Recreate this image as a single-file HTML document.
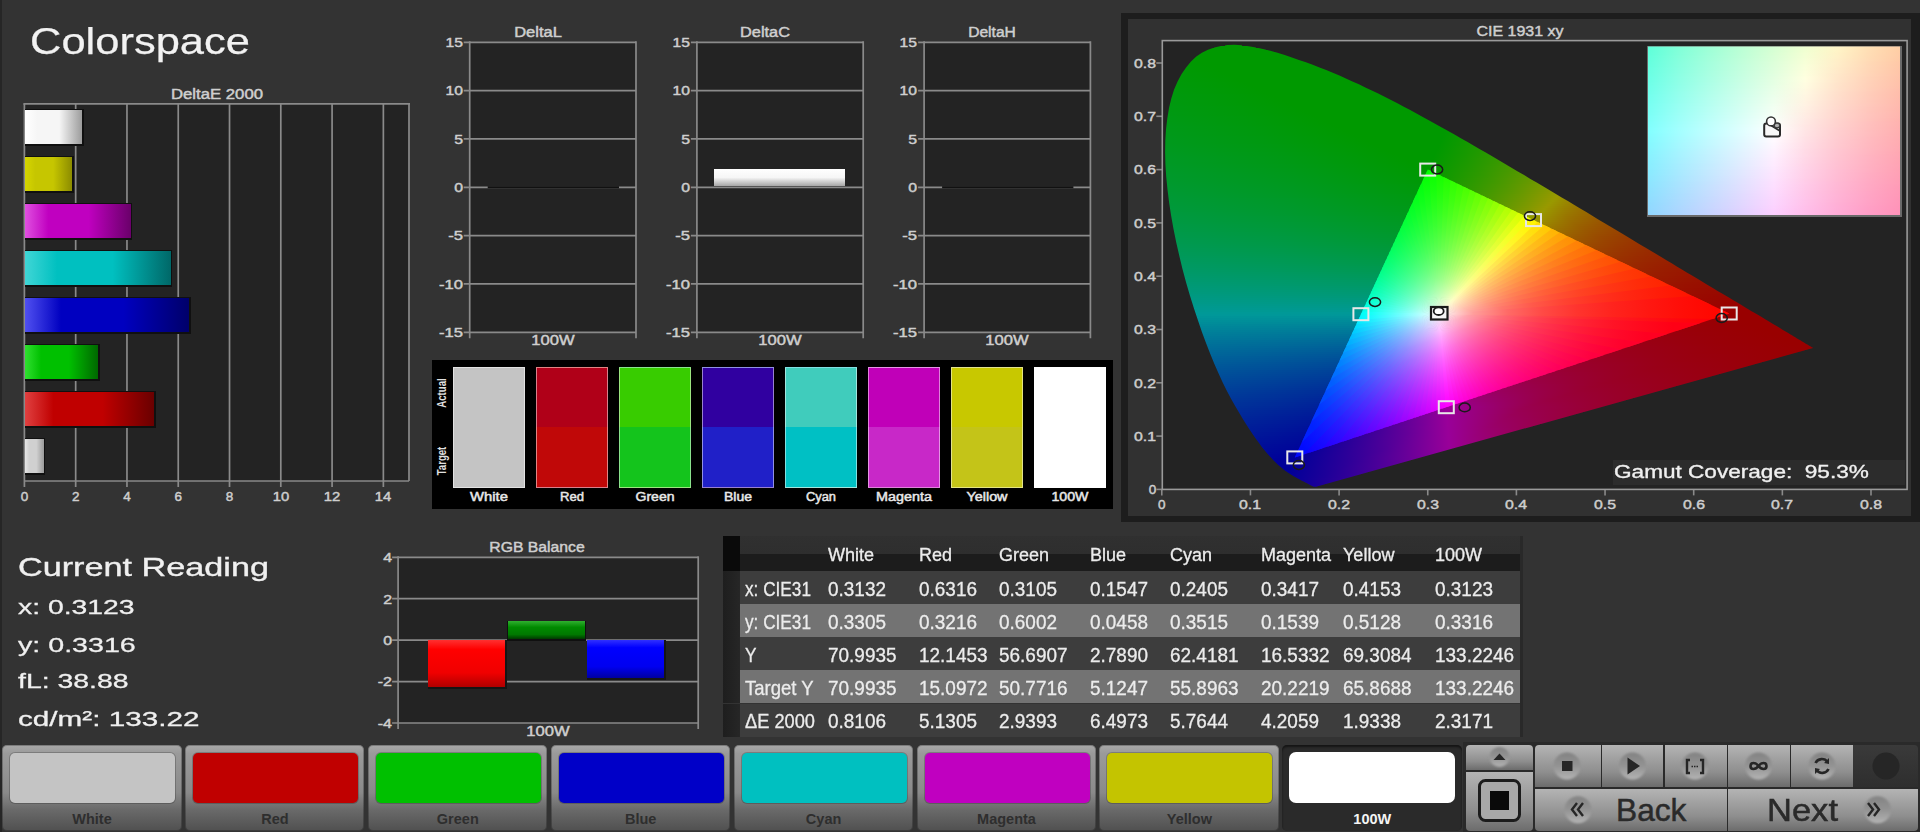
<!DOCTYPE html>
<html><head><meta charset="utf-8"><title>Colorspace</title>
<style>
html,body{margin:0;padding:0;}
body{width:1920px;height:832px;overflow:hidden;background:#333333;position:relative;font-family:"Liberation Sans",sans-serif;}
.t{position:absolute;white-space:pre;line-height:1.117em;height:1.117em;}
.r{position:absolute;box-sizing:border-box;}
svg{position:absolute;left:0;top:0;overflow:visible;}
</style></head><body>

<div class="r" style="left:0.00px;top:0.00px;width:2.00px;height:832.00px;background:#262626;"></div>
<div class="t" style="left:30.00px;top:19.68px;font-size:37.70px;color:#f2f2f2;-webkit-text-stroke:0.25px #f2f2f2;transform:scaleX(1.1537);transform-origin:left top;">Colorspace</div>
<div class="t" style="left:217.00px;top:86.73px;font-size:14.00px;color:#cfcfcf;-webkit-text-stroke:0.45px #cfcfcf;transform:translateX(-50%) scaleX(1.1939);transform-origin:center top;">DeltaE 2000</div>
<div class="r" style="left:24.40px;top:103.80px;width:384.60px;height:377.20px;background:#232323;"></div>
<div class="t" style="left:24.40px;top:488.78px;font-size:13.50px;color:#cfcfcf;-webkit-text-stroke:0.45px #cfcfcf;transform:translateX(-50%);transform-origin:center top;">0</div>
<div class="t" style="left:75.68px;top:488.78px;font-size:13.50px;color:#cfcfcf;-webkit-text-stroke:0.45px #cfcfcf;transform:translateX(-50%);transform-origin:center top;">2</div>
<div class="t" style="left:126.96px;top:488.78px;font-size:13.50px;color:#cfcfcf;-webkit-text-stroke:0.45px #cfcfcf;transform:translateX(-50%);transform-origin:center top;">4</div>
<div class="t" style="left:178.24px;top:488.78px;font-size:13.50px;color:#cfcfcf;-webkit-text-stroke:0.45px #cfcfcf;transform:translateX(-50%);transform-origin:center top;">6</div>
<div class="t" style="left:229.52px;top:488.78px;font-size:13.50px;color:#cfcfcf;-webkit-text-stroke:0.45px #cfcfcf;transform:translateX(-50%);transform-origin:center top;">8</div>
<div class="t" style="left:280.80px;top:488.78px;font-size:13.50px;color:#cfcfcf;-webkit-text-stroke:0.45px #cfcfcf;transform:translateX(-50%) scaleX(1.0988);transform-origin:center top;">10</div>
<div class="t" style="left:332.08px;top:488.78px;font-size:13.50px;color:#cfcfcf;-webkit-text-stroke:0.45px #cfcfcf;transform:translateX(-50%) scaleX(1.0988);transform-origin:center top;">12</div>
<div class="t" style="left:383.36px;top:488.78px;font-size:13.50px;color:#cfcfcf;-webkit-text-stroke:0.45px #cfcfcf;transform:translateX(-50%) scaleX(1.0988);transform-origin:center top;">14</div>
<svg width="1920" height="832" style="z-index:1"><line x1="75.68" y1="103.80" x2="75.68" y2="487.00" stroke="#8a8a8a" stroke-width="1.70"/><line x1="126.96" y1="103.80" x2="126.96" y2="487.00" stroke="#8a8a8a" stroke-width="1.70"/><line x1="178.24" y1="103.80" x2="178.24" y2="487.00" stroke="#8a8a8a" stroke-width="1.70"/><line x1="229.52" y1="103.80" x2="229.52" y2="487.00" stroke="#8a8a8a" stroke-width="1.70"/><line x1="280.80" y1="103.80" x2="280.80" y2="487.00" stroke="#8a8a8a" stroke-width="1.70"/><line x1="332.08" y1="103.80" x2="332.08" y2="487.00" stroke="#8a8a8a" stroke-width="1.70"/><line x1="383.36" y1="103.80" x2="383.36" y2="487.00" stroke="#8a8a8a" stroke-width="1.70"/><line x1="23.40" y1="103.80" x2="410.00" y2="103.80" stroke="#8a8a8a" stroke-width="1.70"/><line x1="24.40" y1="103.80" x2="24.40" y2="487.00" stroke="#8a8a8a" stroke-width="1.70"/><line x1="409.00" y1="103.80" x2="409.00" y2="481.00" stroke="#8a8a8a" stroke-width="1.70"/><line x1="24.40" y1="481.00" x2="409.00" y2="481.00" stroke="#8a8a8a" stroke-width="1.70"/></svg>
<div class="r" style="left:24.90px;top:108.50px;width:58.91px;height:37.00px;background:#101010;z-index:2;"></div>
<div class="r" style="left:24.90px;top:110.00px;width:57.41px;height:34.00px;background:linear-gradient(90deg,#ffffff 0%,#f6f6f6 22%,#f6f6f6 60%,#9c9c9c 100%);z-index:3;"></div>
<div class="r" style="left:24.90px;top:155.50px;width:49.08px;height:37.00px;background:#101010;z-index:2;"></div>
<div class="r" style="left:24.90px;top:157.00px;width:47.58px;height:34.00px;background:linear-gradient(90deg,#d6d600 0%,#c6c600 22%,#c6c600 60%,#8c8c00 100%);z-index:3;"></div>
<div class="r" style="left:24.90px;top:202.50px;width:107.34px;height:37.00px;background:#101010;z-index:2;"></div>
<div class="r" style="left:24.90px;top:204.00px;width:105.84px;height:34.00px;background:linear-gradient(90deg,#e050e0 0%,#c000c0 22%,#c000c0 60%,#6a006a 100%);z-index:3;"></div>
<div class="r" style="left:24.90px;top:249.50px;width:147.30px;height:37.00px;background:#101010;z-index:2;"></div>
<div class="r" style="left:24.90px;top:251.00px;width:145.80px;height:34.00px;background:linear-gradient(90deg,#40d6d6 0%,#00c0c0 22%,#00c0c0 60%,#006868 100%);z-index:3;"></div>
<div class="r" style="left:24.90px;top:296.50px;width:166.09px;height:37.00px;background:#101010;z-index:2;"></div>
<div class="r" style="left:24.90px;top:298.00px;width:164.59px;height:34.00px;background:linear-gradient(90deg,#5050f0 0%,#0000c0 22%,#0000c0 60%,#00006a 100%);z-index:3;"></div>
<div class="r" style="left:24.90px;top:343.50px;width:74.86px;height:37.00px;background:#101010;z-index:2;"></div>
<div class="r" style="left:24.90px;top:345.00px;width:73.36px;height:34.00px;background:linear-gradient(90deg,#30e030 0%,#00c000 22%,#00c000 60%,#006800 100%);z-index:3;"></div>
<div class="r" style="left:24.90px;top:390.50px;width:131.05px;height:37.00px;background:#101010;z-index:2;"></div>
<div class="r" style="left:24.90px;top:392.00px;width:129.55px;height:34.00px;background:linear-gradient(90deg,#e04040 0%,#c00000 22%,#c00000 60%,#6a0000 100%);z-index:3;"></div>
<div class="r" style="left:24.90px;top:437.50px;width:20.28px;height:37.00px;background:#101010;z-index:2;"></div>
<div class="r" style="left:24.90px;top:439.00px;width:18.78px;height:34.00px;background:linear-gradient(90deg,#e6e6e6 0%,#d0d0d0 22%,#d0d0d0 60%,#9a9a9a 100%);z-index:3;"></div>
<div class="r" style="left:469.70px;top:42.30px;width:166.30px;height:290.00px;background:#232323;"></div>
<div class="t" style="left:537.65px;top:25.13px;font-size:14.00px;color:#cfcfcf;-webkit-text-stroke:0.45px #cfcfcf;transform:translateX(-50%) scaleX(1.1762);transform-origin:center top;">DeltaL</div>
<div class="t" style="left:462.70px;top:35.08px;font-size:13.50px;color:#cfcfcf;-webkit-text-stroke:0.45px #cfcfcf;transform:translateX(-100%) scaleX(1.1587);transform-origin:right top;">15</div>
<div class="t" style="left:462.70px;top:83.42px;font-size:13.50px;color:#cfcfcf;-webkit-text-stroke:0.45px #cfcfcf;transform:translateX(-100%) scaleX(1.1587);transform-origin:right top;">10</div>
<div class="t" style="left:462.70px;top:131.75px;font-size:13.50px;color:#cfcfcf;-webkit-text-stroke:0.45px #cfcfcf;transform:translateX(-100%) scaleX(1.1720);transform-origin:right top;">5</div>
<div class="t" style="left:462.70px;top:180.08px;font-size:13.50px;color:#cfcfcf;-webkit-text-stroke:0.45px #cfcfcf;transform:translateX(-100%) scaleX(1.1720);transform-origin:right top;">0</div>
<div class="t" style="left:462.70px;top:228.42px;font-size:13.50px;color:#cfcfcf;-webkit-text-stroke:0.45px #cfcfcf;transform:translateX(-100%) scaleX(1.2329);transform-origin:right top;">-5</div>
<div class="t" style="left:462.70px;top:276.75px;font-size:13.50px;color:#cfcfcf;-webkit-text-stroke:0.45px #cfcfcf;transform:translateX(-100%) scaleX(1.2300);transform-origin:right top;">-10</div>
<div class="t" style="left:462.70px;top:325.08px;font-size:13.50px;color:#cfcfcf;-webkit-text-stroke:0.45px #cfcfcf;transform:translateX(-100%) scaleX(1.2300);transform-origin:right top;">-15</div>
<div class="t" style="left:552.85px;top:333.33px;font-size:14.00px;color:#cfcfcf;-webkit-text-stroke:0.45px #cfcfcf;transform:translateX(-50%) scaleX(1.1839);transform-origin:center top;">100W</div>
<div class="r" style="left:696.90px;top:42.30px;width:166.30px;height:290.00px;background:#232323;"></div>
<div class="t" style="left:764.85px;top:25.13px;font-size:14.00px;color:#cfcfcf;-webkit-text-stroke:0.45px #cfcfcf;transform:translateX(-50%) scaleX(1.1637);transform-origin:center top;">DeltaC</div>
<div class="t" style="left:689.90px;top:35.08px;font-size:13.50px;color:#cfcfcf;-webkit-text-stroke:0.45px #cfcfcf;transform:translateX(-100%) scaleX(1.1587);transform-origin:right top;">15</div>
<div class="t" style="left:689.90px;top:83.42px;font-size:13.50px;color:#cfcfcf;-webkit-text-stroke:0.45px #cfcfcf;transform:translateX(-100%) scaleX(1.1587);transform-origin:right top;">10</div>
<div class="t" style="left:689.90px;top:131.75px;font-size:13.50px;color:#cfcfcf;-webkit-text-stroke:0.45px #cfcfcf;transform:translateX(-100%) scaleX(1.1720);transform-origin:right top;">5</div>
<div class="t" style="left:689.90px;top:180.08px;font-size:13.50px;color:#cfcfcf;-webkit-text-stroke:0.45px #cfcfcf;transform:translateX(-100%) scaleX(1.1720);transform-origin:right top;">0</div>
<div class="t" style="left:689.90px;top:228.42px;font-size:13.50px;color:#cfcfcf;-webkit-text-stroke:0.45px #cfcfcf;transform:translateX(-100%) scaleX(1.2329);transform-origin:right top;">-5</div>
<div class="t" style="left:689.90px;top:276.75px;font-size:13.50px;color:#cfcfcf;-webkit-text-stroke:0.45px #cfcfcf;transform:translateX(-100%) scaleX(1.2300);transform-origin:right top;">-10</div>
<div class="t" style="left:689.90px;top:325.08px;font-size:13.50px;color:#cfcfcf;-webkit-text-stroke:0.45px #cfcfcf;transform:translateX(-100%) scaleX(1.2300);transform-origin:right top;">-15</div>
<div class="t" style="left:780.05px;top:333.33px;font-size:14.00px;color:#cfcfcf;-webkit-text-stroke:0.45px #cfcfcf;transform:translateX(-50%) scaleX(1.1839);transform-origin:center top;">100W</div>
<div class="r" style="left:924.10px;top:42.30px;width:166.30px;height:290.00px;background:#232323;"></div>
<div class="t" style="left:992.05px;top:25.13px;font-size:14.00px;color:#cfcfcf;-webkit-text-stroke:0.45px #cfcfcf;transform:translateX(-50%) scaleX(1.1123);transform-origin:center top;">DeltaH</div>
<div class="t" style="left:917.10px;top:35.08px;font-size:13.50px;color:#cfcfcf;-webkit-text-stroke:0.45px #cfcfcf;transform:translateX(-100%) scaleX(1.1587);transform-origin:right top;">15</div>
<div class="t" style="left:917.10px;top:83.42px;font-size:13.50px;color:#cfcfcf;-webkit-text-stroke:0.45px #cfcfcf;transform:translateX(-100%) scaleX(1.1587);transform-origin:right top;">10</div>
<div class="t" style="left:917.10px;top:131.75px;font-size:13.50px;color:#cfcfcf;-webkit-text-stroke:0.45px #cfcfcf;transform:translateX(-100%) scaleX(1.1720);transform-origin:right top;">5</div>
<div class="t" style="left:917.10px;top:180.08px;font-size:13.50px;color:#cfcfcf;-webkit-text-stroke:0.45px #cfcfcf;transform:translateX(-100%) scaleX(1.1720);transform-origin:right top;">0</div>
<div class="t" style="left:917.10px;top:228.42px;font-size:13.50px;color:#cfcfcf;-webkit-text-stroke:0.45px #cfcfcf;transform:translateX(-100%) scaleX(1.2329);transform-origin:right top;">-5</div>
<div class="t" style="left:917.10px;top:276.75px;font-size:13.50px;color:#cfcfcf;-webkit-text-stroke:0.45px #cfcfcf;transform:translateX(-100%) scaleX(1.2300);transform-origin:right top;">-10</div>
<div class="t" style="left:917.10px;top:325.08px;font-size:13.50px;color:#cfcfcf;-webkit-text-stroke:0.45px #cfcfcf;transform:translateX(-100%) scaleX(1.2300);transform-origin:right top;">-15</div>
<div class="t" style="left:1007.25px;top:333.33px;font-size:14.00px;color:#cfcfcf;-webkit-text-stroke:0.45px #cfcfcf;transform:translateX(-50%) scaleX(1.1839);transform-origin:center top;">100W</div>
<svg width="1920" height="832" style="z-index:1"><line x1="463.70" y1="42.30" x2="636.00" y2="42.30" stroke="#8a8a8a" stroke-width="1.70"/><line x1="463.70" y1="90.63" x2="636.00" y2="90.63" stroke="#8a8a8a" stroke-width="1.70"/><line x1="463.70" y1="138.97" x2="636.00" y2="138.97" stroke="#8a8a8a" stroke-width="1.70"/><line x1="463.70" y1="187.30" x2="636.00" y2="187.30" stroke="#8a8a8a" stroke-width="1.70"/><line x1="463.70" y1="235.63" x2="636.00" y2="235.63" stroke="#8a8a8a" stroke-width="1.70"/><line x1="463.70" y1="283.97" x2="636.00" y2="283.97" stroke="#8a8a8a" stroke-width="1.70"/><line x1="463.70" y1="332.30" x2="636.00" y2="332.30" stroke="#8a8a8a" stroke-width="1.70"/><line x1="469.70" y1="41.30" x2="469.70" y2="338.30" stroke="#8a8a8a" stroke-width="1.70"/><line x1="636.00" y1="41.30" x2="636.00" y2="338.30" stroke="#8a8a8a" stroke-width="1.70"/><line x1="487.70" y1="187.30" x2="619.00" y2="187.30" stroke="#111111" stroke-width="2.00"/><line x1="690.90" y1="42.30" x2="863.20" y2="42.30" stroke="#8a8a8a" stroke-width="1.70"/><line x1="690.90" y1="90.63" x2="863.20" y2="90.63" stroke="#8a8a8a" stroke-width="1.70"/><line x1="690.90" y1="138.97" x2="863.20" y2="138.97" stroke="#8a8a8a" stroke-width="1.70"/><line x1="690.90" y1="187.30" x2="863.20" y2="187.30" stroke="#8a8a8a" stroke-width="1.70"/><line x1="690.90" y1="235.63" x2="863.20" y2="235.63" stroke="#8a8a8a" stroke-width="1.70"/><line x1="690.90" y1="283.97" x2="863.20" y2="283.97" stroke="#8a8a8a" stroke-width="1.70"/><line x1="690.90" y1="332.30" x2="863.20" y2="332.30" stroke="#8a8a8a" stroke-width="1.70"/><line x1="696.90" y1="41.30" x2="696.90" y2="338.30" stroke="#8a8a8a" stroke-width="1.70"/><line x1="863.20" y1="41.30" x2="863.20" y2="338.30" stroke="#8a8a8a" stroke-width="1.70"/><line x1="918.10" y1="42.30" x2="1090.40" y2="42.30" stroke="#8a8a8a" stroke-width="1.70"/><line x1="918.10" y1="90.63" x2="1090.40" y2="90.63" stroke="#8a8a8a" stroke-width="1.70"/><line x1="918.10" y1="138.97" x2="1090.40" y2="138.97" stroke="#8a8a8a" stroke-width="1.70"/><line x1="918.10" y1="187.30" x2="1090.40" y2="187.30" stroke="#8a8a8a" stroke-width="1.70"/><line x1="918.10" y1="235.63" x2="1090.40" y2="235.63" stroke="#8a8a8a" stroke-width="1.70"/><line x1="918.10" y1="283.97" x2="1090.40" y2="283.97" stroke="#8a8a8a" stroke-width="1.70"/><line x1="918.10" y1="332.30" x2="1090.40" y2="332.30" stroke="#8a8a8a" stroke-width="1.70"/><line x1="924.10" y1="41.30" x2="924.10" y2="338.30" stroke="#8a8a8a" stroke-width="1.70"/><line x1="1090.40" y1="41.30" x2="1090.40" y2="338.30" stroke="#8a8a8a" stroke-width="1.70"/><line x1="942.10" y1="187.30" x2="1073.40" y2="187.30" stroke="#111111" stroke-width="2.00"/></svg>
<div class="r" style="left:714.00px;top:168.50px;width:131.00px;height:17.50px;background:linear-gradient(180deg,#ffffff 0%,#f6f6f6 50%,#a6a6a6 100%);z-index:2;"></div>
<div class="r" style="left:432.20px;top:360.20px;width:681.00px;height:149.00px;background:#000000;"></div>
<div class="r" style="left:452.60px;top:366.80px;width:72.00px;height:121.50px;background:linear-gradient(180deg,#c4c4c4 0%,#c4c4c4 50%,#c4c4c4 50%,#c4c4c4 100%);border:1px solid rgba(255,255,255,0.5);"></div>
<div class="t" style="left:488.60px;top:491.14px;font-size:12.00px;color:#e8e8e8;-webkit-text-stroke:0.45px #e8e8e8;transform:translateX(-50%) scaleX(1.2323);transform-origin:center top;">White</div>
<div class="r" style="left:535.66px;top:366.80px;width:72.00px;height:121.50px;background:linear-gradient(180deg,#b00018 0%,#b00018 50%,#c00808 50%,#c00808 100%);border:1px solid rgba(255,255,255,0.5);"></div>
<div class="t" style="left:571.66px;top:491.14px;font-size:12.00px;color:#e8e8e8;-webkit-text-stroke:0.45px #e8e8e8;transform:translateX(-50%) scaleX(1.0902);transform-origin:center top;">Red</div>
<div class="r" style="left:618.72px;top:366.80px;width:72.00px;height:121.50px;background:linear-gradient(180deg,#38cc00 0%,#38cc00 50%,#14c41c 50%,#14c41c 100%);border:1px solid rgba(255,255,255,0.5);"></div>
<div class="t" style="left:654.72px;top:491.14px;font-size:12.00px;color:#e8e8e8;-webkit-text-stroke:0.45px #e8e8e8;transform:translateX(-50%) scaleX(1.1693);transform-origin:center top;">Green</div>
<div class="r" style="left:701.78px;top:366.80px;width:72.00px;height:121.50px;background:linear-gradient(180deg,#3000a0 0%,#3000a0 50%,#2020c8 50%,#2020c8 100%);border:1px solid rgba(255,255,255,0.5);"></div>
<div class="t" style="left:737.78px;top:491.14px;font-size:12.00px;color:#e8e8e8;-webkit-text-stroke:0.45px #e8e8e8;transform:translateX(-50%) scaleX(1.1658);transform-origin:center top;">Blue</div>
<div class="r" style="left:784.84px;top:366.80px;width:72.00px;height:121.50px;background:linear-gradient(180deg,#40ccbc 0%,#40ccbc 50%,#00c0c4 50%,#00c0c4 100%);border:1px solid rgba(255,255,255,0.5);"></div>
<div class="t" style="left:820.84px;top:491.14px;font-size:12.00px;color:#e8e8e8;-webkit-text-stroke:0.45px #e8e8e8;transform:translateX(-50%) scaleX(1.0709);transform-origin:center top;">Cyan</div>
<div class="r" style="left:867.90px;top:366.80px;width:72.00px;height:121.50px;background:linear-gradient(180deg,#c000b8 0%,#c000b8 50%,#c828c8 50%,#c828c8 100%);border:1px solid rgba(255,255,255,0.5);"></div>
<div class="t" style="left:903.90px;top:491.14px;font-size:12.00px;color:#e8e8e8;-webkit-text-stroke:0.45px #e8e8e8;transform:translateX(-50%) scaleX(1.1948);transform-origin:center top;">Magenta</div>
<div class="r" style="left:950.96px;top:366.80px;width:72.00px;height:121.50px;background:linear-gradient(180deg,#c8c800 0%,#c8c800 50%,#c4c418 50%,#c4c418 100%);border:1px solid rgba(255,255,255,0.5);"></div>
<div class="t" style="left:986.96px;top:491.14px;font-size:12.00px;color:#e8e8e8;-webkit-text-stroke:0.45px #e8e8e8;transform:translateX(-50%) scaleX(1.1971);transform-origin:center top;">Yellow</div>
<div class="r" style="left:1034.02px;top:366.80px;width:72.00px;height:121.50px;background:linear-gradient(180deg,#ffffff 0%,#ffffff 50%,#ffffff 50%,#ffffff 100%);border:1px solid rgba(255,255,255,0.5);"></div>
<div class="t" style="left:1070.02px;top:491.14px;font-size:12.00px;color:#e8e8e8;-webkit-text-stroke:0.45px #e8e8e8;transform:translateX(-50%) scaleX(1.1803);transform-origin:center top;">100W</div>
<div class="t" style="left:442.5px;top:393px;font-size:12px;color:#e0e0e0;font-weight:bold;transform:translate(-50%,-50%) rotate(-90deg) scaleX(0.8);">Actual</div>
<div class="t" style="left:442.5px;top:461px;font-size:12px;color:#e0e0e0;font-weight:bold;transform:translate(-50%,-50%) rotate(-90deg) scaleX(0.8);">Target</div>
<div class="r" style="left:1120.50px;top:13.00px;width:800.00px;height:508.50px;background:#1d1d1d;"></div>
<div class="r" style="left:1128.00px;top:19.00px;width:783.00px;height:496.50px;background:#313131;"></div>
<div class="r" style="left:1162.30px;top:40.60px;width:744.80px;height:448.80px;background:#232323;"></div>
<div class="t" style="left:1519.80px;top:22.92px;font-size:15.00px;color:#cfcfcf;-webkit-text-stroke:0.45px #cfcfcf;transform:translateX(-50%) scaleX(1.0647);transform-origin:center top;">CIE 1931 xy</div>
<svg width="1920" height="832" style="z-index:1"><defs><clipPath id="clipH"><path d="M1316.1 486.7L1316.1 486.7L1316.1 486.8L1316.0 486.8L1315.9 486.8L1315.9 486.8L1315.8 486.8L1315.7 486.8L1315.6 486.8L1315.5 486.8L1315.4 486.8L1315.3 486.8L1315.2 486.9L1315.1 486.9L1315.0 486.9L1314.8 486.8L1314.6 486.8L1314.4 486.8L1314.2 486.8L1314.0 486.7L1313.7 486.7L1313.5 486.6L1313.4 486.6L1313.2 486.5L1313.0 486.4L1312.8 486.3L1312.5 486.2L1312.3 486.1L1312.1 486.0L1311.8 485.9L1311.5 485.7L1311.2 485.6L1310.9 485.4L1310.5 485.2L1310.1 485.0L1309.8 484.8L1309.4 484.6L1308.9 484.4L1308.5 484.1L1308.0 483.9L1307.5 483.6L1307.0 483.3L1306.5 483.0L1305.9 482.7L1305.3 482.4L1304.6 482.0L1303.9 481.7L1303.1 481.3L1302.3 480.9L1301.5 480.4L1300.6 480.0L1299.7 479.5L1298.8 479.0L1297.8 478.5L1296.7 477.9L1295.7 477.3L1294.5 476.7L1293.3 476.0L1292.1 475.2L1290.8 474.4L1289.5 473.6L1288.1 472.7L1286.7 471.7L1285.2 470.7L1283.6 469.5L1281.9 468.1L1280.1 466.6L1278.2 464.9L1276.2 463.0L1274.1 460.9L1271.8 458.6L1269.5 456.0L1267.0 453.3L1264.5 450.3L1261.8 446.9L1259.0 443.1L1256.0 439.0L1252.9 434.6L1249.7 429.7L1246.3 424.5L1242.7 418.7L1239.0 412.4L1235.0 405.7L1230.9 398.5L1226.8 390.8L1222.7 382.4L1218.6 373.5L1214.4 363.9L1210.2 353.8L1206.1 343.2L1202.0 332.2L1198.0 320.5L1193.9 308.2L1189.9 295.4L1186.1 282.5L1182.6 269.4L1179.4 256.2L1176.3 242.7L1173.5 229.1L1171.1 215.6L1169.1 202.4L1167.5 189.5L1166.2 176.7L1165.4 164.2L1165.1 152.0L1165.3 140.4L1166.0 129.2L1167.3 118.4L1169.0 108.1L1171.3 98.4L1174.1 89.5L1177.6 81.5L1181.6 74.1L1186.1 67.4L1191.0 61.5L1196.3 56.6L1201.9 52.7L1208.0 49.7L1214.4 47.5L1221.0 46.0L1227.7 45.0L1234.5 44.7L1241.5 45.2L1248.7 46.2L1255.9 47.5L1263.0 49.0L1270.2 50.7L1277.5 52.8L1284.7 55.0L1291.9 57.4L1298.9 59.9L1305.9 62.3L1312.7 64.8L1319.5 67.4L1326.2 70.1L1332.8 72.8L1339.4 75.6L1345.9 78.4L1352.4 81.4L1358.9 84.3L1365.3 87.4L1371.8 90.4L1378.2 93.6L1384.6 96.8L1391.0 100.1L1397.4 103.3L1403.8 106.7L1410.2 110.1L1416.5 113.5L1422.8 116.9L1429.2 120.4L1435.5 123.9L1441.8 127.4L1448.2 131.0L1454.5 134.6L1460.8 138.2L1467.2 141.8L1473.5 145.5L1479.9 149.2L1486.2 152.8L1492.6 156.5L1498.9 160.2L1505.2 164.0L1511.5 167.7L1517.8 171.4L1524.1 175.1L1530.4 178.9L1536.7 182.6L1543.0 186.3L1549.3 190.0L1555.5 193.7L1561.7 197.4L1567.9 201.1L1574.0 204.8L1580.2 208.5L1586.3 212.1L1592.3 215.8L1598.3 219.4L1604.3 223.0L1610.2 226.5L1616.1 230.0L1622.0 233.5L1627.8 237.0L1633.5 240.5L1639.2 243.9L1644.8 247.2L1650.3 250.5L1655.8 253.8L1661.2 257.0L1666.5 260.2L1671.7 263.3L1676.8 266.4L1681.9 269.4L1686.8 272.4L1691.6 275.3L1696.3 278.1L1700.8 280.8L1705.2 283.4L1709.4 285.9L1713.6 288.4L1717.6 290.9L1721.6 293.2L1725.5 295.6L1729.3 297.8L1732.9 300.0L1736.4 302.1L1739.8 304.1L1743.0 306.0L1746.2 307.9L1749.1 309.7L1752.0 311.4L1754.8 313.0L1757.4 314.6L1760.0 316.1L1762.4 317.6L1764.7 319.0L1766.9 320.3L1769.0 321.6L1771.0 322.8L1773.0 324.0L1774.8 325.1L1776.6 326.1L1778.3 327.1L1779.9 328.1L1781.4 329.0L1782.9 329.9L1784.3 330.7L1785.6 331.5L1786.9 332.3L1788.2 333.0L1789.4 333.8L1790.5 334.5L1791.6 335.1L1792.7 335.8L1793.8 336.4L1794.8 337.0L1795.7 337.6L1796.6 338.2L1797.5 338.7L1798.4 339.2L1799.2 339.7L1800.0 340.1L1800.7 340.6L1801.4 341.0L1802.1 341.4L1802.7 341.8L1803.3 342.1L1803.8 342.4L1804.3 342.7L1804.8 343.0L1805.4 343.4L1806.0 343.7L1806.7 344.2L1807.4 344.6L1808.2 345.0L1808.9 345.5L1809.8 346.0L1810.8 346.6L1811.7 347.2L1812.5 347.6L1813.1 348.0Z"/></clipPath><clipPath id="clipT"><path d="M1729.2 313.5L1427.8 169.6L1294.8 457.4Z"/></clipPath><linearGradient id="o0" gradientUnits="userSpaceOnUse" x1="1224.6" x2="1242.2"><stop offset="0.0000" stop-color="#009900"/><stop offset="0.5000" stop-color="#009900"/><stop offset="1.0000" stop-color="#009900"/></linearGradient><linearGradient id="o1" gradientUnits="userSpaceOnUse" x1="1213.5" x2="1256.0"><stop offset="0.0000" stop-color="#009900"/><stop offset="0.5000" stop-color="#009900"/><stop offset="1.0000" stop-color="#009900"/></linearGradient><linearGradient id="o2" gradientUnits="userSpaceOnUse" x1="1206.9" x2="1265.9"><stop offset="0.0000" stop-color="#009900"/><stop offset="0.5000" stop-color="#009900"/><stop offset="1.0000" stop-color="#009900"/></linearGradient><linearGradient id="o3" gradientUnits="userSpaceOnUse" x1="1202.3" x2="1274.2"><stop offset="0.0000" stop-color="#009900"/><stop offset="0.5000" stop-color="#009900"/><stop offset="1.0000" stop-color="#009900"/></linearGradient><linearGradient id="o4" gradientUnits="userSpaceOnUse" x1="1198.4" x2="1281.2"><stop offset="0.0000" stop-color="#009900"/><stop offset="0.5000" stop-color="#009900"/><stop offset="1.0000" stop-color="#009900"/></linearGradient><linearGradient id="o5" gradientUnits="userSpaceOnUse" x1="1195.6" x2="1287.5"><stop offset="0.0000" stop-color="#009900"/><stop offset="0.5000" stop-color="#009900"/><stop offset="1.0000" stop-color="#009900"/></linearGradient><linearGradient id="o6" gradientUnits="userSpaceOnUse" x1="1192.9" x2="1293.5"><stop offset="0.0000" stop-color="#009900"/><stop offset="0.5000" stop-color="#009900"/><stop offset="1.0000" stop-color="#009900"/></linearGradient><linearGradient id="o7" gradientUnits="userSpaceOnUse" x1="1190.7" x2="1299.4"><stop offset="0.0000" stop-color="#009901"/><stop offset="0.0246" stop-color="#009900"/><stop offset="0.0492" stop-color="#009900"/><stop offset="0.5246" stop-color="#009900"/><stop offset="1.0000" stop-color="#009900"/></linearGradient><linearGradient id="o8" gradientUnits="userSpaceOnUse" x1="1188.6" x2="1305.2"><stop offset="0.0000" stop-color="#009901"/><stop offset="0.0500" stop-color="#009901"/><stop offset="0.1000" stop-color="#009900"/><stop offset="0.5500" stop-color="#009900"/><stop offset="1.0000" stop-color="#009900"/></linearGradient><linearGradient id="o9" gradientUnits="userSpaceOnUse" x1="1186.8" x2="1310.8"><stop offset="0.0000" stop-color="#009902"/><stop offset="0.0712" stop-color="#009901"/><stop offset="0.1424" stop-color="#009900"/><stop offset="0.5712" stop-color="#009900"/><stop offset="1.0000" stop-color="#009900"/></linearGradient><linearGradient id="o10" gradientUnits="userSpaceOnUse" x1="1185.1" x2="1316.2"><stop offset="0.0000" stop-color="#009903"/><stop offset="0.0898" stop-color="#009901"/><stop offset="0.1795" stop-color="#009900"/><stop offset="0.5898" stop-color="#009900"/><stop offset="1.0000" stop-color="#009900"/></linearGradient><linearGradient id="o11" gradientUnits="userSpaceOnUse" x1="1183.4" x2="1321.4"><stop offset="0.0000" stop-color="#009903"/><stop offset="0.1066" stop-color="#009902"/><stop offset="0.2132" stop-color="#009900"/><stop offset="0.6066" stop-color="#009900"/><stop offset="1.0000" stop-color="#009900"/></linearGradient><linearGradient id="o12" gradientUnits="userSpaceOnUse" x1="1182.0" x2="1326.4"><stop offset="0.0000" stop-color="#009904"/><stop offset="0.1212" stop-color="#009902"/><stop offset="0.2425" stop-color="#009900"/><stop offset="0.6212" stop-color="#009900"/><stop offset="1.0000" stop-color="#009900"/></linearGradient><linearGradient id="o13" gradientUnits="userSpaceOnUse" x1="1180.7" x2="1331.4"><stop offset="0.0000" stop-color="#009905"/><stop offset="0.1346" stop-color="#009902"/><stop offset="0.2691" stop-color="#009900"/><stop offset="0.6346" stop-color="#009900"/><stop offset="1.0000" stop-color="#009900"/></linearGradient><linearGradient id="o14" gradientUnits="userSpaceOnUse" x1="1179.3" x2="1336.3"><stop offset="0.0000" stop-color="#009905"/><stop offset="0.1469" stop-color="#009903"/><stop offset="0.2938" stop-color="#009900"/><stop offset="0.6469" stop-color="#009900"/><stop offset="1.0000" stop-color="#009900"/></linearGradient><linearGradient id="o15" gradientUnits="userSpaceOnUse" x1="1178.1" x2="1341.0"><stop offset="0.0000" stop-color="#009906"/><stop offset="0.1582" stop-color="#009903"/><stop offset="0.3163" stop-color="#009900"/><stop offset="0.6582" stop-color="#009900"/><stop offset="1.0000" stop-color="#009900"/></linearGradient><linearGradient id="o16" gradientUnits="userSpaceOnUse" x1="1177.0" x2="1345.6"><stop offset="0.0000" stop-color="#009907"/><stop offset="0.1684" stop-color="#009903"/><stop offset="0.3369" stop-color="#009900"/><stop offset="0.6684" stop-color="#009900"/><stop offset="1.0000" stop-color="#009900"/></linearGradient><linearGradient id="o17" gradientUnits="userSpaceOnUse" x1="1175.9" x2="1350.2"><stop offset="0.0000" stop-color="#009907"/><stop offset="0.1781" stop-color="#009904"/><stop offset="0.3563" stop-color="#009900"/><stop offset="0.6781" stop-color="#009900"/><stop offset="1.0000" stop-color="#009900"/></linearGradient><linearGradient id="o18" gradientUnits="userSpaceOnUse" x1="1174.8" x2="1354.6"><stop offset="0.0000" stop-color="#009908"/><stop offset="0.1873" stop-color="#009904"/><stop offset="0.3746" stop-color="#009900"/><stop offset="0.6873" stop-color="#009900"/><stop offset="1.0000" stop-color="#009900"/></linearGradient><linearGradient id="o19" gradientUnits="userSpaceOnUse" x1="1173.9" x2="1359.0"><stop offset="0.0000" stop-color="#009909"/><stop offset="0.1957" stop-color="#009905"/><stop offset="0.3915" stop-color="#009900"/><stop offset="0.6957" stop-color="#009900"/><stop offset="1.0000" stop-color="#009900"/></linearGradient><linearGradient id="o20" gradientUnits="userSpaceOnUse" x1="1173.1" x2="1363.3"><stop offset="0.0000" stop-color="#009909"/><stop offset="0.2037" stop-color="#009905"/><stop offset="0.4073" stop-color="#009900"/><stop offset="0.7037" stop-color="#009900"/><stop offset="1.0000" stop-color="#009900"/></linearGradient><linearGradient id="o21" gradientUnits="userSpaceOnUse" x1="1172.2" x2="1367.6"><stop offset="0.0000" stop-color="#00990a"/><stop offset="0.2112" stop-color="#009905"/><stop offset="0.4225" stop-color="#009900"/><stop offset="0.7112" stop-color="#009900"/><stop offset="1.0000" stop-color="#009900"/></linearGradient><linearGradient id="o22" gradientUnits="userSpaceOnUse" x1="1171.4" x2="1371.8"><stop offset="0.0000" stop-color="#00990b"/><stop offset="0.2185" stop-color="#009906"/><stop offset="0.4370" stop-color="#009900"/><stop offset="0.7185" stop-color="#009900"/><stop offset="1.0000" stop-color="#009900"/></linearGradient><linearGradient id="o23" gradientUnits="userSpaceOnUse" x1="1170.7" x2="1375.9"><stop offset="0.0000" stop-color="#00990b"/><stop offset="0.2252" stop-color="#009906"/><stop offset="0.4505" stop-color="#009900"/><stop offset="0.7252" stop-color="#009900"/><stop offset="1.0000" stop-color="#009900"/></linearGradient><linearGradient id="o24" gradientUnits="userSpaceOnUse" x1="1170.0" x2="1380.0"><stop offset="0.0000" stop-color="#00990c"/><stop offset="0.2317" stop-color="#009906"/><stop offset="0.4633" stop-color="#009900"/><stop offset="0.7317" stop-color="#009900"/><stop offset="1.0000" stop-color="#009900"/></linearGradient><linearGradient id="o25" gradientUnits="userSpaceOnUse" x1="1169.4" x2="1384.0"><stop offset="0.0000" stop-color="#00990d"/><stop offset="0.2379" stop-color="#009907"/><stop offset="0.4758" stop-color="#009900"/><stop offset="0.7379" stop-color="#009900"/><stop offset="1.0000" stop-color="#009900"/></linearGradient><linearGradient id="o26" gradientUnits="userSpaceOnUse" x1="1168.7" x2="1388.0"><stop offset="0.0000" stop-color="#00990d"/><stop offset="0.2439" stop-color="#009907"/><stop offset="0.4877" stop-color="#009900"/><stop offset="0.7439" stop-color="#009900"/><stop offset="1.0000" stop-color="#009900"/></linearGradient><linearGradient id="o27" gradientUnits="userSpaceOnUse" x1="1168.2" x2="1392.0"><stop offset="0.0000" stop-color="#00990e"/><stop offset="0.2496" stop-color="#009907"/><stop offset="0.4992" stop-color="#009900"/><stop offset="0.7496" stop-color="#009900"/><stop offset="1.0000" stop-color="#009900"/></linearGradient><linearGradient id="o28" gradientUnits="userSpaceOnUse" x1="1167.7" x2="1395.9"><stop offset="0.0000" stop-color="#00990f"/><stop offset="0.2550" stop-color="#009908"/><stop offset="0.5101" stop-color="#009900"/><stop offset="0.7550" stop-color="#009900"/><stop offset="1.0000" stop-color="#009900"/></linearGradient><linearGradient id="o29" gradientUnits="userSpaceOnUse" x1="1167.2" x2="1399.8"><stop offset="0.0000" stop-color="#00990f"/><stop offset="0.2603" stop-color="#009908"/><stop offset="0.5205" stop-color="#009900"/><stop offset="0.7603" stop-color="#009900"/><stop offset="1.0000" stop-color="#009900"/></linearGradient><linearGradient id="o30" gradientUnits="userSpaceOnUse" x1="1166.7" x2="1403.6"><stop offset="0.0000" stop-color="#009910"/><stop offset="0.2654" stop-color="#009908"/><stop offset="0.5308" stop-color="#009900"/><stop offset="0.7654" stop-color="#009900"/><stop offset="1.0000" stop-color="#009900"/></linearGradient><linearGradient id="o31" gradientUnits="userSpaceOnUse" x1="1166.3" x2="1407.4"><stop offset="0.0000" stop-color="#009911"/><stop offset="0.2703" stop-color="#009909"/><stop offset="0.5407" stop-color="#009900"/><stop offset="0.7703" stop-color="#009900"/><stop offset="1.0000" stop-color="#009900"/></linearGradient><linearGradient id="o32" gradientUnits="userSpaceOnUse" x1="1165.8" x2="1411.2"><stop offset="0.0000" stop-color="#009911"/><stop offset="0.2751" stop-color="#009909"/><stop offset="0.5502" stop-color="#009900"/><stop offset="0.7751" stop-color="#009900"/><stop offset="1.0000" stop-color="#009900"/></linearGradient><linearGradient id="o33" gradientUnits="userSpaceOnUse" x1="1165.5" x2="1414.9"><stop offset="0.0000" stop-color="#009912"/><stop offset="0.2797" stop-color="#00990a"/><stop offset="0.5594" stop-color="#009900"/><stop offset="0.7797" stop-color="#009900"/><stop offset="1.0000" stop-color="#009900"/></linearGradient><linearGradient id="o34" gradientUnits="userSpaceOnUse" x1="1165.2" x2="1418.6"><stop offset="0.0000" stop-color="#009913"/><stop offset="0.2842" stop-color="#00990a"/><stop offset="0.5683" stop-color="#009900"/><stop offset="0.7842" stop-color="#009900"/><stop offset="1.0000" stop-color="#009900"/></linearGradient><linearGradient id="o35" gradientUnits="userSpaceOnUse" x1="1164.8" x2="1422.3"><stop offset="0.0000" stop-color="#009913"/><stop offset="0.2885" stop-color="#00990a"/><stop offset="0.5770" stop-color="#009900"/><stop offset="0.7885" stop-color="#009900"/><stop offset="1.0000" stop-color="#009900"/></linearGradient><linearGradient id="o36" gradientUnits="userSpaceOnUse" x1="1164.5" x2="1426.0"><stop offset="0.0000" stop-color="#009914"/><stop offset="0.2928" stop-color="#00990b"/><stop offset="0.5855" stop-color="#009900"/><stop offset="0.7883" stop-color="#009900"/><stop offset="0.9911" stop-color="#009900"/><stop offset="0.9956" stop-color="#009900"/><stop offset="1.0000" stop-color="#009900"/></linearGradient><linearGradient id="o37" gradientUnits="userSpaceOnUse" x1="1164.2" x2="1429.6"><stop offset="0.0000" stop-color="#009915"/><stop offset="0.2969" stop-color="#00990b"/><stop offset="0.5937" stop-color="#009900"/><stop offset="0.7859" stop-color="#009900"/><stop offset="0.9781" stop-color="#009900"/><stop offset="0.9891" stop-color="#009900"/><stop offset="1.0000" stop-color="#009900"/></linearGradient><linearGradient id="o38" gradientUnits="userSpaceOnUse" x1="1164.0" x2="1433.2"><stop offset="0.0000" stop-color="#009915"/><stop offset="0.3008" stop-color="#00990c"/><stop offset="0.6016" stop-color="#009900"/><stop offset="0.7836" stop-color="#009900"/><stop offset="0.9655" stop-color="#009900"/><stop offset="0.9828" stop-color="#009900"/><stop offset="1.0000" stop-color="#009900"/></linearGradient><linearGradient id="o39" gradientUnits="userSpaceOnUse" x1="1163.7" x2="1436.9"><stop offset="0.0000" stop-color="#009916"/><stop offset="0.3047" stop-color="#00990c"/><stop offset="0.6093" stop-color="#009900"/><stop offset="0.7813" stop-color="#009900"/><stop offset="0.9533" stop-color="#009900"/><stop offset="0.9767" stop-color="#009900"/><stop offset="1.0000" stop-color="#009900"/></linearGradient><linearGradient id="o40" gradientUnits="userSpaceOnUse" x1="1163.5" x2="1440.5"><stop offset="0.0000" stop-color="#009917"/><stop offset="0.3084" stop-color="#00990c"/><stop offset="0.6169" stop-color="#009900"/><stop offset="0.7792" stop-color="#009900"/><stop offset="0.9416" stop-color="#009900"/><stop offset="0.9708" stop-color="#009900"/><stop offset="1.0000" stop-color="#009900"/></linearGradient><linearGradient id="o41" gradientUnits="userSpaceOnUse" x1="1163.3" x2="1444.0"><stop offset="0.0000" stop-color="#009918"/><stop offset="0.3121" stop-color="#00990d"/><stop offset="0.6242" stop-color="#009900"/><stop offset="0.7772" stop-color="#009900"/><stop offset="0.9302" stop-color="#009900"/><stop offset="0.9651" stop-color="#009900"/><stop offset="1.0000" stop-color="#009900"/></linearGradient><linearGradient id="o42" gradientUnits="userSpaceOnUse" x1="1163.0" x2="1447.6"><stop offset="0.0000" stop-color="#009918"/><stop offset="0.3157" stop-color="#00990d"/><stop offset="0.6315" stop-color="#009900"/><stop offset="0.7753" stop-color="#009900"/><stop offset="0.9192" stop-color="#009900"/><stop offset="0.9577" stop-color="#009900"/><stop offset="0.9962" stop-color="#009900"/><stop offset="0.9981" stop-color="#009900"/><stop offset="1.0000" stop-color="#019900"/></linearGradient><linearGradient id="o43" gradientUnits="userSpaceOnUse" x1="1162.9" x2="1451.1"><stop offset="0.0000" stop-color="#009919"/><stop offset="0.3192" stop-color="#00990e"/><stop offset="0.6384" stop-color="#009900"/><stop offset="0.7734" stop-color="#009900"/><stop offset="0.9084" stop-color="#009900"/><stop offset="0.9446" stop-color="#009900"/><stop offset="0.9807" stop-color="#009900"/><stop offset="0.9904" stop-color="#029900"/><stop offset="1.0000" stop-color="#049900"/></linearGradient><linearGradient id="o44" gradientUnits="userSpaceOnUse" x1="1162.8" x2="1454.7"><stop offset="0.0000" stop-color="#00991a"/><stop offset="0.3226" stop-color="#00990e"/><stop offset="0.6452" stop-color="#009900"/><stop offset="0.7716" stop-color="#009900"/><stop offset="0.8980" stop-color="#009900"/><stop offset="0.9319" stop-color="#009900"/><stop offset="0.9657" stop-color="#009900"/><stop offset="0.9829" stop-color="#039900"/><stop offset="1.0000" stop-color="#079900"/></linearGradient><linearGradient id="o45" gradientUnits="userSpaceOnUse" x1="1162.6" x2="1458.2"><stop offset="0.0000" stop-color="#00991a"/><stop offset="0.3259" stop-color="#00990e"/><stop offset="0.6519" stop-color="#009900"/><stop offset="0.7699" stop-color="#009900"/><stop offset="0.8879" stop-color="#009900"/><stop offset="0.9195" stop-color="#009900"/><stop offset="0.9511" stop-color="#009900"/><stop offset="0.9756" stop-color="#059900"/><stop offset="1.0000" stop-color="#0a9900"/></linearGradient><linearGradient id="o46" gradientUnits="userSpaceOnUse" x1="1162.5" x2="1461.7"><stop offset="0.0000" stop-color="#00991b"/><stop offset="0.3292" stop-color="#00990f"/><stop offset="0.6584" stop-color="#009900"/><stop offset="0.7682" stop-color="#009900"/><stop offset="0.8780" stop-color="#009900"/><stop offset="0.9075" stop-color="#009900"/><stop offset="0.9369" stop-color="#009900"/><stop offset="0.9684" stop-color="#079900"/><stop offset="1.0000" stop-color="#0d9900"/></linearGradient><linearGradient id="o47" gradientUnits="userSpaceOnUse" x1="1162.4" x2="1465.2"><stop offset="0.0000" stop-color="#00991c"/><stop offset="0.3324" stop-color="#00990f"/><stop offset="0.6647" stop-color="#009900"/><stop offset="0.7666" stop-color="#009900"/><stop offset="0.8685" stop-color="#009900"/><stop offset="0.8957" stop-color="#009900"/><stop offset="0.9230" stop-color="#009900"/><stop offset="0.9615" stop-color="#089900"/><stop offset="1.0000" stop-color="#119900"/></linearGradient><linearGradient id="o48" gradientUnits="userSpaceOnUse" x1="1162.2" x2="1468.7"><stop offset="0.0000" stop-color="#00991d"/><stop offset="0.3355" stop-color="#009910"/><stop offset="0.6709" stop-color="#009900"/><stop offset="0.7650" stop-color="#009900"/><stop offset="0.8591" stop-color="#009900"/><stop offset="0.8843" stop-color="#009900"/><stop offset="0.9095" stop-color="#009900"/><stop offset="0.9547" stop-color="#0a9900"/><stop offset="1.0000" stop-color="#149900"/></linearGradient><linearGradient id="o49" gradientUnits="userSpaceOnUse" x1="1162.2" x2="1472.2"><stop offset="0.0000" stop-color="#00991d"/><stop offset="0.3385" stop-color="#009910"/><stop offset="0.6769" stop-color="#009900"/><stop offset="0.7634" stop-color="#009900"/><stop offset="0.8500" stop-color="#009900"/><stop offset="0.8731" stop-color="#009900"/><stop offset="0.8963" stop-color="#009900"/><stop offset="0.9481" stop-color="#0c9900"/><stop offset="1.0000" stop-color="#189900"/></linearGradient><linearGradient id="o50" gradientUnits="userSpaceOnUse" x1="1162.2" x2="1475.7"><stop offset="0.0000" stop-color="#00991e"/><stop offset="0.3414" stop-color="#009911"/><stop offset="0.6828" stop-color="#009900"/><stop offset="0.7619" stop-color="#009900"/><stop offset="0.8410" stop-color="#009900"/><stop offset="0.8622" stop-color="#009900"/><stop offset="0.8834" stop-color="#009900"/><stop offset="0.9417" stop-color="#0d9900"/><stop offset="1.0000" stop-color="#1b9900"/></linearGradient><linearGradient id="o51" gradientUnits="userSpaceOnUse" x1="1162.1" x2="1479.1"><stop offset="0.0000" stop-color="#00991f"/><stop offset="0.3443" stop-color="#009911"/><stop offset="0.6886" stop-color="#009900"/><stop offset="0.7605" stop-color="#009900"/><stop offset="0.8324" stop-color="#009900"/><stop offset="0.8516" stop-color="#009900"/><stop offset="0.8709" stop-color="#009900"/><stop offset="0.9354" stop-color="#0f9900"/><stop offset="1.0000" stop-color="#1f9900"/></linearGradient><linearGradient id="o52" gradientUnits="userSpaceOnUse" x1="1162.1" x2="1482.6"><stop offset="0.0000" stop-color="#009920"/><stop offset="0.3471" stop-color="#009912"/><stop offset="0.6943" stop-color="#009900"/><stop offset="0.7591" stop-color="#009900"/><stop offset="0.8239" stop-color="#009900"/><stop offset="0.8412" stop-color="#009900"/><stop offset="0.8586" stop-color="#009900"/><stop offset="0.9293" stop-color="#119900"/><stop offset="1.0000" stop-color="#239900"/></linearGradient><linearGradient id="o53" gradientUnits="userSpaceOnUse" x1="1162.1" x2="1486.0"><stop offset="0.0000" stop-color="#009920"/><stop offset="0.3499" stop-color="#009912"/><stop offset="0.6999" stop-color="#009900"/><stop offset="0.7577" stop-color="#009900"/><stop offset="0.8156" stop-color="#009900"/><stop offset="0.8311" stop-color="#009900"/><stop offset="0.8466" stop-color="#009900"/><stop offset="0.9233" stop-color="#139900"/><stop offset="1.0000" stop-color="#269900"/></linearGradient><linearGradient id="o54" gradientUnits="userSpaceOnUse" x1="1162.1" x2="1489.5"><stop offset="0.0000" stop-color="#009921"/><stop offset="0.3526" stop-color="#009913"/><stop offset="0.7053" stop-color="#009900"/><stop offset="0.7564" stop-color="#009900"/><stop offset="0.8075" stop-color="#009900"/><stop offset="0.8212" stop-color="#009900"/><stop offset="0.8349" stop-color="#009900"/><stop offset="0.9174" stop-color="#149900"/><stop offset="1.0000" stop-color="#2a9900"/></linearGradient><linearGradient id="o55" gradientUnits="userSpaceOnUse" x1="1162.1" x2="1492.9"><stop offset="0.0000" stop-color="#009922"/><stop offset="0.3553" stop-color="#009913"/><stop offset="0.7106" stop-color="#009900"/><stop offset="0.7551" stop-color="#009900"/><stop offset="0.7996" stop-color="#009900"/><stop offset="0.8115" stop-color="#009900"/><stop offset="0.8234" stop-color="#009900"/><stop offset="0.9117" stop-color="#169900"/><stop offset="1.0000" stop-color="#2e9900"/></linearGradient><linearGradient id="o56" gradientUnits="userSpaceOnUse" x1="1162.2" x2="1496.3"><stop offset="0.0000" stop-color="#009923"/><stop offset="0.3579" stop-color="#009914"/><stop offset="0.7158" stop-color="#009900"/><stop offset="0.7538" stop-color="#009900"/><stop offset="0.7918" stop-color="#009900"/><stop offset="0.8020" stop-color="#009900"/><stop offset="0.8122" stop-color="#009900"/><stop offset="0.9061" stop-color="#189900"/><stop offset="1.0000" stop-color="#329900"/></linearGradient><linearGradient id="o57" gradientUnits="userSpaceOnUse" x1="1162.3" x2="1499.8"><stop offset="0.0000" stop-color="#009924"/><stop offset="0.3604" stop-color="#009914"/><stop offset="0.7209" stop-color="#009900"/><stop offset="0.7526" stop-color="#009900"/><stop offset="0.7842" stop-color="#009900"/><stop offset="0.7927" stop-color="#009900"/><stop offset="0.8012" stop-color="#009900"/><stop offset="0.9006" stop-color="#1a9900"/><stop offset="1.0000" stop-color="#379900"/></linearGradient><linearGradient id="o58" gradientUnits="userSpaceOnUse" x1="1162.3" x2="1503.2"><stop offset="0.0000" stop-color="#009925"/><stop offset="0.3630" stop-color="#009915"/><stop offset="0.7259" stop-color="#009900"/><stop offset="0.7514" stop-color="#009900"/><stop offset="0.7768" stop-color="#009900"/><stop offset="0.7836" stop-color="#009900"/><stop offset="0.7904" stop-color="#009900"/><stop offset="0.8952" stop-color="#1c9900"/><stop offset="1.0000" stop-color="#3b9900"/></linearGradient><linearGradient id="o59" gradientUnits="userSpaceOnUse" x1="1162.4" x2="1506.6"><stop offset="0.0000" stop-color="#009925"/><stop offset="0.3654" stop-color="#009915"/><stop offset="0.7309" stop-color="#009900"/><stop offset="0.7502" stop-color="#009900"/><stop offset="0.7695" stop-color="#009900"/><stop offset="0.7747" stop-color="#009900"/><stop offset="0.7799" stop-color="#009900"/><stop offset="0.8899" stop-color="#1e9900"/><stop offset="1.0000" stop-color="#3f9900"/></linearGradient><linearGradient id="o60" gradientUnits="userSpaceOnUse" x1="1162.5" x2="1510.0"><stop offset="0.0000" stop-color="#009926"/><stop offset="0.3679" stop-color="#009916"/><stop offset="0.7357" stop-color="#009900"/><stop offset="0.7491" stop-color="#009900"/><stop offset="0.7624" stop-color="#009900"/><stop offset="0.7660" stop-color="#009900"/><stop offset="0.7696" stop-color="#009900"/><stop offset="0.8848" stop-color="#209900"/><stop offset="1.0000" stop-color="#449900"/></linearGradient><linearGradient id="o61" gradientUnits="userSpaceOnUse" x1="1162.6" x2="1513.3"><stop offset="0.0000" stop-color="#009927"/><stop offset="0.3702" stop-color="#009916"/><stop offset="0.7405" stop-color="#009900"/><stop offset="0.7479" stop-color="#009900"/><stop offset="0.7554" stop-color="#009900"/><stop offset="0.7574" stop-color="#009900"/><stop offset="0.7594" stop-color="#009900"/><stop offset="0.8797" stop-color="#229900"/><stop offset="1.0000" stop-color="#499900"/></linearGradient><linearGradient id="o62" gradientUnits="userSpaceOnUse" x1="1162.7" x2="1516.7"><stop offset="0.0000" stop-color="#009928"/><stop offset="0.3726" stop-color="#009917"/><stop offset="0.7451" stop-color="#009900"/><stop offset="0.7468" stop-color="#009900"/><stop offset="0.7485" stop-color="#009900"/><stop offset="0.7490" stop-color="#009900"/><stop offset="0.7494" stop-color="#009900"/><stop offset="0.8747" stop-color="#249900"/><stop offset="1.0000" stop-color="#4d9900"/></linearGradient><linearGradient id="o63" gradientUnits="userSpaceOnUse" x1="1162.9" x2="1520.1"><stop offset="0.0000" stop-color="#009929"/><stop offset="0.3698" stop-color="#009918"/><stop offset="0.7397" stop-color="#009901"/><stop offset="0.7407" stop-color="#009901"/><stop offset="0.7418" stop-color="#019901"/><stop offset="0.7458" stop-color="#029900"/><stop offset="0.7497" stop-color="#039900"/><stop offset="0.8749" stop-color="#289900"/><stop offset="1.0000" stop-color="#529900"/></linearGradient><linearGradient id="o64" gradientUnits="userSpaceOnUse" x1="1163.0" x2="1523.5"><stop offset="0.0000" stop-color="#00992a"/><stop offset="0.3650" stop-color="#009919"/><stop offset="0.7301" stop-color="#009902"/><stop offset="0.7326" stop-color="#019902"/><stop offset="0.7352" stop-color="#019901"/><stop offset="0.7447" stop-color="#049901"/><stop offset="0.7542" stop-color="#079900"/><stop offset="0.8771" stop-color="#2d9900"/><stop offset="1.0000" stop-color="#579900"/></linearGradient><linearGradient id="o65" gradientUnits="userSpaceOnUse" x1="1163.1" x2="1526.9"><stop offset="0.0000" stop-color="#00992b"/><stop offset="0.3603" stop-color="#00991a"/><stop offset="0.7206" stop-color="#009903"/><stop offset="0.7247" stop-color="#019903"/><stop offset="0.7287" stop-color="#029902"/><stop offset="0.7436" stop-color="#079901"/><stop offset="0.7586" stop-color="#0b9900"/><stop offset="0.8793" stop-color="#319900"/><stop offset="1.0000" stop-color="#5d9900"/></linearGradient><linearGradient id="o66" gradientUnits="userSpaceOnUse" x1="1163.3" x2="1530.3"><stop offset="0.0000" stop-color="#00992b"/><stop offset="0.3557" stop-color="#00991b"/><stop offset="0.7114" stop-color="#009904"/><stop offset="0.7168" stop-color="#029904"/><stop offset="0.7223" stop-color="#039903"/><stop offset="0.7426" stop-color="#099902"/><stop offset="0.7630" stop-color="#0f9900"/><stop offset="0.8815" stop-color="#369900"/><stop offset="1.0000" stop-color="#629900"/></linearGradient><linearGradient id="o67" gradientUnits="userSpaceOnUse" x1="1163.5" x2="1533.6"><stop offset="0.0000" stop-color="#00992c"/><stop offset="0.3511" stop-color="#00991c"/><stop offset="0.7022" stop-color="#009905"/><stop offset="0.7091" stop-color="#029905"/><stop offset="0.7159" stop-color="#049904"/><stop offset="0.7416" stop-color="#0c9902"/><stop offset="0.7672" stop-color="#149900"/><stop offset="0.8836" stop-color="#3b9900"/><stop offset="1.0000" stop-color="#689900"/></linearGradient><linearGradient id="o68" gradientUnits="userSpaceOnUse" x1="1163.7" x2="1537.0"><stop offset="0.0000" stop-color="#00992d"/><stop offset="0.3466" stop-color="#00991d"/><stop offset="0.6932" stop-color="#009906"/><stop offset="0.7015" stop-color="#029906"/><stop offset="0.7097" stop-color="#059905"/><stop offset="0.7405" stop-color="#0f9903"/><stop offset="0.7713" stop-color="#189900"/><stop offset="0.8857" stop-color="#409900"/><stop offset="1.0000" stop-color="#6d9900"/></linearGradient><linearGradient id="o69" gradientUnits="userSpaceOnUse" x1="1163.8" x2="1540.4"><stop offset="0.0000" stop-color="#00992e"/><stop offset="0.3422" stop-color="#00991e"/><stop offset="0.6844" stop-color="#009907"/><stop offset="0.6940" stop-color="#039907"/><stop offset="0.7036" stop-color="#069906"/><stop offset="0.7395" stop-color="#119903"/><stop offset="0.7754" stop-color="#1d9900"/><stop offset="0.8877" stop-color="#459900"/><stop offset="1.0000" stop-color="#739900"/></linearGradient><linearGradient id="o70" gradientUnits="userSpaceOnUse" x1="1164.0" x2="1543.8"><stop offset="0.0000" stop-color="#00992f"/><stop offset="0.3379" stop-color="#00991f"/><stop offset="0.6757" stop-color="#009909"/><stop offset="0.6867" stop-color="#039908"/><stop offset="0.6976" stop-color="#079907"/><stop offset="0.7385" stop-color="#149903"/><stop offset="0.7794" stop-color="#229900"/><stop offset="0.8897" stop-color="#4b9900"/><stop offset="1.0000" stop-color="#7a9900"/></linearGradient><linearGradient id="o71" gradientUnits="userSpaceOnUse" x1="1164.2" x2="1547.1"><stop offset="0.0000" stop-color="#009930"/><stop offset="0.3336" stop-color="#009920"/><stop offset="0.6672" stop-color="#00990a"/><stop offset="0.6795" stop-color="#049909"/><stop offset="0.6917" stop-color="#089908"/><stop offset="0.7376" stop-color="#179904"/><stop offset="0.7834" stop-color="#279900"/><stop offset="0.8917" stop-color="#509900"/><stop offset="1.0000" stop-color="#809900"/></linearGradient><linearGradient id="o72" gradientUnits="userSpaceOnUse" x1="1164.4" x2="1550.5"><stop offset="0.0000" stop-color="#009931"/><stop offset="0.3294" stop-color="#009921"/><stop offset="0.6588" stop-color="#00990b"/><stop offset="0.6724" stop-color="#04990a"/><stop offset="0.6860" stop-color="#099909"/><stop offset="0.7366" stop-color="#1a9905"/><stop offset="0.7873" stop-color="#2c9900"/><stop offset="0.8937" stop-color="#569900"/><stop offset="1.0000" stop-color="#869900"/></linearGradient><linearGradient id="o73" gradientUnits="userSpaceOnUse" x1="1164.7" x2="1553.9"><stop offset="0.0000" stop-color="#009932"/><stop offset="0.3253" stop-color="#009922"/><stop offset="0.6505" stop-color="#00990c"/><stop offset="0.6654" stop-color="#05990b"/><stop offset="0.6802" stop-color="#0a990a"/><stop offset="0.7357" stop-color="#1d9905"/><stop offset="0.7911" stop-color="#319900"/><stop offset="0.8956" stop-color="#5c9900"/><stop offset="1.0000" stop-color="#8d9900"/></linearGradient><linearGradient id="o74" gradientUnits="userSpaceOnUse" x1="1164.9" x2="1557.2"><stop offset="0.0000" stop-color="#009933"/><stop offset="0.3212" stop-color="#009923"/><stop offset="0.6424" stop-color="#00990d"/><stop offset="0.6585" stop-color="#05990c"/><stop offset="0.6746" stop-color="#0b990b"/><stop offset="0.7347" stop-color="#209906"/><stop offset="0.7949" stop-color="#379900"/><stop offset="0.8974" stop-color="#629900"/><stop offset="1.0000" stop-color="#949900"/></linearGradient><linearGradient id="o75" gradientUnits="userSpaceOnUse" x1="1165.2" x2="1560.6"><stop offset="0.0000" stop-color="#009934"/><stop offset="0.3172" stop-color="#009924"/><stop offset="0.6344" stop-color="#00990f"/><stop offset="0.6517" stop-color="#06990d"/><stop offset="0.6691" stop-color="#0c990c"/><stop offset="0.7338" stop-color="#239906"/><stop offset="0.7986" stop-color="#3d9900"/><stop offset="0.8970" stop-color="#689900"/><stop offset="0.9954" stop-color="#999900"/><stop offset="0.9977" stop-color="#999800"/><stop offset="1.0000" stop-color="#999700"/></linearGradient><linearGradient id="o76" gradientUnits="userSpaceOnUse" x1="1165.4" x2="1564.0"><stop offset="0.0000" stop-color="#009935"/><stop offset="0.3132" stop-color="#009925"/><stop offset="0.6265" stop-color="#009910"/><stop offset="0.6451" stop-color="#06990e"/><stop offset="0.6636" stop-color="#0d990d"/><stop offset="0.7329" stop-color="#279907"/><stop offset="0.8023" stop-color="#439900"/><stop offset="0.8921" stop-color="#6b9900"/><stop offset="0.9820" stop-color="#999900"/><stop offset="0.9910" stop-color="#999400"/><stop offset="1.0000" stop-color="#999000"/></linearGradient><linearGradient id="o77" gradientUnits="userSpaceOnUse" x1="1165.6" x2="1567.3"><stop offset="0.0000" stop-color="#009936"/><stop offset="0.3094" stop-color="#009927"/><stop offset="0.6187" stop-color="#009911"/><stop offset="0.6385" stop-color="#079910"/><stop offset="0.6583" stop-color="#0e990e"/><stop offset="0.7321" stop-color="#2a9907"/><stop offset="0.8059" stop-color="#499900"/><stop offset="0.8873" stop-color="#6e9900"/><stop offset="0.9688" stop-color="#999900"/><stop offset="0.9844" stop-color="#999100"/><stop offset="1.0000" stop-color="#998900"/></linearGradient><linearGradient id="o78" gradientUnits="userSpaceOnUse" x1="1165.9" x2="1570.7"><stop offset="0.0000" stop-color="#009937"/><stop offset="0.3056" stop-color="#009928"/><stop offset="0.6111" stop-color="#009913"/><stop offset="0.6321" stop-color="#079911"/><stop offset="0.6530" stop-color="#0f990f"/><stop offset="0.7312" stop-color="#2d9908"/><stop offset="0.8095" stop-color="#4f9900"/><stop offset="0.8826" stop-color="#729900"/><stop offset="0.9558" stop-color="#999900"/><stop offset="0.9779" stop-color="#998d00"/><stop offset="1.0000" stop-color="#998300"/></linearGradient><linearGradient id="o79" gradientUnits="userSpaceOnUse" x1="1166.2" x2="1574.0"><stop offset="0.0000" stop-color="#009938"/><stop offset="0.3018" stop-color="#009929"/><stop offset="0.6036" stop-color="#009914"/><stop offset="0.6257" stop-color="#089912"/><stop offset="0.6478" stop-color="#109910"/><stop offset="0.7304" stop-color="#319909"/><stop offset="0.8130" stop-color="#569900"/><stop offset="0.8780" stop-color="#769900"/><stop offset="0.9430" stop-color="#999900"/><stop offset="0.9715" stop-color="#998a00"/><stop offset="1.0000" stop-color="#997d00"/></linearGradient><linearGradient id="o80" gradientUnits="userSpaceOnUse" x1="1166.5" x2="1577.3"><stop offset="0.0000" stop-color="#009939"/><stop offset="0.2981" stop-color="#00992a"/><stop offset="0.5961" stop-color="#009915"/><stop offset="0.6194" stop-color="#099913"/><stop offset="0.6427" stop-color="#119911"/><stop offset="0.7295" stop-color="#359909"/><stop offset="0.8164" stop-color="#5c9900"/><stop offset="0.8734" stop-color="#799900"/><stop offset="0.9304" stop-color="#999900"/><stop offset="0.9652" stop-color="#998700"/><stop offset="1.0000" stop-color="#997700"/></linearGradient><linearGradient id="o81" gradientUnits="userSpaceOnUse" x1="1166.8" x2="1580.7"><stop offset="0.0000" stop-color="#00993a"/><stop offset="0.2944" stop-color="#00992b"/><stop offset="0.5888" stop-color="#009917"/><stop offset="0.6132" stop-color="#099915"/><stop offset="0.6376" stop-color="#129912"/><stop offset="0.7287" stop-color="#38990a"/><stop offset="0.8198" stop-color="#639900"/><stop offset="0.8689" stop-color="#7d9900"/><stop offset="0.9179" stop-color="#999900"/><stop offset="0.9590" stop-color="#998300"/><stop offset="1.0000" stop-color="#997200"/></linearGradient><linearGradient id="o82" gradientUnits="userSpaceOnUse" x1="1167.1" x2="1584.0"><stop offset="0.0000" stop-color="#00993b"/><stop offset="0.2908" stop-color="#00992c"/><stop offset="0.5816" stop-color="#009918"/><stop offset="0.6071" stop-color="#0a9916"/><stop offset="0.6326" stop-color="#149914"/><stop offset="0.7279" stop-color="#3c990a"/><stop offset="0.8232" stop-color="#6b9900"/><stop offset="0.8644" stop-color="#819900"/><stop offset="0.9057" stop-color="#999900"/><stop offset="0.9528" stop-color="#998000"/><stop offset="1.0000" stop-color="#996d00"/></linearGradient><linearGradient id="o83" gradientUnits="userSpaceOnUse" x1="1167.4" x2="1587.4"><stop offset="0.0000" stop-color="#00993c"/><stop offset="0.2872" stop-color="#00992e"/><stop offset="0.5744" stop-color="#009919"/><stop offset="0.6010" stop-color="#0a9917"/><stop offset="0.6277" stop-color="#159915"/><stop offset="0.7271" stop-color="#40990b"/><stop offset="0.8265" stop-color="#729900"/><stop offset="0.8600" stop-color="#859900"/><stop offset="0.8936" stop-color="#999900"/><stop offset="0.9468" stop-color="#997d00"/><stop offset="1.0000" stop-color="#996800"/></linearGradient><linearGradient id="o84" gradientUnits="userSpaceOnUse" x1="1167.7" x2="1590.7"><stop offset="0.0000" stop-color="#00993e"/><stop offset="0.2837" stop-color="#00992f"/><stop offset="0.5674" stop-color="#00991b"/><stop offset="0.5951" stop-color="#0b9919"/><stop offset="0.6228" stop-color="#169916"/><stop offset="0.7263" stop-color="#44990c"/><stop offset="0.8297" stop-color="#7a9900"/><stop offset="0.8557" stop-color="#899900"/><stop offset="0.8817" stop-color="#999900"/><stop offset="0.9409" stop-color="#997a00"/><stop offset="1.0000" stop-color="#996400"/></linearGradient><linearGradient id="o85" gradientUnits="userSpaceOnUse" x1="1168.0" x2="1594.0"><stop offset="0.0000" stop-color="#00993f"/><stop offset="0.2802" stop-color="#009930"/><stop offset="0.5605" stop-color="#00991c"/><stop offset="0.5892" stop-color="#0b991a"/><stop offset="0.6180" stop-color="#179917"/><stop offset="0.7255" stop-color="#48990d"/><stop offset="0.8329" stop-color="#829900"/><stop offset="0.8515" stop-color="#8e9900"/><stop offset="0.8700" stop-color="#999900"/><stop offset="0.9350" stop-color="#997700"/><stop offset="1.0000" stop-color="#996000"/></linearGradient><linearGradient id="o86" gradientUnits="userSpaceOnUse" x1="1168.3" x2="1597.4"><stop offset="0.0000" stop-color="#009940"/><stop offset="0.2768" stop-color="#009932"/><stop offset="0.5536" stop-color="#00991e"/><stop offset="0.5834" stop-color="#0c991b"/><stop offset="0.6133" stop-color="#199919"/><stop offset="0.7247" stop-color="#4d990d"/><stop offset="0.8361" stop-color="#8b9900"/><stop offset="0.8473" stop-color="#929900"/><stop offset="0.8585" stop-color="#999900"/><stop offset="0.9292" stop-color="#997400"/><stop offset="1.0000" stop-color="#995b00"/></linearGradient><linearGradient id="o87" gradientUnits="userSpaceOnUse" x1="1168.7" x2="1600.7"><stop offset="0.0000" stop-color="#009941"/><stop offset="0.2734" stop-color="#009933"/><stop offset="0.5468" stop-color="#00991f"/><stop offset="0.5777" stop-color="#0d991d"/><stop offset="0.6086" stop-color="#1a991a"/><stop offset="0.7239" stop-color="#51990e"/><stop offset="0.8392" stop-color="#949900"/><stop offset="0.8431" stop-color="#969900"/><stop offset="0.8471" stop-color="#999900"/><stop offset="0.9235" stop-color="#997200"/><stop offset="1.0000" stop-color="#995700"/></linearGradient><linearGradient id="o88" gradientUnits="userSpaceOnUse" x1="1169.0" x2="1604.1"><stop offset="0.0000" stop-color="#009942"/><stop offset="0.2701" stop-color="#009934"/><stop offset="0.5401" stop-color="#009921"/><stop offset="0.5720" stop-color="#0d991e"/><stop offset="0.6039" stop-color="#1b991b"/><stop offset="0.7199" stop-color="#54990f"/><stop offset="0.8358" stop-color="#999901"/><stop offset="0.8390" stop-color="#999700"/><stop offset="0.8422" stop-color="#999500"/><stop offset="0.9211" stop-color="#996d00"/><stop offset="1.0000" stop-color="#995400"/></linearGradient><linearGradient id="o89" gradientUnits="userSpaceOnUse" x1="1169.4" x2="1607.4"><stop offset="0.0000" stop-color="#009943"/><stop offset="0.2668" stop-color="#009936"/><stop offset="0.5335" stop-color="#009923"/><stop offset="0.5664" stop-color="#0e9920"/><stop offset="0.5994" stop-color="#1d991d"/><stop offset="0.7120" stop-color="#559911"/><stop offset="0.8247" stop-color="#999903"/><stop offset="0.8350" stop-color="#999201"/><stop offset="0.8453" stop-color="#998c00"/><stop offset="0.9226" stop-color="#996800"/><stop offset="1.0000" stop-color="#995000"/></linearGradient><linearGradient id="o90" gradientUnits="userSpaceOnUse" x1="1169.8" x2="1610.7"><stop offset="0.0000" stop-color="#009945"/><stop offset="0.2635" stop-color="#009937"/><stop offset="0.5270" stop-color="#009924"/><stop offset="0.5609" stop-color="#0f9921"/><stop offset="0.5949" stop-color="#1e991e"/><stop offset="0.7043" stop-color="#569913"/><stop offset="0.8138" stop-color="#999905"/><stop offset="0.8310" stop-color="#998e02"/><stop offset="0.8482" stop-color="#998400"/><stop offset="0.9241" stop-color="#996300"/><stop offset="1.0000" stop-color="#994c00"/></linearGradient><linearGradient id="o91" gradientUnits="userSpaceOnUse" x1="1170.1" x2="1614.1"><stop offset="0.0000" stop-color="#009946"/><stop offset="0.2603" stop-color="#009938"/><stop offset="0.5206" stop-color="#009926"/><stop offset="0.5555" stop-color="#0f9923"/><stop offset="0.5904" stop-color="#1f991f"/><stop offset="0.6967" stop-color="#579914"/><stop offset="0.8030" stop-color="#999907"/><stop offset="0.8271" stop-color="#998a03"/><stop offset="0.8512" stop-color="#997d00"/><stop offset="0.9256" stop-color="#995e00"/><stop offset="1.0000" stop-color="#994900"/></linearGradient><linearGradient id="o92" gradientUnits="userSpaceOnUse" x1="1170.5" x2="1617.4"><stop offset="0.0000" stop-color="#009947"/><stop offset="0.2571" stop-color="#00993a"/><stop offset="0.5142" stop-color="#009927"/><stop offset="0.5501" stop-color="#109924"/><stop offset="0.5860" stop-color="#219921"/><stop offset="0.6892" stop-color="#579916"/><stop offset="0.7923" stop-color="#999909"/><stop offset="0.8232" stop-color="#998604"/><stop offset="0.8541" stop-color="#997600"/><stop offset="0.9270" stop-color="#995a00"/><stop offset="1.0000" stop-color="#994600"/></linearGradient><linearGradient id="o93" gradientUnits="userSpaceOnUse" x1="1170.9" x2="1620.7"><stop offset="0.0000" stop-color="#009948"/><stop offset="0.2540" stop-color="#00993b"/><stop offset="0.5079" stop-color="#009929"/><stop offset="0.5448" stop-color="#119926"/><stop offset="0.5816" stop-color="#229922"/><stop offset="0.6817" stop-color="#589918"/><stop offset="0.7818" stop-color="#99990b"/><stop offset="0.8193" stop-color="#998205"/><stop offset="0.8569" stop-color="#996f00"/><stop offset="0.9285" stop-color="#995500"/><stop offset="1.0000" stop-color="#994300"/></linearGradient><linearGradient id="o94" gradientUnits="userSpaceOnUse" x1="1171.3" x2="1624.1"><stop offset="0.0000" stop-color="#00994a"/><stop offset="0.2508" stop-color="#00993d"/><stop offset="0.5017" stop-color="#00992b"/><stop offset="0.5395" stop-color="#119927"/><stop offset="0.5773" stop-color="#249924"/><stop offset="0.6743" stop-color="#59991a"/><stop offset="0.7714" stop-color="#99990d"/><stop offset="0.8156" stop-color="#997e06"/><stop offset="0.8597" stop-color="#996900"/><stop offset="0.9299" stop-color="#995100"/><stop offset="1.0000" stop-color="#994000"/></linearGradient><linearGradient id="o95" gradientUnits="userSpaceOnUse" x1="1171.7" x2="1627.4"><stop offset="0.0000" stop-color="#00994b"/><stop offset="0.2478" stop-color="#00993e"/><stop offset="0.4955" stop-color="#00992d"/><stop offset="0.5343" stop-color="#129929"/><stop offset="0.5731" stop-color="#259925"/><stop offset="0.6671" stop-color="#5a991c"/><stop offset="0.7611" stop-color="#999910"/><stop offset="0.8118" stop-color="#997a07"/><stop offset="0.8625" stop-color="#996300"/><stop offset="0.9313" stop-color="#994d00"/><stop offset="1.0000" stop-color="#993d00"/></linearGradient><linearGradient id="o96" gradientUnits="userSpaceOnUse" x1="1172.1" x2="1630.7"><stop offset="0.0000" stop-color="#00994c"/><stop offset="0.2447" stop-color="#009940"/><stop offset="0.4895" stop-color="#00992e"/><stop offset="0.5292" stop-color="#13992b"/><stop offset="0.5688" stop-color="#279927"/><stop offset="0.6599" stop-color="#5b991d"/><stop offset="0.7510" stop-color="#999912"/><stop offset="0.8081" stop-color="#997607"/><stop offset="0.8652" stop-color="#995e00"/><stop offset="0.9326" stop-color="#994900"/><stop offset="1.0000" stop-color="#993a00"/></linearGradient><linearGradient id="o97" gradientUnits="userSpaceOnUse" x1="1172.6" x2="1634.1"><stop offset="0.0000" stop-color="#00994e"/><stop offset="0.2417" stop-color="#009941"/><stop offset="0.4835" stop-color="#009930"/><stop offset="0.5241" stop-color="#14992d"/><stop offset="0.5647" stop-color="#299929"/><stop offset="0.6528" stop-color="#5c991f"/><stop offset="0.7410" stop-color="#999914"/><stop offset="0.8045" stop-color="#997308"/><stop offset="0.8679" stop-color="#995900"/><stop offset="0.9340" stop-color="#994600"/><stop offset="1.0000" stop-color="#993800"/></linearGradient><linearGradient id="o98" gradientUnits="userSpaceOnUse" x1="1173.0" x2="1637.4"><stop offset="0.0000" stop-color="#00994f"/><stop offset="0.2388" stop-color="#009943"/><stop offset="0.4776" stop-color="#009932"/><stop offset="0.5191" stop-color="#14992e"/><stop offset="0.5606" stop-color="#2a992a"/><stop offset="0.6458" stop-color="#5d9921"/><stop offset="0.7311" stop-color="#999917"/><stop offset="0.8008" stop-color="#996f09"/><stop offset="0.8706" stop-color="#995400"/><stop offset="0.9353" stop-color="#994200"/><stop offset="1.0000" stop-color="#993500"/></linearGradient><linearGradient id="o99" gradientUnits="userSpaceOnUse" x1="1173.4" x2="1640.7"><stop offset="0.0000" stop-color="#009950"/><stop offset="0.2359" stop-color="#009945"/><stop offset="0.4717" stop-color="#009934"/><stop offset="0.5141" stop-color="#159930"/><stop offset="0.5565" stop-color="#2c992c"/><stop offset="0.6389" stop-color="#5e9923"/><stop offset="0.7213" stop-color="#999919"/><stop offset="0.7973" stop-color="#996c0a"/><stop offset="0.8732" stop-color="#994f00"/><stop offset="0.9366" stop-color="#993f00"/><stop offset="1.0000" stop-color="#993200"/></linearGradient><linearGradient id="o100" gradientUnits="userSpaceOnUse" x1="1173.8" x2="1644.1"><stop offset="0.0000" stop-color="#009952"/><stop offset="0.2329" stop-color="#009946"/><stop offset="0.4659" stop-color="#009936"/><stop offset="0.5092" stop-color="#169932"/><stop offset="0.5525" stop-color="#2e992e"/><stop offset="0.6321" stop-color="#5f9925"/><stop offset="0.7116" stop-color="#99991b"/><stop offset="0.7937" stop-color="#99680a"/><stop offset="0.8758" stop-color="#994b00"/><stop offset="0.9379" stop-color="#993c00"/><stop offset="1.0000" stop-color="#993000"/></linearGradient><linearGradient id="o101" gradientUnits="userSpaceOnUse" x1="1174.3" x2="1647.4"><stop offset="0.0000" stop-color="#009953"/><stop offset="0.2301" stop-color="#009948"/><stop offset="0.4601" stop-color="#009938"/><stop offset="0.5043" stop-color="#179934"/><stop offset="0.5485" stop-color="#309930"/><stop offset="0.6253" stop-color="#609927"/><stop offset="0.7021" stop-color="#99991e"/><stop offset="0.7902" stop-color="#99650b"/><stop offset="0.8784" stop-color="#994700"/><stop offset="0.9392" stop-color="#993900"/><stop offset="1.0000" stop-color="#992e00"/></linearGradient><linearGradient id="o102" gradientUnits="userSpaceOnUse" x1="1174.7" x2="1650.8"><stop offset="0.0000" stop-color="#009955"/><stop offset="0.2272" stop-color="#00994a"/><stop offset="0.4544" stop-color="#00993a"/><stop offset="0.4995" stop-color="#189936"/><stop offset="0.5445" stop-color="#329932"/><stop offset="0.6186" stop-color="#61992a"/><stop offset="0.6926" stop-color="#999920"/><stop offset="0.7868" stop-color="#99620c"/><stop offset="0.8809" stop-color="#994300"/><stop offset="0.9404" stop-color="#993600"/><stop offset="1.0000" stop-color="#992c00"/></linearGradient><linearGradient id="o103" gradientUnits="userSpaceOnUse" x1="1175.2" x2="1654.1"><stop offset="0.0000" stop-color="#009956"/><stop offset="0.2244" stop-color="#00994b"/><stop offset="0.4488" stop-color="#00993c"/><stop offset="0.4947" stop-color="#199938"/><stop offset="0.5406" stop-color="#339933"/><stop offset="0.6120" stop-color="#62992c"/><stop offset="0.6833" stop-color="#999923"/><stop offset="0.7833" stop-color="#995f0c"/><stop offset="0.8834" stop-color="#994000"/><stop offset="0.9417" stop-color="#993300"/><stop offset="1.0000" stop-color="#992900"/></linearGradient><linearGradient id="o104" gradientUnits="userSpaceOnUse" x1="1175.7" x2="1657.5"><stop offset="0.0000" stop-color="#009958"/><stop offset="0.2216" stop-color="#00994d"/><stop offset="0.4433" stop-color="#00993e"/><stop offset="0.4900" stop-color="#19993a"/><stop offset="0.5367" stop-color="#359935"/><stop offset="0.6054" stop-color="#63992e"/><stop offset="0.6741" stop-color="#999926"/><stop offset="0.7799" stop-color="#995c0d"/><stop offset="0.8858" stop-color="#993c00"/><stop offset="0.9429" stop-color="#993000"/><stop offset="1.0000" stop-color="#992700"/></linearGradient><linearGradient id="o105" gradientUnits="userSpaceOnUse" x1="1176.1" x2="1660.8"><stop offset="0.0000" stop-color="#009959"/><stop offset="0.2189" stop-color="#00994f"/><stop offset="0.4378" stop-color="#009940"/><stop offset="0.4853" stop-color="#1a993c"/><stop offset="0.5329" stop-color="#379937"/><stop offset="0.5989" stop-color="#659930"/><stop offset="0.6650" stop-color="#999928"/><stop offset="0.7766" stop-color="#99590d"/><stop offset="0.8882" stop-color="#993900"/><stop offset="0.9441" stop-color="#992e00"/><stop offset="1.0000" stop-color="#992500"/></linearGradient><linearGradient id="o106" gradientUnits="userSpaceOnUse" x1="1176.6" x2="1664.2"><stop offset="0.0000" stop-color="#00995b"/><stop offset="0.2162" stop-color="#009951"/><stop offset="0.4323" stop-color="#009942"/><stop offset="0.4807" stop-color="#1b993e"/><stop offset="0.5291" stop-color="#399939"/><stop offset="0.5925" stop-color="#669933"/><stop offset="0.6559" stop-color="#99992b"/><stop offset="0.7733" stop-color="#99560e"/><stop offset="0.8906" stop-color="#993500"/><stop offset="0.9453" stop-color="#992b00"/><stop offset="1.0000" stop-color="#992300"/></linearGradient><linearGradient id="o107" gradientUnits="userSpaceOnUse" x1="1177.1" x2="1667.5"><stop offset="0.0000" stop-color="#00995d"/><stop offset="0.2135" stop-color="#009953"/><stop offset="0.4269" stop-color="#009944"/><stop offset="0.4761" stop-color="#1c9940"/><stop offset="0.5253" stop-color="#3c993c"/><stop offset="0.5862" stop-color="#679935"/><stop offset="0.6470" stop-color="#99992e"/><stop offset="0.7700" stop-color="#99530f"/><stop offset="0.8929" stop-color="#993200"/><stop offset="0.9465" stop-color="#992900"/><stop offset="1.0000" stop-color="#992100"/></linearGradient><linearGradient id="o108" gradientUnits="userSpaceOnUse" x1="1177.6" x2="1670.9"><stop offset="0.0000" stop-color="#00995e"/><stop offset="0.2108" stop-color="#009954"/><stop offset="0.4216" stop-color="#009947"/><stop offset="0.4716" stop-color="#1d9942"/><stop offset="0.5216" stop-color="#3e993e"/><stop offset="0.5799" stop-color="#689938"/><stop offset="0.6382" stop-color="#999931"/><stop offset="0.7667" stop-color="#99510f"/><stop offset="0.8953" stop-color="#993000"/><stop offset="0.9476" stop-color="#992700"/><stop offset="1.0000" stop-color="#991f00"/></linearGradient><linearGradient id="o109" gradientUnits="userSpaceOnUse" x1="1178.1" x2="1674.2"><stop offset="0.0000" stop-color="#009960"/><stop offset="0.2081" stop-color="#009956"/><stop offset="0.4163" stop-color="#009949"/><stop offset="0.4671" stop-color="#1e9945"/><stop offset="0.5180" stop-color="#409940"/><stop offset="0.5737" stop-color="#6a993a"/><stop offset="0.6295" stop-color="#999934"/><stop offset="0.7635" stop-color="#994e10"/><stop offset="0.8976" stop-color="#992d00"/><stop offset="0.9488" stop-color="#992400"/><stop offset="1.0000" stop-color="#991e00"/></linearGradient><linearGradient id="o110" gradientUnits="userSpaceOnUse" x1="1178.5" x2="1677.5"><stop offset="0.0000" stop-color="#009962"/><stop offset="0.2055" stop-color="#009958"/><stop offset="0.4111" stop-color="#00994b"/><stop offset="0.4627" stop-color="#1f9947"/><stop offset="0.5143" stop-color="#429942"/><stop offset="0.5676" stop-color="#6b993d"/><stop offset="0.6209" stop-color="#999936"/><stop offset="0.7604" stop-color="#994b10"/><stop offset="0.8999" stop-color="#992a00"/><stop offset="0.9499" stop-color="#992200"/><stop offset="1.0000" stop-color="#991c00"/></linearGradient><linearGradient id="o111" gradientUnits="userSpaceOnUse" x1="1179.0" x2="1680.9"><stop offset="0.0000" stop-color="#009963"/><stop offset="0.2030" stop-color="#00995a"/><stop offset="0.4059" stop-color="#00994e"/><stop offset="0.4583" stop-color="#209949"/><stop offset="0.5108" stop-color="#459945"/><stop offset="0.5616" stop-color="#6c993f"/><stop offset="0.6124" stop-color="#99993a"/><stop offset="0.7573" stop-color="#994911"/><stop offset="0.9022" stop-color="#992800"/><stop offset="0.9511" stop-color="#992000"/><stop offset="1.0000" stop-color="#991a00"/></linearGradient><linearGradient id="o112" gradientUnits="userSpaceOnUse" x1="1179.5" x2="1684.2"><stop offset="0.0000" stop-color="#009965"/><stop offset="0.2004" stop-color="#00995c"/><stop offset="0.4009" stop-color="#009950"/><stop offset="0.4540" stop-color="#21994c"/><stop offset="0.5072" stop-color="#479947"/><stop offset="0.5556" stop-color="#6e9942"/><stop offset="0.6040" stop-color="#99993d"/><stop offset="0.7542" stop-color="#994611"/><stop offset="0.9044" stop-color="#992500"/><stop offset="0.9522" stop-color="#991e00"/><stop offset="1.0000" stop-color="#991900"/></linearGradient><linearGradient id="o113" gradientUnits="userSpaceOnUse" x1="1180.1" x2="1687.5"><stop offset="0.0000" stop-color="#009967"/><stop offset="0.1979" stop-color="#00995e"/><stop offset="0.3958" stop-color="#009952"/><stop offset="0.4497" stop-color="#22994e"/><stop offset="0.5037" stop-color="#499949"/><stop offset="0.5497" stop-color="#6f9945"/><stop offset="0.5956" stop-color="#999940"/><stop offset="0.7511" stop-color="#994412"/><stop offset="0.9066" stop-color="#992300"/><stop offset="0.9533" stop-color="#991c00"/><stop offset="1.0000" stop-color="#991700"/></linearGradient><linearGradient id="o114" gradientUnits="userSpaceOnUse" x1="1180.6" x2="1690.8"><stop offset="0.0000" stop-color="#009969"/><stop offset="0.1954" stop-color="#009961"/><stop offset="0.3908" stop-color="#009955"/><stop offset="0.4455" stop-color="#249951"/><stop offset="0.5002" stop-color="#4c994c"/><stop offset="0.5438" stop-color="#709948"/><stop offset="0.5874" stop-color="#999943"/><stop offset="0.7481" stop-color="#994212"/><stop offset="0.9089" stop-color="#992000"/><stop offset="0.9544" stop-color="#991a00"/><stop offset="1.0000" stop-color="#991500"/></linearGradient><linearGradient id="o115" gradientUnits="userSpaceOnUse" x1="1181.1" x2="1694.2"><stop offset="0.0000" stop-color="#00996b"/><stop offset="0.1929" stop-color="#009963"/><stop offset="0.3858" stop-color="#009958"/><stop offset="0.4413" stop-color="#259953"/><stop offset="0.4967" stop-color="#4f994f"/><stop offset="0.5380" stop-color="#72994b"/><stop offset="0.5792" stop-color="#999946"/><stop offset="0.7451" stop-color="#993f13"/><stop offset="0.9110" stop-color="#991e00"/><stop offset="0.9555" stop-color="#991900"/><stop offset="1.0000" stop-color="#991400"/></linearGradient><linearGradient id="o116" gradientUnits="userSpaceOnUse" x1="1181.7" x2="1697.5"><stop offset="0.0000" stop-color="#00996d"/><stop offset="0.1904" stop-color="#009965"/><stop offset="0.3809" stop-color="#00995a"/><stop offset="0.4371" stop-color="#269956"/><stop offset="0.4933" stop-color="#519951"/><stop offset="0.5322" stop-color="#73994e"/><stop offset="0.5712" stop-color="#99994a"/><stop offset="0.7422" stop-color="#993d13"/><stop offset="0.9132" stop-color="#991c00"/><stop offset="0.9566" stop-color="#991700"/><stop offset="1.0000" stop-color="#991200"/></linearGradient><linearGradient id="o117" gradientUnits="userSpaceOnUse" x1="1182.2" x2="1700.8"><stop offset="0.0000" stop-color="#00996f"/><stop offset="0.1880" stop-color="#009967"/><stop offset="0.3760" stop-color="#00995d"/><stop offset="0.4330" stop-color="#279959"/><stop offset="0.4899" stop-color="#549954"/><stop offset="0.5266" stop-color="#759951"/><stop offset="0.5632" stop-color="#99994d"/><stop offset="0.7392" stop-color="#993b14"/><stop offset="0.9153" stop-color="#991a00"/><stop offset="0.9577" stop-color="#991500"/><stop offset="1.0000" stop-color="#991100"/></linearGradient><linearGradient id="o118" gradientUnits="userSpaceOnUse" x1="1182.7" x2="1704.2"><stop offset="0.0000" stop-color="#009970"/><stop offset="0.1856" stop-color="#00996a"/><stop offset="0.3712" stop-color="#009960"/><stop offset="0.4289" stop-color="#28995c"/><stop offset="0.4866" stop-color="#579957"/><stop offset="0.5209" stop-color="#769954"/><stop offset="0.5553" stop-color="#999951"/><stop offset="0.7363" stop-color="#993914"/><stop offset="0.9174" stop-color="#991800"/><stop offset="0.9587" stop-color="#991400"/><stop offset="1.0000" stop-color="#991000"/></linearGradient><linearGradient id="o119" gradientUnits="userSpaceOnUse" x1="1183.3" x2="1707.5"><stop offset="0.0000" stop-color="#009973"/><stop offset="0.1832" stop-color="#00996c"/><stop offset="0.3664" stop-color="#009963"/><stop offset="0.4248" stop-color="#2a995f"/><stop offset="0.4832" stop-color="#5a995a"/><stop offset="0.5153" stop-color="#789957"/><stop offset="0.5474" stop-color="#999954"/><stop offset="0.7334" stop-color="#993715"/><stop offset="0.9195" stop-color="#991600"/><stop offset="0.9597" stop-color="#991200"/><stop offset="1.0000" stop-color="#990e00"/></linearGradient><linearGradient id="o120" gradientUnits="userSpaceOnUse" x1="1183.9" x2="1710.8"><stop offset="0.0000" stop-color="#009975"/><stop offset="0.1808" stop-color="#00996e"/><stop offset="0.3616" stop-color="#009965"/><stop offset="0.4208" stop-color="#2b9962"/><stop offset="0.4799" stop-color="#5d995d"/><stop offset="0.5098" stop-color="#7a995b"/><stop offset="0.5396" stop-color="#999958"/><stop offset="0.7306" stop-color="#993415"/><stop offset="0.9215" stop-color="#991400"/><stop offset="0.9607" stop-color="#991000"/><stop offset="1.0000" stop-color="#990d00"/></linearGradient><linearGradient id="o121" gradientUnits="userSpaceOnUse" x1="1184.5" x2="1714.2"><stop offset="0.0000" stop-color="#009977"/><stop offset="0.1784" stop-color="#009971"/><stop offset="0.3569" stop-color="#009968"/><stop offset="0.4167" stop-color="#2c9965"/><stop offset="0.4766" stop-color="#609960"/><stop offset="0.5042" stop-color="#7c995e"/><stop offset="0.5319" stop-color="#99995c"/><stop offset="0.7277" stop-color="#993216"/><stop offset="0.9235" stop-color="#991300"/><stop offset="0.9618" stop-color="#990f00"/><stop offset="1.0000" stop-color="#990c00"/></linearGradient><linearGradient id="o122" gradientUnits="userSpaceOnUse" x1="1185.0" x2="1717.5"><stop offset="0.0000" stop-color="#009979"/><stop offset="0.1761" stop-color="#009973"/><stop offset="0.3522" stop-color="#00996b"/><stop offset="0.4128" stop-color="#2e9968"/><stop offset="0.4733" stop-color="#649964"/><stop offset="0.4988" stop-color="#7d9962"/><stop offset="0.5243" stop-color="#999960"/><stop offset="0.7249" stop-color="#993016"/><stop offset="0.9255" stop-color="#991100"/><stop offset="0.9627" stop-color="#990d00"/><stop offset="1.0000" stop-color="#990a00"/></linearGradient><linearGradient id="o123" gradientUnits="userSpaceOnUse" x1="1185.6" x2="1720.9"><stop offset="0.0000" stop-color="#00997b"/><stop offset="0.1738" stop-color="#009976"/><stop offset="0.3476" stop-color="#00996f"/><stop offset="0.4088" stop-color="#2f996b"/><stop offset="0.4701" stop-color="#679967"/><stop offset="0.4934" stop-color="#7f9965"/><stop offset="0.5167" stop-color="#999963"/><stop offset="0.7221" stop-color="#992e16"/><stop offset="0.9275" stop-color="#990f00"/><stop offset="0.9637" stop-color="#990c00"/><stop offset="1.0000" stop-color="#990900"/></linearGradient><linearGradient id="o124" gradientUnits="userSpaceOnUse" x1="1186.2" x2="1724.2"><stop offset="0.0000" stop-color="#00997d"/><stop offset="0.1715" stop-color="#009979"/><stop offset="0.3430" stop-color="#009972"/><stop offset="0.4049" stop-color="#31996f"/><stop offset="0.4669" stop-color="#6b996b"/><stop offset="0.4881" stop-color="#819969"/><stop offset="0.5093" stop-color="#999968"/><stop offset="0.7193" stop-color="#992d17"/><stop offset="0.9294" stop-color="#990e00"/><stop offset="0.9647" stop-color="#990b00"/><stop offset="1.0000" stop-color="#990800"/></linearGradient><linearGradient id="o125" gradientUnits="userSpaceOnUse" x1="1186.8" x2="1727.6"><stop offset="0.0000" stop-color="#009980"/><stop offset="0.1692" stop-color="#00997b"/><stop offset="0.3385" stop-color="#009975"/><stop offset="0.4011" stop-color="#329972"/><stop offset="0.4637" stop-color="#6e996e"/><stop offset="0.4828" stop-color="#83996d"/><stop offset="0.5019" stop-color="#99996c"/><stop offset="0.7166" stop-color="#992b17"/><stop offset="0.9313" stop-color="#990c00"/><stop offset="0.9657" stop-color="#990900"/><stop offset="1.0000" stop-color="#990700"/></linearGradient><linearGradient id="o126" gradientUnits="userSpaceOnUse" x1="1187.4" x2="1730.9"><stop offset="0.0000" stop-color="#009982"/><stop offset="0.1670" stop-color="#00997e"/><stop offset="0.3339" stop-color="#009978"/><stop offset="0.3972" stop-color="#349976"/><stop offset="0.4605" stop-color="#729972"/><stop offset="0.4775" stop-color="#859971"/><stop offset="0.4945" stop-color="#999970"/><stop offset="0.7139" stop-color="#992918"/><stop offset="0.9332" stop-color="#990b00"/><stop offset="0.9666" stop-color="#990800"/><stop offset="1.0000" stop-color="#990600"/></linearGradient><linearGradient id="o127" gradientUnits="userSpaceOnUse" x1="1188.0" x2="1734.2"><stop offset="0.0000" stop-color="#009984"/><stop offset="0.1647" stop-color="#009981"/><stop offset="0.3294" stop-color="#00997c"/><stop offset="0.3934" stop-color="#359979"/><stop offset="0.4574" stop-color="#769976"/><stop offset="0.4723" stop-color="#879975"/><stop offset="0.4872" stop-color="#999974"/><stop offset="0.7112" stop-color="#992718"/><stop offset="0.9351" stop-color="#990900"/><stop offset="0.9676" stop-color="#990700"/><stop offset="1.0000" stop-color="#990400"/></linearGradient><linearGradient id="o128" gradientUnits="userSpaceOnUse" x1="1188.7" x2="1737.6"><stop offset="0.0000" stop-color="#009987"/><stop offset="0.1625" stop-color="#009984"/><stop offset="0.3250" stop-color="#00997f"/><stop offset="0.3896" stop-color="#37997d"/><stop offset="0.4542" stop-color="#7a997a"/><stop offset="0.4671" stop-color="#899979"/><stop offset="0.4800" stop-color="#999979"/><stop offset="0.7085" stop-color="#992518"/><stop offset="0.9370" stop-color="#990800"/><stop offset="0.9685" stop-color="#990500"/><stop offset="1.0000" stop-color="#990300"/></linearGradient><linearGradient id="o129" gradientUnits="userSpaceOnUse" x1="1189.3" x2="1740.9"><stop offset="0.0000" stop-color="#009989"/><stop offset="0.1603" stop-color="#009987"/><stop offset="0.3206" stop-color="#009983"/><stop offset="0.3858" stop-color="#399981"/><stop offset="0.4511" stop-color="#7e997e"/><stop offset="0.4620" stop-color="#8b997e"/><stop offset="0.4728" stop-color="#99997d"/><stop offset="0.7058" stop-color="#992319"/><stop offset="0.9388" stop-color="#990700"/><stop offset="0.9694" stop-color="#990400"/><stop offset="1.0000" stop-color="#990200"/></linearGradient><linearGradient id="o130" gradientUnits="userSpaceOnUse" x1="1189.9" x2="1744.3"><stop offset="0.0000" stop-color="#00998c"/><stop offset="0.1581" stop-color="#00998a"/><stop offset="0.3162" stop-color="#009987"/><stop offset="0.3821" stop-color="#3b9985"/><stop offset="0.4481" stop-color="#839983"/><stop offset="0.4569" stop-color="#8e9982"/><stop offset="0.4658" stop-color="#999982"/><stop offset="0.7032" stop-color="#992219"/><stop offset="0.9406" stop-color="#990500"/><stop offset="0.9703" stop-color="#990300"/><stop offset="1.0000" stop-color="#990100"/></linearGradient><linearGradient id="o131" gradientUnits="userSpaceOnUse" x1="1190.5" x2="1747.7"><stop offset="0.0000" stop-color="#00998f"/><stop offset="0.1559" stop-color="#00998d"/><stop offset="0.3118" stop-color="#00998a"/><stop offset="0.3784" stop-color="#3c9989"/><stop offset="0.4450" stop-color="#879987"/><stop offset="0.4519" stop-color="#909987"/><stop offset="0.4587" stop-color="#999987"/><stop offset="0.7005" stop-color="#992019"/><stop offset="0.9424" stop-color="#990400"/><stop offset="0.9712" stop-color="#990200"/><stop offset="1.0000" stop-color="#990000"/></linearGradient><linearGradient id="o132" gradientUnits="userSpaceOnUse" x1="1191.2" x2="1751.0"><stop offset="0.0000" stop-color="#009991"/><stop offset="0.1538" stop-color="#009990"/><stop offset="0.3075" stop-color="#00998e"/><stop offset="0.3748" stop-color="#3e998d"/><stop offset="0.4420" stop-color="#8c998c"/><stop offset="0.4469" stop-color="#92998c"/><stop offset="0.4517" stop-color="#99998c"/><stop offset="0.6979" stop-color="#991e1a"/><stop offset="0.9441" stop-color="#990300"/><stop offset="0.9648" stop-color="#990100"/><stop offset="0.9855" stop-color="#990000"/><stop offset="0.9928" stop-color="#990000"/><stop offset="1.0000" stop-color="#990000"/></linearGradient><linearGradient id="o133" gradientUnits="userSpaceOnUse" x1="1191.8" x2="1754.4"><stop offset="0.0000" stop-color="#009994"/><stop offset="0.1516" stop-color="#009993"/><stop offset="0.3032" stop-color="#009992"/><stop offset="0.3711" stop-color="#409992"/><stop offset="0.4390" stop-color="#919991"/><stop offset="0.4419" stop-color="#959991"/><stop offset="0.4448" stop-color="#999991"/><stop offset="0.6953" stop-color="#991d1a"/><stop offset="0.9459" stop-color="#990100"/><stop offset="0.9574" stop-color="#990100"/><stop offset="0.9689" stop-color="#990000"/><stop offset="0.9844" stop-color="#990000"/><stop offset="1.0000" stop-color="#990000"/></linearGradient><linearGradient id="o134" gradientUnits="userSpaceOnUse" x1="1192.5" x2="1757.7"><stop offset="0.0000" stop-color="#009997"/><stop offset="0.1495" stop-color="#009997"/><stop offset="0.2990" stop-color="#009997"/><stop offset="0.3675" stop-color="#429996"/><stop offset="0.4360" stop-color="#969996"/><stop offset="0.4370" stop-color="#989996"/><stop offset="0.4380" stop-color="#999996"/><stop offset="0.6928" stop-color="#991b1b"/><stop offset="0.9476" stop-color="#990000"/><stop offset="0.9500" stop-color="#990000"/><stop offset="0.9524" stop-color="#990000"/><stop offset="0.9762" stop-color="#990000"/><stop offset="1.0000" stop-color="#990000"/></linearGradient><linearGradient id="o135" gradientUnits="userSpaceOnUse" x1="1193.2" x2="1761.1"><stop offset="0.0000" stop-color="#009899"/><stop offset="0.1474" stop-color="#009899"/><stop offset="0.2948" stop-color="#009799"/><stop offset="0.3630" stop-color="#429799"/><stop offset="0.4312" stop-color="#969699"/><stop offset="0.4321" stop-color="#989699"/><stop offset="0.4330" stop-color="#999699"/><stop offset="0.6846" stop-color="#991b1c"/><stop offset="0.9361" stop-color="#990001"/><stop offset="0.9428" stop-color="#990000"/><stop offset="0.9494" stop-color="#990000"/><stop offset="0.9747" stop-color="#990000"/><stop offset="1.0000" stop-color="#990000"/></linearGradient><linearGradient id="o136" gradientUnits="userSpaceOnUse" x1="1193.8" x2="1764.4"><stop offset="0.0000" stop-color="#009599"/><stop offset="0.1453" stop-color="#009499"/><stop offset="0.2906" stop-color="#009399"/><stop offset="0.3576" stop-color="#409299"/><stop offset="0.4245" stop-color="#919199"/><stop offset="0.4273" stop-color="#959199"/><stop offset="0.4301" stop-color="#999199"/><stop offset="0.6751" stop-color="#991a1d"/><stop offset="0.9200" stop-color="#990002"/><stop offset="0.9356" stop-color="#990001"/><stop offset="0.9511" stop-color="#990000"/><stop offset="0.9756" stop-color="#990000"/><stop offset="1.0000" stop-color="#990000"/></linearGradient><linearGradient id="o137" gradientUnits="userSpaceOnUse" x1="1194.5" x2="1767.7"><stop offset="0.0000" stop-color="#009299"/><stop offset="0.1433" stop-color="#009199"/><stop offset="0.2865" stop-color="#008f99"/><stop offset="0.3522" stop-color="#3e8e99"/><stop offset="0.4179" stop-color="#8c8c99"/><stop offset="0.4226" stop-color="#938c99"/><stop offset="0.4273" stop-color="#998c99"/><stop offset="0.6657" stop-color="#991a1f"/><stop offset="0.9041" stop-color="#990003"/><stop offset="0.9285" stop-color="#990002"/><stop offset="0.9529" stop-color="#990000"/><stop offset="0.9764" stop-color="#990000"/><stop offset="1.0000" stop-color="#990000"/></linearGradient><linearGradient id="o138" gradientUnits="userSpaceOnUse" x1="1195.2" x2="1771.0"><stop offset="0.0000" stop-color="#009099"/><stop offset="0.1412" stop-color="#008e99"/><stop offset="0.2824" stop-color="#008b99"/><stop offset="0.3469" stop-color="#3d8a99"/><stop offset="0.4113" stop-color="#888899"/><stop offset="0.4179" stop-color="#908799"/><stop offset="0.4244" stop-color="#998799"/><stop offset="0.6563" stop-color="#991a21"/><stop offset="0.8883" stop-color="#990004"/><stop offset="0.9214" stop-color="#990002"/><stop offset="0.9546" stop-color="#990000"/><stop offset="0.9773" stop-color="#990000"/><stop offset="1.0000" stop-color="#990000"/></linearGradient><linearGradient id="o139" gradientUnits="userSpaceOnUse" x1="1195.9" x2="1774.4"><stop offset="0.0000" stop-color="#008d99"/><stop offset="0.1392" stop-color="#008b99"/><stop offset="0.2783" stop-color="#008799"/><stop offset="0.3415" stop-color="#3b8599"/><stop offset="0.4048" stop-color="#838399"/><stop offset="0.4131" stop-color="#8e8399"/><stop offset="0.4215" stop-color="#998299"/><stop offset="0.6471" stop-color="#991922"/><stop offset="0.8726" stop-color="#990006"/><stop offset="0.9144" stop-color="#990003"/><stop offset="0.9563" stop-color="#990000"/><stop offset="0.9781" stop-color="#990000"/><stop offset="1.0000" stop-color="#990000"/></linearGradient><linearGradient id="o140" gradientUnits="userSpaceOnUse" x1="1196.6" x2="1777.7"><stop offset="0.0000" stop-color="#008a99"/><stop offset="0.1371" stop-color="#008799"/><stop offset="0.2743" stop-color="#008499"/><stop offset="0.3363" stop-color="#398199"/><stop offset="0.3983" stop-color="#7f7f99"/><stop offset="0.4085" stop-color="#8c7e99"/><stop offset="0.4187" stop-color="#997d99"/><stop offset="0.6379" stop-color="#991924"/><stop offset="0.8570" stop-color="#990007"/><stop offset="0.9075" stop-color="#990003"/><stop offset="0.9580" stop-color="#990000"/><stop offset="0.9790" stop-color="#990000"/><stop offset="1.0000" stop-color="#990000"/></linearGradient><linearGradient id="o141" gradientUnits="userSpaceOnUse" x1="1197.3" x2="1781.0"><stop offset="0.0000" stop-color="#008799"/><stop offset="0.1351" stop-color="#008499"/><stop offset="0.2703" stop-color="#008099"/><stop offset="0.3310" stop-color="#377d99"/><stop offset="0.3918" stop-color="#7a7a99"/><stop offset="0.4038" stop-color="#897a99"/><stop offset="0.4159" stop-color="#997999"/><stop offset="0.6287" stop-color="#991926"/><stop offset="0.8416" stop-color="#990008"/><stop offset="0.9006" stop-color="#990004"/><stop offset="0.9596" stop-color="#990000"/><stop offset="0.9798" stop-color="#990000"/><stop offset="1.0000" stop-color="#990000"/></linearGradient><linearGradient id="o142" gradientUnits="userSpaceOnUse" x1="1197.9" x2="1784.4"><stop offset="0.0000" stop-color="#008599"/><stop offset="0.1331" stop-color="#008199"/><stop offset="0.2663" stop-color="#007c99"/><stop offset="0.3258" stop-color="#367a99"/><stop offset="0.3854" stop-color="#767699"/><stop offset="0.3992" stop-color="#877599"/><stop offset="0.4131" stop-color="#997499"/><stop offset="0.6197" stop-color="#991828"/><stop offset="0.8263" stop-color="#99000a"/><stop offset="0.8937" stop-color="#990004"/><stop offset="0.9612" stop-color="#990000"/><stop offset="0.9806" stop-color="#990000"/><stop offset="1.0000" stop-color="#990000"/></linearGradient><linearGradient id="o143" gradientUnits="userSpaceOnUse" x1="1198.6" x2="1787.8"><stop offset="0.0000" stop-color="#008299"/><stop offset="0.1312" stop-color="#007e99"/><stop offset="0.2623" stop-color="#007999"/><stop offset="0.3207" stop-color="#347699"/><stop offset="0.3791" stop-color="#727299"/><stop offset="0.3947" stop-color="#857199"/><stop offset="0.4103" stop-color="#997099"/><stop offset="0.6107" stop-color="#991829"/><stop offset="0.8111" stop-color="#99000b"/><stop offset="0.8869" stop-color="#990005"/><stop offset="0.9628" stop-color="#990000"/><stop offset="0.9814" stop-color="#990000"/><stop offset="1.0000" stop-color="#990000"/></linearGradient><linearGradient id="o144" gradientUnits="userSpaceOnUse" x1="1199.4" x2="1791.1"><stop offset="0.0000" stop-color="#007f99"/><stop offset="0.1292" stop-color="#007b99"/><stop offset="0.2584" stop-color="#007699"/><stop offset="0.3156" stop-color="#327299"/><stop offset="0.3728" stop-color="#6e6e99"/><stop offset="0.3902" stop-color="#836d99"/><stop offset="0.4075" stop-color="#996c99"/><stop offset="0.6018" stop-color="#99172b"/><stop offset="0.7961" stop-color="#99000d"/><stop offset="0.8803" stop-color="#990006"/><stop offset="0.9644" stop-color="#990000"/><stop offset="0.9822" stop-color="#990000"/><stop offset="1.0000" stop-color="#990000"/></linearGradient><linearGradient id="o145" gradientUnits="userSpaceOnUse" x1="1200.1" x2="1794.4"><stop offset="0.0000" stop-color="#007d99"/><stop offset="0.1272" stop-color="#007899"/><stop offset="0.2545" stop-color="#007299"/><stop offset="0.3105" stop-color="#316f99"/><stop offset="0.3666" stop-color="#6b6b99"/><stop offset="0.3857" stop-color="#816999"/><stop offset="0.4048" stop-color="#996899"/><stop offset="0.5930" stop-color="#99172d"/><stop offset="0.7813" stop-color="#99000e"/><stop offset="0.8736" stop-color="#990006"/><stop offset="0.9660" stop-color="#990000"/><stop offset="0.9830" stop-color="#990000"/><stop offset="1.0000" stop-color="#990000"/></linearGradient><linearGradient id="o146" gradientUnits="userSpaceOnUse" x1="1200.8" x2="1797.7"><stop offset="0.0000" stop-color="#007a99"/><stop offset="0.1253" stop-color="#007699"/><stop offset="0.2506" stop-color="#006f99"/><stop offset="0.3055" stop-color="#2f6c99"/><stop offset="0.3604" stop-color="#676799"/><stop offset="0.3812" stop-color="#7f6599"/><stop offset="0.4021" stop-color="#996499"/><stop offset="0.5843" stop-color="#99172f"/><stop offset="0.7665" stop-color="#990010"/><stop offset="0.8671" stop-color="#990007"/><stop offset="0.9676" stop-color="#990000"/><stop offset="0.9838" stop-color="#990000"/><stop offset="1.0000" stop-color="#990000"/></linearGradient><linearGradient id="o147" gradientUnits="userSpaceOnUse" x1="1201.6" x2="1801.1"><stop offset="0.0000" stop-color="#007899"/><stop offset="0.1234" stop-color="#007399"/><stop offset="0.2468" stop-color="#006c99"/><stop offset="0.3005" stop-color="#2e6899"/><stop offset="0.3542" stop-color="#646499"/><stop offset="0.3768" stop-color="#7d6299"/><stop offset="0.3994" stop-color="#996099"/><stop offset="0.5756" stop-color="#991631"/><stop offset="0.7519" stop-color="#990012"/><stop offset="0.8606" stop-color="#990007"/><stop offset="0.9692" stop-color="#990000"/><stop offset="0.9846" stop-color="#990000"/><stop offset="1.0000" stop-color="#990000"/></linearGradient><linearGradient id="o148" gradientUnits="userSpaceOnUse" x1="1202.3" x2="1804.4"><stop offset="0.0000" stop-color="#007599"/><stop offset="0.1215" stop-color="#007099"/><stop offset="0.2429" stop-color="#006999"/><stop offset="0.2955" stop-color="#2d6599"/><stop offset="0.3481" stop-color="#616199"/><stop offset="0.3724" stop-color="#7c5e99"/><stop offset="0.3966" stop-color="#995c99"/><stop offset="0.5670" stop-color="#991633"/><stop offset="0.7374" stop-color="#990013"/><stop offset="0.8540" stop-color="#990008"/><stop offset="0.9707" stop-color="#990000"/><stop offset="0.9853" stop-color="#990000"/><stop offset="1.0000" stop-color="#990000"/></linearGradient><linearGradient id="o149" gradientUnits="userSpaceOnUse" x1="1203.0" x2="1807.8"><stop offset="0.0000" stop-color="#007399"/><stop offset="0.1196" stop-color="#006d99"/><stop offset="0.2391" stop-color="#006699"/><stop offset="0.2906" stop-color="#2b6299"/><stop offset="0.3421" stop-color="#5d5d99"/><stop offset="0.3680" stop-color="#7a5b99"/><stop offset="0.3940" stop-color="#995899"/><stop offset="0.5585" stop-color="#991535"/><stop offset="0.7230" stop-color="#990015"/><stop offset="0.8476" stop-color="#990008"/><stop offset="0.9722" stop-color="#990000"/><stop offset="0.9861" stop-color="#990000"/><stop offset="1.0000" stop-color="#990000"/></linearGradient><linearGradient id="o150" gradientUnits="userSpaceOnUse" x1="1203.8" x2="1811.1"><stop offset="0.0000" stop-color="#007099"/><stop offset="0.1177" stop-color="#006b99"/><stop offset="0.2353" stop-color="#006399"/><stop offset="0.2857" stop-color="#2a5f99"/><stop offset="0.3360" stop-color="#5a5a99"/><stop offset="0.3637" stop-color="#785799"/><stop offset="0.3913" stop-color="#995499"/><stop offset="0.5500" stop-color="#991537"/><stop offset="0.7087" stop-color="#990017"/><stop offset="0.8412" stop-color="#990009"/><stop offset="0.9737" stop-color="#990000"/><stop offset="0.9868" stop-color="#990000"/><stop offset="1.0000" stop-color="#990000"/></linearGradient><linearGradient id="o151" gradientUnits="userSpaceOnUse" x1="1204.6" x2="1814.5"><stop offset="0.0000" stop-color="#006e99"/><stop offset="0.1158" stop-color="#006899"/><stop offset="0.2316" stop-color="#006099"/><stop offset="0.2808" stop-color="#295c99"/><stop offset="0.3301" stop-color="#575799"/><stop offset="0.3593" stop-color="#775499"/><stop offset="0.3886" stop-color="#995199"/><stop offset="0.5416" stop-color="#991439"/><stop offset="0.6946" stop-color="#990019"/><stop offset="0.8349" stop-color="#99000a"/><stop offset="0.9752" stop-color="#990000"/><stop offset="0.9876" stop-color="#990000"/><stop offset="1.0000" stop-color="#990000"/></linearGradient><linearGradient id="o152" gradientUnits="userSpaceOnUse" x1="1205.4" x2="1812.5"><stop offset="0.0000" stop-color="#006c99"/><stop offset="0.1149" stop-color="#006599"/><stop offset="0.2298" stop-color="#005d99"/><stop offset="0.2784" stop-color="#275999"/><stop offset="0.3269" stop-color="#545499"/><stop offset="0.3581" stop-color="#755199"/><stop offset="0.3893" stop-color="#994d99"/><stop offset="0.5379" stop-color="#99143b"/><stop offset="0.6865" stop-color="#99001b"/><stop offset="0.8358" stop-color="#99000a"/><stop offset="0.9852" stop-color="#990000"/><stop offset="0.9926" stop-color="#990000"/><stop offset="1.0000" stop-color="#990000"/></linearGradient><linearGradient id="o153" gradientUnits="userSpaceOnUse" x1="1206.1" x2="1805.3"><stop offset="0.0000" stop-color="#006999"/><stop offset="0.1150" stop-color="#006399"/><stop offset="0.2300" stop-color="#005b99"/><stop offset="0.2783" stop-color="#265699"/><stop offset="0.3266" stop-color="#525299"/><stop offset="0.3600" stop-color="#734e99"/><stop offset="0.3935" stop-color="#994a99"/><stop offset="0.5388" stop-color="#99133e"/><stop offset="0.6842" stop-color="#99001d"/><stop offset="0.8421" stop-color="#99000b"/><stop offset="1.0000" stop-color="#990000"/></linearGradient><linearGradient id="o154" gradientUnits="userSpaceOnUse" x1="1206.9" x2="1798.2"><stop offset="0.0000" stop-color="#006799"/><stop offset="0.1151" stop-color="#006099"/><stop offset="0.2302" stop-color="#005899"/><stop offset="0.2782" stop-color="#255499"/><stop offset="0.3263" stop-color="#4f4f99"/><stop offset="0.3620" stop-color="#724b99"/><stop offset="0.3977" stop-color="#994699"/><stop offset="0.5398" stop-color="#991340"/><stop offset="0.6818" stop-color="#99001f"/><stop offset="0.8409" stop-color="#99000c"/><stop offset="1.0000" stop-color="#990001"/></linearGradient><linearGradient id="o155" gradientUnits="userSpaceOnUse" x1="1207.7" x2="1791.0"><stop offset="0.0000" stop-color="#006599"/><stop offset="0.1152" stop-color="#005e99"/><stop offset="0.2304" stop-color="#005599"/><stop offset="0.2781" stop-color="#245199"/><stop offset="0.3259" stop-color="#4c4c99"/><stop offset="0.3640" stop-color="#704899"/><stop offset="0.4020" stop-color="#994399"/><stop offset="0.5407" stop-color="#991242"/><stop offset="0.6794" stop-color="#990021"/><stop offset="0.8397" stop-color="#99000e"/><stop offset="1.0000" stop-color="#990002"/></linearGradient><linearGradient id="o156" gradientUnits="userSpaceOnUse" x1="1208.6" x2="1783.9"><stop offset="0.0000" stop-color="#006299"/><stop offset="0.1153" stop-color="#005b99"/><stop offset="0.2305" stop-color="#005399"/><stop offset="0.2780" stop-color="#234e99"/><stop offset="0.3255" stop-color="#4a4a99"/><stop offset="0.3660" stop-color="#6f4599"/><stop offset="0.4064" stop-color="#994099"/><stop offset="0.5417" stop-color="#991245"/><stop offset="0.6769" stop-color="#990023"/><stop offset="0.8385" stop-color="#99000f"/><stop offset="1.0000" stop-color="#990003"/></linearGradient><linearGradient id="o157" gradientUnits="userSpaceOnUse" x1="1209.4" x2="1776.7"><stop offset="0.0000" stop-color="#006099"/><stop offset="0.1153" stop-color="#005999"/><stop offset="0.2307" stop-color="#005099"/><stop offset="0.2779" stop-color="#214c99"/><stop offset="0.3251" stop-color="#474799"/><stop offset="0.3680" stop-color="#6e4299"/><stop offset="0.4110" stop-color="#993c99"/><stop offset="0.5427" stop-color="#991147"/><stop offset="0.6743" stop-color="#990026"/><stop offset="0.8372" stop-color="#990011"/><stop offset="1.0000" stop-color="#990004"/></linearGradient><linearGradient id="o158" gradientUnits="userSpaceOnUse" x1="1210.2" x2="1769.5"><stop offset="0.0000" stop-color="#005e99"/><stop offset="0.1154" stop-color="#005799"/><stop offset="0.2308" stop-color="#004e99"/><stop offset="0.2777" stop-color="#204999"/><stop offset="0.3246" stop-color="#454599"/><stop offset="0.3701" stop-color="#6c3f99"/><stop offset="0.4156" stop-color="#993999"/><stop offset="0.5437" stop-color="#99114a"/><stop offset="0.6717" stop-color="#990028"/><stop offset="0.8359" stop-color="#990012"/><stop offset="1.0000" stop-color="#990006"/></linearGradient><linearGradient id="o159" gradientUnits="userSpaceOnUse" x1="1211.0" x2="1762.4"><stop offset="0.0000" stop-color="#005c99"/><stop offset="0.1155" stop-color="#005499"/><stop offset="0.2310" stop-color="#004b99"/><stop offset="0.2776" stop-color="#1f4799"/><stop offset="0.3242" stop-color="#424299"/><stop offset="0.3723" stop-color="#6b3d99"/><stop offset="0.4204" stop-color="#993699"/><stop offset="0.5447" stop-color="#99104c"/><stop offset="0.6690" stop-color="#99002b"/><stop offset="0.8345" stop-color="#990014"/><stop offset="1.0000" stop-color="#990007"/></linearGradient><linearGradient id="o160" gradientUnits="userSpaceOnUse" x1="1211.9" x2="1755.2"><stop offset="0.0000" stop-color="#005999"/><stop offset="0.1156" stop-color="#005299"/><stop offset="0.2312" stop-color="#004999"/><stop offset="0.2774" stop-color="#1e4599"/><stop offset="0.3237" stop-color="#404099"/><stop offset="0.3745" stop-color="#6a3a99"/><stop offset="0.4254" stop-color="#993399"/><stop offset="0.5458" stop-color="#99104f"/><stop offset="0.6662" stop-color="#99002e"/><stop offset="0.8331" stop-color="#990016"/><stop offset="1.0000" stop-color="#990008"/></linearGradient><linearGradient id="o161" gradientUnits="userSpaceOnUse" x1="1212.8" x2="1748.0"><stop offset="0.0000" stop-color="#005799"/><stop offset="0.1156" stop-color="#005099"/><stop offset="0.2313" stop-color="#004799"/><stop offset="0.2772" stop-color="#1d4299"/><stop offset="0.3232" stop-color="#3e3e99"/><stop offset="0.3768" stop-color="#683799"/><stop offset="0.4304" stop-color="#993099"/><stop offset="0.5468" stop-color="#990f51"/><stop offset="0.6633" stop-color="#990030"/><stop offset="0.8316" stop-color="#990017"/><stop offset="1.0000" stop-color="#990009"/></linearGradient><linearGradient id="o162" gradientUnits="userSpaceOnUse" x1="1213.6" x2="1740.9"><stop offset="0.0000" stop-color="#005599"/><stop offset="0.1157" stop-color="#004e99"/><stop offset="0.2314" stop-color="#004499"/><stop offset="0.2770" stop-color="#1c4099"/><stop offset="0.3226" stop-color="#3c3c99"/><stop offset="0.3791" stop-color="#673599"/><stop offset="0.4356" stop-color="#992d99"/><stop offset="0.5479" stop-color="#990f54"/><stop offset="0.6603" stop-color="#990033"/><stop offset="0.8301" stop-color="#990019"/><stop offset="1.0000" stop-color="#99000b"/></linearGradient><linearGradient id="o163" gradientUnits="userSpaceOnUse" x1="1214.5" x2="1733.7"><stop offset="0.0000" stop-color="#005399"/><stop offset="0.1158" stop-color="#004b99"/><stop offset="0.2315" stop-color="#004299"/><stop offset="0.2768" stop-color="#1b3e99"/><stop offset="0.3221" stop-color="#393999"/><stop offset="0.3815" stop-color="#663399"/><stop offset="0.4410" stop-color="#992b99"/><stop offset="0.5491" stop-color="#990e57"/><stop offset="0.6572" stop-color="#990036"/><stop offset="0.8286" stop-color="#99001b"/><stop offset="1.0000" stop-color="#99000c"/></linearGradient><linearGradient id="o164" gradientUnits="userSpaceOnUse" x1="1215.4" x2="1726.5"><stop offset="0.0000" stop-color="#005199"/><stop offset="0.1158" stop-color="#004999"/><stop offset="0.2316" stop-color="#004099"/><stop offset="0.2766" stop-color="#1a3c99"/><stop offset="0.3215" stop-color="#373799"/><stop offset="0.3840" stop-color="#653099"/><stop offset="0.4465" stop-color="#992899"/><stop offset="0.5502" stop-color="#990d5a"/><stop offset="0.6540" stop-color="#99003a"/><stop offset="0.8270" stop-color="#99001d"/><stop offset="1.0000" stop-color="#99000d"/></linearGradient><linearGradient id="o165" gradientUnits="userSpaceOnUse" x1="1216.3" x2="1719.4"><stop offset="0.0000" stop-color="#004f99"/><stop offset="0.1159" stop-color="#004799"/><stop offset="0.2317" stop-color="#003e99"/><stop offset="0.2763" stop-color="#193a99"/><stop offset="0.3208" stop-color="#353599"/><stop offset="0.3865" stop-color="#632e99"/><stop offset="0.4522" stop-color="#992599"/><stop offset="0.5514" stop-color="#990d5d"/><stop offset="0.6507" stop-color="#99003d"/><stop offset="0.8253" stop-color="#99001f"/><stop offset="1.0000" stop-color="#99000f"/></linearGradient><linearGradient id="o166" gradientUnits="userSpaceOnUse" x1="1217.2" x2="1712.2"><stop offset="0.0000" stop-color="#004d99"/><stop offset="0.1159" stop-color="#004599"/><stop offset="0.2318" stop-color="#003c99"/><stop offset="0.2760" stop-color="#193899"/><stop offset="0.3202" stop-color="#333399"/><stop offset="0.3891" stop-color="#622c99"/><stop offset="0.4580" stop-color="#992399"/><stop offset="0.5526" stop-color="#990c60"/><stop offset="0.6472" stop-color="#990041"/><stop offset="0.8236" stop-color="#990021"/><stop offset="1.0000" stop-color="#990010"/></linearGradient><linearGradient id="o167" gradientUnits="userSpaceOnUse" x1="1218.1" x2="1705.1"><stop offset="0.0000" stop-color="#004b99"/><stop offset="0.1159" stop-color="#004399"/><stop offset="0.2318" stop-color="#003a99"/><stop offset="0.2756" stop-color="#183699"/><stop offset="0.3194" stop-color="#313199"/><stop offset="0.3918" stop-color="#612999"/><stop offset="0.4641" stop-color="#992099"/><stop offset="0.5539" stop-color="#990c63"/><stop offset="0.6437" stop-color="#990044"/><stop offset="0.8218" stop-color="#990023"/><stop offset="1.0000" stop-color="#990012"/></linearGradient><linearGradient id="o168" gradientUnits="userSpaceOnUse" x1="1219.0" x2="1697.9"><stop offset="0.0000" stop-color="#004999"/><stop offset="0.1159" stop-color="#004199"/><stop offset="0.2319" stop-color="#003899"/><stop offset="0.2753" stop-color="#173499"/><stop offset="0.3187" stop-color="#303099"/><stop offset="0.3945" stop-color="#602799"/><stop offset="0.4703" stop-color="#991d99"/><stop offset="0.5552" stop-color="#990b66"/><stop offset="0.6400" stop-color="#990048"/><stop offset="0.8200" stop-color="#990026"/><stop offset="1.0000" stop-color="#990013"/></linearGradient><linearGradient id="o169" gradientUnits="userSpaceOnUse" x1="1220.0" x2="1690.7"><stop offset="0.0000" stop-color="#004799"/><stop offset="0.1160" stop-color="#003f99"/><stop offset="0.2319" stop-color="#003699"/><stop offset="0.2749" stop-color="#163299"/><stop offset="0.3179" stop-color="#2e2e99"/><stop offset="0.3973" stop-color="#5f2599"/><stop offset="0.4767" stop-color="#991b99"/><stop offset="0.5565" stop-color="#990a69"/><stop offset="0.6362" stop-color="#99004c"/><stop offset="0.8181" stop-color="#990028"/><stop offset="1.0000" stop-color="#990015"/></linearGradient><linearGradient id="o170" gradientUnits="userSpaceOnUse" x1="1221.0" x2="1683.6"><stop offset="0.0000" stop-color="#004599"/><stop offset="0.1159" stop-color="#003d99"/><stop offset="0.2319" stop-color="#003499"/><stop offset="0.2745" stop-color="#153099"/><stop offset="0.3171" stop-color="#2c2c99"/><stop offset="0.4002" stop-color="#5e2399"/><stop offset="0.4833" stop-color="#991899"/><stop offset="0.5578" stop-color="#99096d"/><stop offset="0.6323" stop-color="#990051"/><stop offset="0.8161" stop-color="#99002b"/><stop offset="1.0000" stop-color="#990017"/></linearGradient><linearGradient id="o171" gradientUnits="userSpaceOnUse" x1="1222.0" x2="1676.4"><stop offset="0.0000" stop-color="#004399"/><stop offset="0.1159" stop-color="#003b99"/><stop offset="0.2318" stop-color="#003299"/><stop offset="0.2740" stop-color="#142e99"/><stop offset="0.3161" stop-color="#2a2a99"/><stop offset="0.4032" stop-color="#5d2199"/><stop offset="0.4902" stop-color="#991699"/><stop offset="0.5592" stop-color="#990970"/><stop offset="0.6281" stop-color="#990055"/><stop offset="0.8141" stop-color="#99002d"/><stop offset="1.0000" stop-color="#990018"/></linearGradient><linearGradient id="o172" gradientUnits="userSpaceOnUse" x1="1222.9" x2="1669.2"><stop offset="0.0000" stop-color="#004199"/><stop offset="0.1159" stop-color="#003999"/><stop offset="0.2318" stop-color="#003099"/><stop offset="0.2735" stop-color="#142d99"/><stop offset="0.3152" stop-color="#292999"/><stop offset="0.4062" stop-color="#5c1f99"/><stop offset="0.4973" stop-color="#991499"/><stop offset="0.5606" stop-color="#990874"/><stop offset="0.6239" stop-color="#99005a"/><stop offset="0.8119" stop-color="#990030"/><stop offset="1.0000" stop-color="#99001a"/></linearGradient><linearGradient id="o173" gradientUnits="userSpaceOnUse" x1="1223.9" x2="1662.1"><stop offset="0.0000" stop-color="#003f99"/><stop offset="0.1159" stop-color="#003799"/><stop offset="0.2317" stop-color="#002e99"/><stop offset="0.2730" stop-color="#132b99"/><stop offset="0.3142" stop-color="#272799"/><stop offset="0.4094" stop-color="#5b1d99"/><stop offset="0.5046" stop-color="#991199"/><stop offset="0.5620" stop-color="#990777"/><stop offset="0.6194" stop-color="#990060"/><stop offset="0.8097" stop-color="#990033"/><stop offset="1.0000" stop-color="#99001c"/></linearGradient><linearGradient id="o174" gradientUnits="userSpaceOnUse" x1="1225.0" x2="1654.9"><stop offset="0.0000" stop-color="#003d99"/><stop offset="0.1158" stop-color="#003599"/><stop offset="0.2315" stop-color="#002d99"/><stop offset="0.2723" stop-color="#122999"/><stop offset="0.3131" stop-color="#252599"/><stop offset="0.4126" stop-color="#5a1b99"/><stop offset="0.5122" stop-color="#990f99"/><stop offset="0.5635" stop-color="#99067b"/><stop offset="0.6148" stop-color="#990065"/><stop offset="0.8074" stop-color="#990036"/><stop offset="1.0000" stop-color="#99001e"/></linearGradient><linearGradient id="o175" gradientUnits="userSpaceOnUse" x1="1226.1" x2="1647.7"><stop offset="0.0000" stop-color="#003b99"/><stop offset="0.1157" stop-color="#003399"/><stop offset="0.2313" stop-color="#002b99"/><stop offset="0.2716" stop-color="#112799"/><stop offset="0.3119" stop-color="#242499"/><stop offset="0.4159" stop-color="#591999"/><stop offset="0.5200" stop-color="#990d99"/><stop offset="0.5650" stop-color="#99067f"/><stop offset="0.6099" stop-color="#99006b"/><stop offset="0.8050" stop-color="#990039"/><stop offset="1.0000" stop-color="#990020"/></linearGradient><linearGradient id="o176" gradientUnits="userSpaceOnUse" x1="1227.1" x2="1640.6"><stop offset="0.0000" stop-color="#003999"/><stop offset="0.1156" stop-color="#003299"/><stop offset="0.2311" stop-color="#002999"/><stop offset="0.2709" stop-color="#112699"/><stop offset="0.3106" stop-color="#222299"/><stop offset="0.4194" stop-color="#581899"/><stop offset="0.5281" stop-color="#990b99"/><stop offset="0.5665" stop-color="#990583"/><stop offset="0.6049" stop-color="#990071"/><stop offset="0.8024" stop-color="#99003c"/><stop offset="1.0000" stop-color="#990022"/></linearGradient><linearGradient id="o177" gradientUnits="userSpaceOnUse" x1="1228.2" x2="1633.4"><stop offset="0.0000" stop-color="#003799"/><stop offset="0.1154" stop-color="#003099"/><stop offset="0.2309" stop-color="#002799"/><stop offset="0.2701" stop-color="#102499"/><stop offset="0.3093" stop-color="#212199"/><stop offset="0.4230" stop-color="#571699"/><stop offset="0.5366" stop-color="#990999"/><stop offset="0.5681" stop-color="#990487"/><stop offset="0.5996" stop-color="#990078"/><stop offset="0.7998" stop-color="#99003f"/><stop offset="1.0000" stop-color="#990024"/></linearGradient><linearGradient id="o178" gradientUnits="userSpaceOnUse" x1="1229.4" x2="1626.2"><stop offset="0.0000" stop-color="#003599"/><stop offset="0.1153" stop-color="#002e99"/><stop offset="0.2305" stop-color="#002699"/><stop offset="0.2692" stop-color="#0f2399"/><stop offset="0.3078" stop-color="#1f1f99"/><stop offset="0.4266" stop-color="#571499"/><stop offset="0.5454" stop-color="#990699"/><stop offset="0.5697" stop-color="#99038b"/><stop offset="0.5940" stop-color="#99007f"/><stop offset="0.7970" stop-color="#990043"/><stop offset="1.0000" stop-color="#990026"/></linearGradient><linearGradient id="o179" gradientUnits="userSpaceOnUse" x1="1230.5" x2="1619.1"><stop offset="0.0000" stop-color="#003399"/><stop offset="0.1151" stop-color="#002c99"/><stop offset="0.2301" stop-color="#002499"/><stop offset="0.2682" stop-color="#0f2199"/><stop offset="0.3063" stop-color="#1e1e99"/><stop offset="0.4304" stop-color="#561299"/><stop offset="0.5545" stop-color="#990499"/><stop offset="0.5714" stop-color="#99028f"/><stop offset="0.5883" stop-color="#990087"/><stop offset="0.7941" stop-color="#990047"/><stop offset="1.0000" stop-color="#990029"/></linearGradient><linearGradient id="o180" gradientUnits="userSpaceOnUse" x1="1231.6" x2="1611.9"><stop offset="0.0000" stop-color="#003299"/><stop offset="0.1149" stop-color="#002b99"/><stop offset="0.2297" stop-color="#002299"/><stop offset="0.2672" stop-color="#0e1f99"/><stop offset="0.3047" stop-color="#1c1c99"/><stop offset="0.4344" stop-color="#551199"/><stop offset="0.5640" stop-color="#990299"/><stop offset="0.5731" stop-color="#990194"/><stop offset="0.5822" stop-color="#99008f"/><stop offset="0.7911" stop-color="#99004b"/><stop offset="1.0000" stop-color="#99002b"/></linearGradient><linearGradient id="o181" gradientUnits="userSpaceOnUse" x1="1232.8" x2="1604.8"><stop offset="0.0000" stop-color="#003099"/><stop offset="0.1146" stop-color="#002999"/><stop offset="0.2293" stop-color="#002199"/><stop offset="0.2661" stop-color="#0d1e99"/><stop offset="0.3030" stop-color="#1b1b99"/><stop offset="0.4385" stop-color="#540f99"/><stop offset="0.5739" stop-color="#990099"/><stop offset="0.5749" stop-color="#990098"/><stop offset="0.5759" stop-color="#990098"/><stop offset="0.7880" stop-color="#99004f"/><stop offset="1.0000" stop-color="#99002e"/></linearGradient><linearGradient id="o182" gradientUnits="userSpaceOnUse" x1="1234.0" x2="1597.6"><stop offset="0.0000" stop-color="#002e99"/><stop offset="0.1144" stop-color="#002799"/><stop offset="0.2287" stop-color="#001f99"/><stop offset="0.2650" stop-color="#0d1d99"/><stop offset="0.3012" stop-color="#1a1a99"/><stop offset="0.4352" stop-color="#500e99"/><stop offset="0.5693" stop-color="#910099"/><stop offset="0.5768" stop-color="#950099"/><stop offset="0.5843" stop-color="#990099"/><stop offset="0.7921" stop-color="#990051"/><stop offset="1.0000" stop-color="#990030"/></linearGradient><linearGradient id="o183" gradientUnits="userSpaceOnUse" x1="1235.2" x2="1590.4"><stop offset="0.0000" stop-color="#002c99"/><stop offset="0.1141" stop-color="#002599"/><stop offset="0.2282" stop-color="#001e99"/><stop offset="0.2637" stop-color="#0c1b99"/><stop offset="0.2993" stop-color="#181899"/><stop offset="0.4308" stop-color="#4b0d99"/><stop offset="0.5623" stop-color="#880099"/><stop offset="0.5787" stop-color="#900099"/><stop offset="0.5951" stop-color="#990099"/><stop offset="0.7976" stop-color="#990054"/><stop offset="1.0000" stop-color="#990033"/></linearGradient><linearGradient id="o184" gradientUnits="userSpaceOnUse" x1="1236.3" x2="1583.3"><stop offset="0.0000" stop-color="#002a99"/><stop offset="0.1138" stop-color="#002499"/><stop offset="0.2276" stop-color="#001c99"/><stop offset="0.2624" stop-color="#0b1a99"/><stop offset="0.2973" stop-color="#171799"/><stop offset="0.4262" stop-color="#470c99"/><stop offset="0.5550" stop-color="#800099"/><stop offset="0.5808" stop-color="#8c0099"/><stop offset="0.6065" stop-color="#990099"/><stop offset="0.8032" stop-color="#990057"/><stop offset="1.0000" stop-color="#990036"/></linearGradient><linearGradient id="o185" gradientUnits="userSpaceOnUse" x1="1237.5" x2="1576.1"><stop offset="0.0000" stop-color="#002999"/><stop offset="0.1135" stop-color="#002299"/><stop offset="0.2270" stop-color="#001b99"/><stop offset="0.2610" stop-color="#0b1899"/><stop offset="0.2951" stop-color="#161699"/><stop offset="0.4213" stop-color="#430c99"/><stop offset="0.5474" stop-color="#770099"/><stop offset="0.5829" stop-color="#880099"/><stop offset="0.6184" stop-color="#990099"/><stop offset="0.8092" stop-color="#990059"/><stop offset="1.0000" stop-color="#990039"/></linearGradient><linearGradient id="o186" gradientUnits="userSpaceOnUse" x1="1238.7" x2="1568.9"><stop offset="0.0000" stop-color="#002799"/><stop offset="0.1131" stop-color="#002099"/><stop offset="0.2263" stop-color="#001999"/><stop offset="0.2596" stop-color="#0a1799"/><stop offset="0.2929" stop-color="#151599"/><stop offset="0.4161" stop-color="#3f0b99"/><stop offset="0.5393" stop-color="#700099"/><stop offset="0.5851" stop-color="#840099"/><stop offset="0.6309" stop-color="#990099"/><stop offset="0.8154" stop-color="#99005c"/><stop offset="1.0000" stop-color="#99003c"/></linearGradient><linearGradient id="o187" gradientUnits="userSpaceOnUse" x1="1239.9" x2="1561.8"><stop offset="0.0000" stop-color="#002599"/><stop offset="0.1128" stop-color="#001f99"/><stop offset="0.2256" stop-color="#001899"/><stop offset="0.2580" stop-color="#0a1699"/><stop offset="0.2905" stop-color="#131399"/><stop offset="0.4107" stop-color="#3b0a99"/><stop offset="0.5308" stop-color="#680099"/><stop offset="0.5874" stop-color="#800099"/><stop offset="0.6440" stop-color="#990099"/><stop offset="0.8220" stop-color="#99005f"/><stop offset="1.0000" stop-color="#990040"/></linearGradient><linearGradient id="o188" gradientUnits="userSpaceOnUse" x1="1241.2" x2="1554.6"><stop offset="0.0000" stop-color="#002399"/><stop offset="0.1124" stop-color="#001d99"/><stop offset="0.2248" stop-color="#001699"/><stop offset="0.2564" stop-color="#091499"/><stop offset="0.2880" stop-color="#121299"/><stop offset="0.4049" stop-color="#370a99"/><stop offset="0.5219" stop-color="#610099"/><stop offset="0.5899" stop-color="#7c0099"/><stop offset="0.6579" stop-color="#990099"/><stop offset="0.8289" stop-color="#990062"/><stop offset="1.0000" stop-color="#990043"/></linearGradient><linearGradient id="o189" gradientUnits="userSpaceOnUse" x1="1242.4" x2="1547.4"><stop offset="0.0000" stop-color="#002299"/><stop offset="0.1119" stop-color="#001c99"/><stop offset="0.2239" stop-color="#001599"/><stop offset="0.2546" stop-color="#081399"/><stop offset="0.2853" stop-color="#111199"/><stop offset="0.3988" stop-color="#330999"/><stop offset="0.5124" stop-color="#5a0099"/><stop offset="0.5924" stop-color="#780099"/><stop offset="0.6725" stop-color="#990099"/><stop offset="0.8362" stop-color="#990065"/><stop offset="1.0000" stop-color="#990047"/></linearGradient><linearGradient id="o190" gradientUnits="userSpaceOnUse" x1="1243.6" x2="1540.3"><stop offset="0.0000" stop-color="#002099"/><stop offset="0.1115" stop-color="#001a99"/><stop offset="0.2229" stop-color="#001499"/><stop offset="0.2527" stop-color="#081299"/><stop offset="0.2824" stop-color="#101099"/><stop offset="0.3924" stop-color="#300899"/><stop offset="0.5024" stop-color="#530099"/><stop offset="0.5951" stop-color="#740099"/><stop offset="0.6879" stop-color="#990099"/><stop offset="0.8439" stop-color="#990068"/><stop offset="1.0000" stop-color="#99004b"/></linearGradient><linearGradient id="o191" gradientUnits="userSpaceOnUse" x1="1244.9" x2="1533.1"><stop offset="0.0000" stop-color="#001e99"/><stop offset="0.1109" stop-color="#001999"/><stop offset="0.2218" stop-color="#001299"/><stop offset="0.2505" stop-color="#071199"/><stop offset="0.2792" stop-color="#0f0f99"/><stop offset="0.3855" stop-color="#2c0899"/><stop offset="0.4917" stop-color="#4d0099"/><stop offset="0.5979" stop-color="#710099"/><stop offset="0.7041" stop-color="#990099"/><stop offset="0.8521" stop-color="#99006b"/><stop offset="1.0000" stop-color="#99004f"/></linearGradient><linearGradient id="o192" gradientUnits="userSpaceOnUse" x1="1246.2" x2="1525.9"><stop offset="0.0000" stop-color="#001d99"/><stop offset="0.1103" stop-color="#001799"/><stop offset="0.2206" stop-color="#001199"/><stop offset="0.2483" stop-color="#070f99"/><stop offset="0.2759" stop-color="#0e0e99"/><stop offset="0.3781" stop-color="#290799"/><stop offset="0.4804" stop-color="#460099"/><stop offset="0.6009" stop-color="#6d0099"/><stop offset="0.7213" stop-color="#990099"/><stop offset="0.8607" stop-color="#99006f"/><stop offset="1.0000" stop-color="#990054"/></linearGradient><linearGradient id="o193" gradientUnits="userSpaceOnUse" x1="1247.5" x2="1518.8"><stop offset="0.0000" stop-color="#001b99"/><stop offset="0.1096" stop-color="#001699"/><stop offset="0.2193" stop-color="#001099"/><stop offset="0.2458" stop-color="#060e99"/><stop offset="0.2722" stop-color="#0d0d99"/><stop offset="0.3703" stop-color="#250799"/><stop offset="0.4683" stop-color="#400099"/><stop offset="0.6040" stop-color="#6a0099"/><stop offset="0.7396" stop-color="#990099"/><stop offset="0.8698" stop-color="#990072"/><stop offset="1.0000" stop-color="#990058"/></linearGradient><linearGradient id="o194" gradientUnits="userSpaceOnUse" x1="1248.8" x2="1511.6"><stop offset="0.0000" stop-color="#001999"/><stop offset="0.1089" stop-color="#001499"/><stop offset="0.2177" stop-color="#000e99"/><stop offset="0.2430" stop-color="#060d99"/><stop offset="0.2683" stop-color="#0b0b99"/><stop offset="0.3618" stop-color="#220699"/><stop offset="0.4554" stop-color="#3a0099"/><stop offset="0.6072" stop-color="#660099"/><stop offset="0.7590" stop-color="#990099"/><stop offset="0.8795" stop-color="#990076"/><stop offset="1.0000" stop-color="#99005d"/></linearGradient><linearGradient id="o195" gradientUnits="userSpaceOnUse" x1="1250.2" x2="1504.5"><stop offset="0.0000" stop-color="#001899"/><stop offset="0.1080" stop-color="#001399"/><stop offset="0.2161" stop-color="#000d99"/><stop offset="0.2401" stop-color="#050c99"/><stop offset="0.2640" stop-color="#0a0a99"/><stop offset="0.3528" stop-color="#1f0599"/><stop offset="0.4416" stop-color="#350099"/><stop offset="0.6107" stop-color="#630099"/><stop offset="0.7798" stop-color="#990099"/><stop offset="0.8899" stop-color="#990079"/><stop offset="1.0000" stop-color="#990063"/></linearGradient><linearGradient id="o196" gradientUnits="userSpaceOnUse" x1="1251.6" x2="1497.3"><stop offset="0.0000" stop-color="#001699"/><stop offset="0.1071" stop-color="#001199"/><stop offset="0.2142" stop-color="#000c99"/><stop offset="0.2368" stop-color="#050b99"/><stop offset="0.2594" stop-color="#090999"/><stop offset="0.3430" stop-color="#1c0599"/><stop offset="0.4267" stop-color="#2f0099"/><stop offset="0.6143" stop-color="#600099"/><stop offset="0.8019" stop-color="#990099"/><stop offset="0.9009" stop-color="#99007d"/><stop offset="1.0000" stop-color="#990068"/></linearGradient><linearGradient id="o197" gradientUnits="userSpaceOnUse" x1="1253.0" x2="1490.1"><stop offset="0.0000" stop-color="#001499"/><stop offset="0.1061" stop-color="#001099"/><stop offset="0.2121" stop-color="#000b99"/><stop offset="0.2333" stop-color="#040a99"/><stop offset="0.2544" stop-color="#080899"/><stop offset="0.3326" stop-color="#190499"/><stop offset="0.4107" stop-color="#2a0099"/><stop offset="0.6182" stop-color="#5d0099"/><stop offset="0.8256" stop-color="#990099"/><stop offset="0.9128" stop-color="#990081"/><stop offset="1.0000" stop-color="#99006e"/></linearGradient><linearGradient id="o198" gradientUnits="userSpaceOnUse" x1="1254.4" x2="1483.0"><stop offset="0.0000" stop-color="#001399"/><stop offset="0.1049" stop-color="#000e99"/><stop offset="0.2098" stop-color="#000999"/><stop offset="0.2293" stop-color="#040899"/><stop offset="0.2489" stop-color="#070799"/><stop offset="0.3212" stop-color="#160499"/><stop offset="0.3935" stop-color="#250099"/><stop offset="0.6223" stop-color="#5a0099"/><stop offset="0.8511" stop-color="#990099"/><stop offset="0.9255" stop-color="#990085"/><stop offset="1.0000" stop-color="#990074"/></linearGradient><linearGradient id="o199" gradientUnits="userSpaceOnUse" x1="1255.9" x2="1475.8"><stop offset="0.0000" stop-color="#001199"/><stop offset="0.1036" stop-color="#000d99"/><stop offset="0.2073" stop-color="#000899"/><stop offset="0.2251" stop-color="#030799"/><stop offset="0.2429" stop-color="#060699"/><stop offset="0.3089" stop-color="#130399"/><stop offset="0.3749" stop-color="#200099"/><stop offset="0.6267" stop-color="#570099"/><stop offset="0.8785" stop-color="#990099"/><stop offset="0.9393" stop-color="#990089"/><stop offset="1.0000" stop-color="#99007b"/></linearGradient><linearGradient id="o200" gradientUnits="userSpaceOnUse" x1="1257.4" x2="1468.6"><stop offset="0.0000" stop-color="#000f99"/><stop offset="0.1021" stop-color="#000b99"/><stop offset="0.2043" stop-color="#000799"/><stop offset="0.2203" stop-color="#030699"/><stop offset="0.2363" stop-color="#060699"/><stop offset="0.2954" stop-color="#100399"/><stop offset="0.3546" stop-color="#1b0099"/><stop offset="0.6314" stop-color="#540099"/><stop offset="0.9082" stop-color="#990099"/><stop offset="0.9541" stop-color="#99008d"/><stop offset="1.0000" stop-color="#990083"/></linearGradient><linearGradient id="o201" gradientUnits="userSpaceOnUse" x1="1258.9" x2="1461.5"><stop offset="0.0000" stop-color="#000e99"/><stop offset="0.1005" stop-color="#000a99"/><stop offset="0.2010" stop-color="#000699"/><stop offset="0.2150" stop-color="#020599"/><stop offset="0.2290" stop-color="#050599"/><stop offset="0.2807" stop-color="#0d0299"/><stop offset="0.3325" stop-color="#160099"/><stop offset="0.6364" stop-color="#510099"/><stop offset="0.9404" stop-color="#990099"/><stop offset="0.9702" stop-color="#990091"/><stop offset="1.0000" stop-color="#99008b"/></linearGradient><linearGradient id="o202" gradientUnits="userSpaceOnUse" x1="1260.5" x2="1454.3"><stop offset="0.0000" stop-color="#000c99"/><stop offset="0.0985" stop-color="#000999"/><stop offset="0.1971" stop-color="#000599"/><stop offset="0.2089" stop-color="#020499"/><stop offset="0.2207" stop-color="#040499"/><stop offset="0.2644" stop-color="#0b0299"/><stop offset="0.3081" stop-color="#120099"/><stop offset="0.6418" stop-color="#4e0099"/><stop offset="0.9755" stop-color="#990099"/><stop offset="0.9877" stop-color="#990096"/><stop offset="1.0000" stop-color="#990093"/></linearGradient><linearGradient id="o203" gradientUnits="userSpaceOnUse" x1="1262.1" x2="1447.1"><stop offset="0.0000" stop-color="#000b99"/><stop offset="0.0963" stop-color="#000799"/><stop offset="0.1926" stop-color="#000499"/><stop offset="0.2020" stop-color="#010399"/><stop offset="0.2115" stop-color="#030399"/><stop offset="0.2464" stop-color="#080199"/><stop offset="0.2813" stop-color="#0d0099"/><stop offset="0.6406" stop-color="#4a0099"/><stop offset="1.0000" stop-color="#960099"/></linearGradient><linearGradient id="o204" gradientUnits="userSpaceOnUse" x1="1263.8" x2="1440.0"><stop offset="0.0000" stop-color="#000999"/><stop offset="0.0937" stop-color="#000699"/><stop offset="0.1874" stop-color="#000299"/><stop offset="0.1942" stop-color="#010299"/><stop offset="0.2011" stop-color="#020299"/><stop offset="0.2263" stop-color="#050199"/><stop offset="0.2515" stop-color="#090099"/><stop offset="0.6258" stop-color="#440099"/><stop offset="1.0000" stop-color="#8d0099"/></linearGradient><linearGradient id="o205" gradientUnits="userSpaceOnUse" x1="1265.6" x2="1432.8"><stop offset="0.0000" stop-color="#000799"/><stop offset="0.0907" stop-color="#000499"/><stop offset="0.1814" stop-color="#000199"/><stop offset="0.1853" stop-color="#010199"/><stop offset="0.1892" stop-color="#010199"/><stop offset="0.2038" stop-color="#030199"/><stop offset="0.2183" stop-color="#050099"/><stop offset="0.6092" stop-color="#3e0099"/><stop offset="1.0000" stop-color="#840099"/></linearGradient><linearGradient id="o206" gradientUnits="userSpaceOnUse" x1="1267.4" x2="1425.7"><stop offset="0.0000" stop-color="#000699"/><stop offset="0.0872" stop-color="#000399"/><stop offset="0.1745" stop-color="#000099"/><stop offset="0.1752" stop-color="#000099"/><stop offset="0.1759" stop-color="#000099"/><stop offset="0.1785" stop-color="#010099"/><stop offset="0.1812" stop-color="#010099"/><stop offset="0.5906" stop-color="#380099"/><stop offset="1.0000" stop-color="#7c0099"/></linearGradient><linearGradient id="o207" gradientUnits="userSpaceOnUse" x1="1269.2" x2="1418.5"><stop offset="0.0000" stop-color="#000499"/><stop offset="0.0697" stop-color="#000299"/><stop offset="0.1393" stop-color="#000099"/><stop offset="0.1500" stop-color="#000099"/><stop offset="0.1607" stop-color="#000099"/><stop offset="0.1636" stop-color="#000099"/><stop offset="0.1665" stop-color="#000099"/><stop offset="0.5832" stop-color="#340099"/><stop offset="1.0000" stop-color="#740099"/></linearGradient><linearGradient id="o208" gradientUnits="userSpaceOnUse" x1="1271.1" x2="1411.3"><stop offset="0.0000" stop-color="#000399"/><stop offset="0.0458" stop-color="#000199"/><stop offset="0.0917" stop-color="#000099"/><stop offset="0.1174" stop-color="#000099"/><stop offset="0.1431" stop-color="#000099"/><stop offset="0.1501" stop-color="#000099"/><stop offset="0.1571" stop-color="#000099"/><stop offset="0.5785" stop-color="#310099"/><stop offset="1.0000" stop-color="#6c0099"/></linearGradient><linearGradient id="o209" gradientUnits="userSpaceOnUse" x1="1273.1" x2="1404.2"><stop offset="0.0000" stop-color="#000199"/><stop offset="0.0182" stop-color="#000099"/><stop offset="0.0365" stop-color="#000099"/><stop offset="0.0794" stop-color="#000099"/><stop offset="0.1223" stop-color="#000099"/><stop offset="0.1339" stop-color="#000099"/><stop offset="0.1455" stop-color="#000099"/><stop offset="0.5727" stop-color="#2e0099"/><stop offset="1.0000" stop-color="#640099"/></linearGradient><linearGradient id="o210" gradientUnits="userSpaceOnUse" x1="1275.3" x2="1397.0"><stop offset="0.0000" stop-color="#000099"/><stop offset="0.0487" stop-color="#000099"/><stop offset="0.0973" stop-color="#000099"/><stop offset="0.1143" stop-color="#000099"/><stop offset="0.1312" stop-color="#000099"/><stop offset="0.5656" stop-color="#2b0099"/><stop offset="1.0000" stop-color="#5d0099"/></linearGradient><linearGradient id="o211" gradientUnits="userSpaceOnUse" x1="1277.6" x2="1389.8"><stop offset="0.0000" stop-color="#000099"/><stop offset="0.0336" stop-color="#000099"/><stop offset="0.0672" stop-color="#000099"/><stop offset="0.0905" stop-color="#000099"/><stop offset="0.1137" stop-color="#000099"/><stop offset="0.5569" stop-color="#280099"/><stop offset="1.0000" stop-color="#560099"/></linearGradient><linearGradient id="o212" gradientUnits="userSpaceOnUse" x1="1280.0" x2="1382.7"><stop offset="0.0000" stop-color="#000099"/><stop offset="0.0153" stop-color="#000099"/><stop offset="0.0306" stop-color="#000099"/><stop offset="0.0613" stop-color="#000099"/><stop offset="0.0920" stop-color="#000099"/><stop offset="0.5460" stop-color="#250099"/><stop offset="1.0000" stop-color="#4f0099"/></linearGradient><linearGradient id="o213" gradientUnits="userSpaceOnUse" x1="1282.6" x2="1375.5"><stop offset="0.0000" stop-color="#000099"/><stop offset="0.0316" stop-color="#000099"/><stop offset="0.0633" stop-color="#000099"/><stop offset="0.5316" stop-color="#220099"/><stop offset="1.0000" stop-color="#490099"/></linearGradient><linearGradient id="o214" gradientUnits="userSpaceOnUse" x1="1285.6" x2="1368.3"><stop offset="0.0000" stop-color="#000099"/><stop offset="0.0120" stop-color="#000099"/><stop offset="0.0241" stop-color="#000099"/><stop offset="0.5120" stop-color="#1f0099"/><stop offset="1.0000" stop-color="#420099"/></linearGradient><linearGradient id="o215" gradientUnits="userSpaceOnUse" x1="1288.7" x2="1361.2"><stop offset="0.0000" stop-color="#020099"/><stop offset="0.5000" stop-color="#1d0099"/><stop offset="1.0000" stop-color="#3c0099"/></linearGradient><linearGradient id="o216" gradientUnits="userSpaceOnUse" x1="1292.1" x2="1354.0"><stop offset="0.0000" stop-color="#050099"/><stop offset="0.5000" stop-color="#1c0099"/><stop offset="1.0000" stop-color="#360099"/></linearGradient><linearGradient id="o217" gradientUnits="userSpaceOnUse" x1="1295.8" x2="1346.8"><stop offset="0.0000" stop-color="#080099"/><stop offset="0.5000" stop-color="#1c0099"/><stop offset="1.0000" stop-color="#310099"/></linearGradient><linearGradient id="o218" gradientUnits="userSpaceOnUse" x1="1299.6" x2="1339.7"><stop offset="0.0000" stop-color="#0c0099"/><stop offset="0.5000" stop-color="#1b0099"/><stop offset="1.0000" stop-color="#2b0099"/></linearGradient><linearGradient id="o219" gradientUnits="userSpaceOnUse" x1="1303.4" x2="1332.5"><stop offset="0.0000" stop-color="#0f0099"/><stop offset="0.5000" stop-color="#1a0099"/><stop offset="1.0000" stop-color="#260099"/></linearGradient><linearGradient id="o220" gradientUnits="userSpaceOnUse" x1="1307.1" x2="1325.4"><stop offset="0.0000" stop-color="#120099"/><stop offset="0.5000" stop-color="#190099"/><stop offset="1.0000" stop-color="#200099"/></linearGradient><linearGradient id="o221" gradientUnits="userSpaceOnUse" x1="1311.9" x2="1318.4"><stop offset="0.0000" stop-color="#160099"/><stop offset="0.5000" stop-color="#190099"/><stop offset="1.0000" stop-color="#1b0099"/></linearGradient><radialGradient id="i0" gradientUnits="userSpaceOnUse" cx="1439.0" cy="314.0" r="267.5"><stop offset="0.000" stop-color="#ffffff"/><stop offset="0.125" stop-color="#ff9c9f"/><stop offset="0.250" stop-color="#ff666b"/><stop offset="0.375" stop-color="#ff454b"/><stop offset="0.500" stop-color="#ff2f35"/><stop offset="0.625" stop-color="#ff1e25"/><stop offset="0.750" stop-color="#ff1219"/><stop offset="0.875" stop-color="#ff080f"/><stop offset="1.000" stop-color="#ff0008"/></radialGradient><radialGradient id="i1" gradientUnits="userSpaceOnUse" cx="1439.0" cy="314.0" r="233.9"><stop offset="0.000" stop-color="#ffffff"/><stop offset="0.125" stop-color="#ffa1a8"/><stop offset="0.250" stop-color="#ff6c78"/><stop offset="0.375" stop-color="#ff4a58"/><stop offset="0.500" stop-color="#ff3243"/><stop offset="0.625" stop-color="#ff2133"/><stop offset="0.750" stop-color="#ff1326"/><stop offset="0.875" stop-color="#ff091d"/><stop offset="1.000" stop-color="#ff0015"/></radialGradient><radialGradient id="i2" gradientUnits="userSpaceOnUse" cx="1439.0" cy="314.0" r="208.3"><stop offset="0.000" stop-color="#ffffff"/><stop offset="0.125" stop-color="#ffa5b1"/><stop offset="0.250" stop-color="#ff7083"/><stop offset="0.375" stop-color="#ff4e64"/><stop offset="0.500" stop-color="#ff354f"/><stop offset="0.625" stop-color="#ff233f"/><stop offset="0.750" stop-color="#ff1532"/><stop offset="0.875" stop-color="#ff0929"/><stop offset="1.000" stop-color="#ff0021"/></radialGradient><radialGradient id="i3" gradientUnits="userSpaceOnUse" cx="1439.0" cy="314.0" r="188.2"><stop offset="0.000" stop-color="#ffffff"/><stop offset="0.125" stop-color="#ffa9b8"/><stop offset="0.250" stop-color="#ff748c"/><stop offset="0.375" stop-color="#ff516f"/><stop offset="0.500" stop-color="#ff385a"/><stop offset="0.625" stop-color="#ff254a"/><stop offset="0.750" stop-color="#ff163e"/><stop offset="0.875" stop-color="#ff0a34"/><stop offset="1.000" stop-color="#ff002c"/></radialGradient><radialGradient id="i4" gradientUnits="userSpaceOnUse" cx="1439.0" cy="314.0" r="172.1"><stop offset="0.000" stop-color="#ffffff"/><stop offset="0.125" stop-color="#ffacbe"/><stop offset="0.250" stop-color="#ff7894"/><stop offset="0.375" stop-color="#ff5478"/><stop offset="0.500" stop-color="#ff3a64"/><stop offset="0.625" stop-color="#ff2654"/><stop offset="0.750" stop-color="#ff1748"/><stop offset="0.875" stop-color="#ff0a3e"/><stop offset="1.000" stop-color="#ff0036"/></radialGradient><radialGradient id="i5" gradientUnits="userSpaceOnUse" cx="1439.0" cy="314.0" r="158.9"><stop offset="0.000" stop-color="#ffffff"/><stop offset="0.125" stop-color="#ffafc3"/><stop offset="0.250" stop-color="#ff7b9c"/><stop offset="0.375" stop-color="#ff5781"/><stop offset="0.500" stop-color="#ff3c6d"/><stop offset="0.625" stop-color="#ff285e"/><stop offset="0.750" stop-color="#ff1851"/><stop offset="0.875" stop-color="#ff0b48"/><stop offset="1.000" stop-color="#ff0040"/></radialGradient><radialGradient id="i6" gradientUnits="userSpaceOnUse" cx="1439.0" cy="314.0" r="148.0"><stop offset="0.000" stop-color="#ffffff"/><stop offset="0.125" stop-color="#ffb1c7"/><stop offset="0.250" stop-color="#ff7ea3"/><stop offset="0.375" stop-color="#ff5a89"/><stop offset="0.500" stop-color="#ff3f75"/><stop offset="0.625" stop-color="#ff2a66"/><stop offset="0.750" stop-color="#ff195a"/><stop offset="0.875" stop-color="#ff0b51"/><stop offset="1.000" stop-color="#ff0049"/></radialGradient><radialGradient id="i7" gradientUnits="userSpaceOnUse" cx="1439.0" cy="314.0" r="138.8"><stop offset="0.000" stop-color="#ffffff"/><stop offset="0.125" stop-color="#ffb3cb"/><stop offset="0.250" stop-color="#ff80a9"/><stop offset="0.375" stop-color="#ff5c90"/><stop offset="0.500" stop-color="#ff407d"/><stop offset="0.625" stop-color="#ff2b6e"/><stop offset="0.750" stop-color="#ff1a63"/><stop offset="0.875" stop-color="#ff0c59"/><stop offset="1.000" stop-color="#ff0051"/></radialGradient><radialGradient id="i8" gradientUnits="userSpaceOnUse" cx="1439.0" cy="314.0" r="131.0"><stop offset="0.000" stop-color="#ffffff"/><stop offset="0.125" stop-color="#ffb5cf"/><stop offset="0.250" stop-color="#ff83ae"/><stop offset="0.375" stop-color="#ff5e97"/><stop offset="0.500" stop-color="#ff4284"/><stop offset="0.625" stop-color="#ff2c76"/><stop offset="0.750" stop-color="#ff1b6b"/><stop offset="0.875" stop-color="#ff0c61"/><stop offset="1.000" stop-color="#ff005a"/></radialGradient><radialGradient id="i9" gradientUnits="userSpaceOnUse" cx="1439.0" cy="314.0" r="124.4"><stop offset="0.000" stop-color="#ffffff"/><stop offset="0.125" stop-color="#ffb7d3"/><stop offset="0.250" stop-color="#ff85b4"/><stop offset="0.375" stop-color="#ff609d"/><stop offset="0.500" stop-color="#ff448b"/><stop offset="0.625" stop-color="#ff2e7e"/><stop offset="0.750" stop-color="#ff1c72"/><stop offset="0.875" stop-color="#ff0d69"/><stop offset="1.000" stop-color="#ff0062"/></radialGradient><radialGradient id="i10" gradientUnits="userSpaceOnUse" cx="1439.0" cy="314.0" r="118.8"><stop offset="0.000" stop-color="#ffffff"/><stop offset="0.125" stop-color="#ffb9d6"/><stop offset="0.250" stop-color="#ff87b9"/><stop offset="0.375" stop-color="#ff62a3"/><stop offset="0.500" stop-color="#ff4692"/><stop offset="0.625" stop-color="#ff2f85"/><stop offset="0.750" stop-color="#ff1c7a"/><stop offset="0.875" stop-color="#ff0d71"/><stop offset="1.000" stop-color="#ff0169"/></radialGradient><radialGradient id="i11" gradientUnits="userSpaceOnUse" cx="1439.0" cy="314.0" r="113.9"><stop offset="0.000" stop-color="#ffffff"/><stop offset="0.125" stop-color="#ffbad9"/><stop offset="0.250" stop-color="#ff89bd"/><stop offset="0.375" stop-color="#ff64a8"/><stop offset="0.500" stop-color="#ff4798"/><stop offset="0.625" stop-color="#ff308b"/><stop offset="0.750" stop-color="#ff1d81"/><stop offset="0.875" stop-color="#ff0d78"/><stop offset="1.000" stop-color="#ff0171"/></radialGradient><radialGradient id="i12" gradientUnits="userSpaceOnUse" cx="1439.0" cy="314.0" r="109.7"><stop offset="0.000" stop-color="#ffffff"/><stop offset="0.125" stop-color="#ffbcdb"/><stop offset="0.250" stop-color="#ff8bc2"/><stop offset="0.375" stop-color="#ff66ae"/><stop offset="0.500" stop-color="#ff499e"/><stop offset="0.625" stop-color="#ff3192"/><stop offset="0.750" stop-color="#ff1e88"/><stop offset="0.875" stop-color="#ff0e7f"/><stop offset="1.000" stop-color="#ff0178"/></radialGradient><radialGradient id="i13" gradientUnits="userSpaceOnUse" cx="1439.0" cy="314.0" r="106.1"><stop offset="0.000" stop-color="#ffffff"/><stop offset="0.125" stop-color="#ffbdde"/><stop offset="0.250" stop-color="#ff8dc6"/><stop offset="0.375" stop-color="#ff67b3"/><stop offset="0.500" stop-color="#ff4aa4"/><stop offset="0.625" stop-color="#ff3298"/><stop offset="0.750" stop-color="#ff1f8f"/><stop offset="0.875" stop-color="#ff0e86"/><stop offset="1.000" stop-color="#ff0180"/></radialGradient><radialGradient id="i14" gradientUnits="userSpaceOnUse" cx="1439.0" cy="314.0" r="102.9"><stop offset="0.000" stop-color="#ffffff"/><stop offset="0.125" stop-color="#ffbee0"/><stop offset="0.250" stop-color="#ff8eca"/><stop offset="0.375" stop-color="#ff69b8"/><stop offset="0.500" stop-color="#ff4caa"/><stop offset="0.625" stop-color="#ff339f"/><stop offset="0.750" stop-color="#ff1f95"/><stop offset="0.875" stop-color="#ff0e8d"/><stop offset="1.000" stop-color="#ff0187"/></radialGradient><radialGradient id="i15" gradientUnits="userSpaceOnUse" cx="1439.0" cy="314.0" r="100.3"><stop offset="0.000" stop-color="#ffffff"/><stop offset="0.125" stop-color="#ffc0e3"/><stop offset="0.250" stop-color="#ff90ce"/><stop offset="0.375" stop-color="#ff6bbd"/><stop offset="0.500" stop-color="#ff4db0"/><stop offset="0.625" stop-color="#ff35a5"/><stop offset="0.750" stop-color="#ff209c"/><stop offset="0.875" stop-color="#ff0f94"/><stop offset="1.000" stop-color="#ff018e"/></radialGradient><radialGradient id="i16" gradientUnits="userSpaceOnUse" cx="1439.0" cy="314.0" r="98.0"><stop offset="0.000" stop-color="#ffffff"/><stop offset="0.125" stop-color="#ffc1e5"/><stop offset="0.250" stop-color="#ff92d1"/><stop offset="0.375" stop-color="#ff6cc2"/><stop offset="0.500" stop-color="#ff4eb5"/><stop offset="0.625" stop-color="#ff36ab"/><stop offset="0.750" stop-color="#ff21a3"/><stop offset="0.875" stop-color="#ff0f9b"/><stop offset="1.000" stop-color="#ff0195"/></radialGradient><radialGradient id="i17" gradientUnits="userSpaceOnUse" cx="1439.0" cy="314.0" r="96.1"><stop offset="0.000" stop-color="#ffffff"/><stop offset="0.125" stop-color="#ffc2e7"/><stop offset="0.250" stop-color="#ff93d5"/><stop offset="0.375" stop-color="#ff6ec7"/><stop offset="0.500" stop-color="#ff50bb"/><stop offset="0.625" stop-color="#ff37b1"/><stop offset="0.750" stop-color="#ff22a9"/><stop offset="0.875" stop-color="#ff10a2"/><stop offset="1.000" stop-color="#ff019c"/></radialGradient><radialGradient id="i18" gradientUnits="userSpaceOnUse" cx="1439.0" cy="314.0" r="94.5"><stop offset="0.000" stop-color="#ffffff"/><stop offset="0.125" stop-color="#ffc3ea"/><stop offset="0.250" stop-color="#ff95d9"/><stop offset="0.375" stop-color="#ff6fcb"/><stop offset="0.500" stop-color="#ff51c1"/><stop offset="0.625" stop-color="#ff38b7"/><stop offset="0.750" stop-color="#ff22b0"/><stop offset="0.875" stop-color="#ff10a9"/><stop offset="1.000" stop-color="#ff01a4"/></radialGradient><radialGradient id="i19" gradientUnits="userSpaceOnUse" cx="1439.0" cy="314.0" r="93.2"><stop offset="0.000" stop-color="#ffffff"/><stop offset="0.125" stop-color="#ffc4ec"/><stop offset="0.250" stop-color="#ff96dc"/><stop offset="0.375" stop-color="#ff71d0"/><stop offset="0.500" stop-color="#ff52c6"/><stop offset="0.625" stop-color="#ff39be"/><stop offset="0.750" stop-color="#ff23b6"/><stop offset="0.875" stop-color="#ff10b0"/><stop offset="1.000" stop-color="#ff01ab"/></radialGradient><radialGradient id="i20" gradientUnits="userSpaceOnUse" cx="1439.0" cy="314.0" r="92.2"><stop offset="0.000" stop-color="#ffffff"/><stop offset="0.125" stop-color="#ffc5ee"/><stop offset="0.250" stop-color="#ff98e0"/><stop offset="0.375" stop-color="#ff73d5"/><stop offset="0.500" stop-color="#ff54cc"/><stop offset="0.625" stop-color="#ff3ac4"/><stop offset="0.750" stop-color="#ff24bd"/><stop offset="0.875" stop-color="#ff11b8"/><stop offset="1.000" stop-color="#ff01b3"/></radialGradient><radialGradient id="i21" gradientUnits="userSpaceOnUse" cx="1439.0" cy="314.0" r="91.5"><stop offset="0.000" stop-color="#ffffff"/><stop offset="0.125" stop-color="#ffc7f0"/><stop offset="0.250" stop-color="#ff99e4"/><stop offset="0.375" stop-color="#ff74da"/><stop offset="0.500" stop-color="#ff55d1"/><stop offset="0.625" stop-color="#ff3bca"/><stop offset="0.750" stop-color="#ff25c4"/><stop offset="0.875" stop-color="#ff11bf"/><stop offset="1.000" stop-color="#ff01bb"/></radialGradient><radialGradient id="i22" gradientUnits="userSpaceOnUse" cx="1439.0" cy="314.0" r="91.0"><stop offset="0.000" stop-color="#ffffff"/><stop offset="0.125" stop-color="#ffc8f2"/><stop offset="0.250" stop-color="#ff9be7"/><stop offset="0.375" stop-color="#ff76df"/><stop offset="0.500" stop-color="#ff57d7"/><stop offset="0.625" stop-color="#ff3cd1"/><stop offset="0.750" stop-color="#ff25cc"/><stop offset="0.875" stop-color="#ff11c7"/><stop offset="1.000" stop-color="#ff01c3"/></radialGradient><radialGradient id="i23" gradientUnits="userSpaceOnUse" cx="1439.0" cy="314.0" r="90.8"><stop offset="0.000" stop-color="#ffffff"/><stop offset="0.125" stop-color="#ffc9f4"/><stop offset="0.250" stop-color="#ff9ceb"/><stop offset="0.375" stop-color="#ff77e4"/><stop offset="0.500" stop-color="#ff58dd"/><stop offset="0.625" stop-color="#ff3dd8"/><stop offset="0.750" stop-color="#ff26d3"/><stop offset="0.875" stop-color="#ff12cf"/><stop offset="1.000" stop-color="#ff01cc"/></radialGradient><radialGradient id="i24" gradientUnits="userSpaceOnUse" cx="1439.0" cy="314.0" r="90.8"><stop offset="0.000" stop-color="#ffffff"/><stop offset="0.125" stop-color="#ffcaf6"/><stop offset="0.250" stop-color="#ff9eef"/><stop offset="0.375" stop-color="#ff79e9"/><stop offset="0.500" stop-color="#ff5ae3"/><stop offset="0.625" stop-color="#ff3fdf"/><stop offset="0.750" stop-color="#ff27db"/><stop offset="0.875" stop-color="#ff12d7"/><stop offset="1.000" stop-color="#ff01d5"/></radialGradient><radialGradient id="i25" gradientUnits="userSpaceOnUse" cx="1439.0" cy="314.0" r="91.1"><stop offset="0.000" stop-color="#ffffff"/><stop offset="0.125" stop-color="#ffcbf8"/><stop offset="0.250" stop-color="#ffa0f3"/><stop offset="0.375" stop-color="#ff7bee"/><stop offset="0.500" stop-color="#ff5bea"/><stop offset="0.625" stop-color="#ff40e6"/><stop offset="0.750" stop-color="#ff28e3"/><stop offset="0.875" stop-color="#ff13e0"/><stop offset="1.000" stop-color="#ff01de"/></radialGradient><radialGradient id="i26" gradientUnits="userSpaceOnUse" cx="1439.0" cy="314.0" r="91.6"><stop offset="0.000" stop-color="#ffffff"/><stop offset="0.125" stop-color="#ffccfa"/><stop offset="0.250" stop-color="#ffa1f7"/><stop offset="0.375" stop-color="#ff7df3"/><stop offset="0.500" stop-color="#ff5df0"/><stop offset="0.625" stop-color="#ff41ee"/><stop offset="0.750" stop-color="#ff29ec"/><stop offset="0.875" stop-color="#ff13ea"/><stop offset="1.000" stop-color="#ff01e8"/></radialGradient><radialGradient id="i27" gradientUnits="userSpaceOnUse" cx="1439.0" cy="314.0" r="92.4"><stop offset="0.000" stop-color="#ffffff"/><stop offset="0.125" stop-color="#ffcdfd"/><stop offset="0.250" stop-color="#ffa3fb"/><stop offset="0.375" stop-color="#ff7ef9"/><stop offset="0.500" stop-color="#ff5ff7"/><stop offset="0.625" stop-color="#ff43f6"/><stop offset="0.750" stop-color="#ff2af5"/><stop offset="0.875" stop-color="#ff14f4"/><stop offset="1.000" stop-color="#ff01f3"/></radialGradient><radialGradient id="i28" gradientUnits="userSpaceOnUse" cx="1439.0" cy="314.0" r="93.5"><stop offset="0.000" stop-color="#ffffff"/><stop offset="0.125" stop-color="#ffceff"/><stop offset="0.250" stop-color="#ffa5ff"/><stop offset="0.375" stop-color="#ff80ff"/><stop offset="0.500" stop-color="#ff60ff"/><stop offset="0.625" stop-color="#ff44ff"/><stop offset="0.750" stop-color="#ff2bff"/><stop offset="0.875" stop-color="#ff14ff"/><stop offset="1.000" stop-color="#ff01ff"/></radialGradient><radialGradient id="i29" gradientUnits="userSpaceOnUse" cx="1439.0" cy="314.0" r="94.8"><stop offset="0.000" stop-color="#ffffff"/><stop offset="0.125" stop-color="#fdceff"/><stop offset="0.250" stop-color="#fba4ff"/><stop offset="0.375" stop-color="#f97fff"/><stop offset="0.500" stop-color="#f75fff"/><stop offset="0.625" stop-color="#f643ff"/><stop offset="0.750" stop-color="#f52aff"/><stop offset="0.875" stop-color="#f414ff"/><stop offset="1.000" stop-color="#f301ff"/></radialGradient><radialGradient id="i30" gradientUnits="userSpaceOnUse" cx="1439.0" cy="314.0" r="96.5"><stop offset="0.000" stop-color="#ffffff"/><stop offset="0.125" stop-color="#facdff"/><stop offset="0.250" stop-color="#f6a3ff"/><stop offset="0.375" stop-color="#f37eff"/><stop offset="0.500" stop-color="#f05eff"/><stop offset="0.625" stop-color="#ed42ff"/><stop offset="0.750" stop-color="#ea2aff"/><stop offset="0.875" stop-color="#e814ff"/><stop offset="1.000" stop-color="#e701ff"/></radialGradient><radialGradient id="i31" gradientUnits="userSpaceOnUse" cx="1439.0" cy="314.0" r="98.5"><stop offset="0.000" stop-color="#ffffff"/><stop offset="0.125" stop-color="#f8ccff"/><stop offset="0.250" stop-color="#f1a2ff"/><stop offset="0.375" stop-color="#ec7dff"/><stop offset="0.500" stop-color="#e85dff"/><stop offset="0.625" stop-color="#e442ff"/><stop offset="0.750" stop-color="#e029ff"/><stop offset="0.875" stop-color="#dd13ff"/><stop offset="1.000" stop-color="#da01ff"/></radialGradient><radialGradient id="i32" gradientUnits="userSpaceOnUse" cx="1439.0" cy="314.0" r="100.8"><stop offset="0.000" stop-color="#ffffff"/><stop offset="0.125" stop-color="#f5ccff"/><stop offset="0.250" stop-color="#eda1ff"/><stop offset="0.375" stop-color="#e67cff"/><stop offset="0.500" stop-color="#e05cff"/><stop offset="0.625" stop-color="#da41ff"/><stop offset="0.750" stop-color="#d629ff"/><stop offset="0.875" stop-color="#d113ff"/><stop offset="1.000" stop-color="#ce01ff"/></radialGradient><radialGradient id="i33" gradientUnits="userSpaceOnUse" cx="1439.0" cy="314.0" r="103.6"><stop offset="0.000" stop-color="#ffffff"/><stop offset="0.125" stop-color="#f2cbff"/><stop offset="0.250" stop-color="#e89fff"/><stop offset="0.375" stop-color="#df7bff"/><stop offset="0.500" stop-color="#d75bff"/><stop offset="0.625" stop-color="#d140ff"/><stop offset="0.750" stop-color="#cb28ff"/><stop offset="0.875" stop-color="#c613ff"/><stop offset="1.000" stop-color="#c101ff"/></radialGradient><radialGradient id="i34" gradientUnits="userSpaceOnUse" cx="1439.0" cy="314.0" r="106.8"><stop offset="0.000" stop-color="#ffffff"/><stop offset="0.125" stop-color="#efcaff"/><stop offset="0.250" stop-color="#e39eff"/><stop offset="0.375" stop-color="#d879ff"/><stop offset="0.500" stop-color="#cf5aff"/><stop offset="0.625" stop-color="#c73fff"/><stop offset="0.750" stop-color="#c027ff"/><stop offset="0.875" stop-color="#ba12ff"/><stop offset="1.000" stop-color="#b401ff"/></radialGradient><radialGradient id="i35" gradientUnits="userSpaceOnUse" cx="1439.0" cy="314.0" r="110.5"><stop offset="0.000" stop-color="#ffffff"/><stop offset="0.125" stop-color="#ecc9ff"/><stop offset="0.250" stop-color="#dd9dff"/><stop offset="0.375" stop-color="#d078ff"/><stop offset="0.500" stop-color="#c659ff"/><stop offset="0.625" stop-color="#bc3eff"/><stop offset="0.750" stop-color="#b427ff"/><stop offset="0.875" stop-color="#ad12ff"/><stop offset="1.000" stop-color="#a701ff"/></radialGradient><radialGradient id="i36" gradientUnits="userSpaceOnUse" cx="1439.0" cy="314.0" r="114.9"><stop offset="0.000" stop-color="#ffffff"/><stop offset="0.125" stop-color="#e9c8ff"/><stop offset="0.250" stop-color="#d79cff"/><stop offset="0.375" stop-color="#c977ff"/><stop offset="0.500" stop-color="#bc58ff"/><stop offset="0.625" stop-color="#b23dff"/><stop offset="0.750" stop-color="#a926ff"/><stop offset="0.875" stop-color="#a112ff"/><stop offset="1.000" stop-color="#9a01ff"/></radialGradient><radialGradient id="i37" gradientUnits="userSpaceOnUse" cx="1439.0" cy="314.0" r="119.9"><stop offset="0.000" stop-color="#ffffff"/><stop offset="0.125" stop-color="#e6c7ff"/><stop offset="0.250" stop-color="#d19aff"/><stop offset="0.375" stop-color="#c175ff"/><stop offset="0.500" stop-color="#b256ff"/><stop offset="0.625" stop-color="#a63cff"/><stop offset="0.750" stop-color="#9c25ff"/><stop offset="0.875" stop-color="#9311ff"/><stop offset="1.000" stop-color="#8c01ff"/></radialGradient><radialGradient id="i38" gradientUnits="userSpaceOnUse" cx="1439.0" cy="314.0" r="125.8"><stop offset="0.000" stop-color="#ffffff"/><stop offset="0.125" stop-color="#e2c6ff"/><stop offset="0.250" stop-color="#cb99ff"/><stop offset="0.375" stop-color="#b874ff"/><stop offset="0.500" stop-color="#a855ff"/><stop offset="0.625" stop-color="#9b3bff"/><stop offset="0.750" stop-color="#8f24ff"/><stop offset="0.875" stop-color="#8511ff"/><stop offset="1.000" stop-color="#7d01ff"/></radialGradient><radialGradient id="i39" gradientUnits="userSpaceOnUse" cx="1439.0" cy="314.0" r="132.6"><stop offset="0.000" stop-color="#ffffff"/><stop offset="0.125" stop-color="#dec5ff"/><stop offset="0.250" stop-color="#c497ff"/><stop offset="0.375" stop-color="#ae72ff"/><stop offset="0.500" stop-color="#9d53ff"/><stop offset="0.625" stop-color="#8e3aff"/><stop offset="0.750" stop-color="#8124ff"/><stop offset="0.875" stop-color="#7711ff"/><stop offset="1.000" stop-color="#6d01ff"/></radialGradient><radialGradient id="i40" gradientUnits="userSpaceOnUse" cx="1439.0" cy="314.0" r="140.7"><stop offset="0.000" stop-color="#ffffff"/><stop offset="0.125" stop-color="#d9c4ff"/><stop offset="0.250" stop-color="#bc96ff"/><stop offset="0.375" stop-color="#a470ff"/><stop offset="0.500" stop-color="#9152ff"/><stop offset="0.625" stop-color="#8038ff"/><stop offset="0.750" stop-color="#7323ff"/><stop offset="0.875" stop-color="#6710ff"/><stop offset="1.000" stop-color="#5d01ff"/></radialGradient><radialGradient id="i41" gradientUnits="userSpaceOnUse" cx="1439.0" cy="314.0" r="150.2"><stop offset="0.000" stop-color="#ffffff"/><stop offset="0.125" stop-color="#d4c2ff"/><stop offset="0.250" stop-color="#b394ff"/><stop offset="0.375" stop-color="#996eff"/><stop offset="0.500" stop-color="#8450ff"/><stop offset="0.625" stop-color="#7237ff"/><stop offset="0.750" stop-color="#6322ff"/><stop offset="0.875" stop-color="#5610ff"/><stop offset="1.000" stop-color="#4b01ff"/></radialGradient><radialGradient id="i42" gradientUnits="userSpaceOnUse" cx="1439.0" cy="314.0" r="161.6"><stop offset="0.000" stop-color="#ffffff"/><stop offset="0.125" stop-color="#cec1ff"/><stop offset="0.250" stop-color="#aa91ff"/><stop offset="0.375" stop-color="#8d6cff"/><stop offset="0.500" stop-color="#754eff"/><stop offset="0.625" stop-color="#6236ff"/><stop offset="0.750" stop-color="#5221ff"/><stop offset="0.875" stop-color="#440fff"/><stop offset="1.000" stop-color="#3901ff"/></radialGradient><radialGradient id="i43" gradientUnits="userSpaceOnUse" cx="1439.0" cy="314.0" r="175.3"><stop offset="0.000" stop-color="#ffffff"/><stop offset="0.125" stop-color="#c8bfff"/><stop offset="0.250" stop-color="#9f8fff"/><stop offset="0.375" stop-color="#7f6aff"/><stop offset="0.500" stop-color="#654cff"/><stop offset="0.625" stop-color="#5034ff"/><stop offset="0.750" stop-color="#3f20ff"/><stop offset="0.875" stop-color="#300fff"/><stop offset="1.000" stop-color="#2401ff"/></radialGradient><radialGradient id="i44" gradientUnits="userSpaceOnUse" cx="1439.0" cy="314.0" r="192.2"><stop offset="0.000" stop-color="#ffffff"/><stop offset="0.125" stop-color="#c0bdff"/><stop offset="0.250" stop-color="#928cff"/><stop offset="0.375" stop-color="#6f67ff"/><stop offset="0.500" stop-color="#534aff"/><stop offset="0.625" stop-color="#3d32ff"/><stop offset="0.750" stop-color="#2a1eff"/><stop offset="0.875" stop-color="#1b0eff"/><stop offset="1.000" stop-color="#0e01ff"/></radialGradient><radialGradient id="i45" gradientUnits="userSpaceOnUse" cx="1439.0" cy="314.0" r="191.5"><stop offset="0.000" stop-color="#ffffff"/><stop offset="0.125" stop-color="#bdc0ff"/><stop offset="0.250" stop-color="#8d92ff"/><stop offset="0.375" stop-color="#686eff"/><stop offset="0.500" stop-color="#4a52ff"/><stop offset="0.625" stop-color="#333bff"/><stop offset="0.750" stop-color="#1f28ff"/><stop offset="0.875" stop-color="#0e18ff"/><stop offset="1.000" stop-color="#010bff"/></radialGradient><radialGradient id="i46" gradientUnits="userSpaceOnUse" cx="1439.0" cy="314.0" r="169.4"><stop offset="0.000" stop-color="#ffffff"/><stop offset="0.125" stop-color="#c1c9ff"/><stop offset="0.250" stop-color="#92a1ff"/><stop offset="0.375" stop-color="#6d80ff"/><stop offset="0.500" stop-color="#4f66ff"/><stop offset="0.625" stop-color="#3651ff"/><stop offset="0.750" stop-color="#213eff"/><stop offset="0.875" stop-color="#0f2fff"/><stop offset="1.000" stop-color="#0122ff"/></radialGradient><radialGradient id="i47" gradientUnits="userSpaceOnUse" cx="1439.0" cy="314.0" r="152.3"><stop offset="0.000" stop-color="#ffffff"/><stop offset="0.125" stop-color="#c5d1ff"/><stop offset="0.250" stop-color="#97adff"/><stop offset="0.375" stop-color="#7190ff"/><stop offset="0.500" stop-color="#5378ff"/><stop offset="0.625" stop-color="#3964ff"/><stop offset="0.750" stop-color="#2353ff"/><stop offset="0.875" stop-color="#1044ff"/><stop offset="1.000" stop-color="#0137ff"/></radialGradient><radialGradient id="i48" gradientUnits="userSpaceOnUse" cx="1439.0" cy="314.0" r="138.7"><stop offset="0.000" stop-color="#ffffff"/><stop offset="0.125" stop-color="#c7d8ff"/><stop offset="0.250" stop-color="#9ab8ff"/><stop offset="0.375" stop-color="#759eff"/><stop offset="0.500" stop-color="#5688ff"/><stop offset="0.625" stop-color="#3c75ff"/><stop offset="0.750" stop-color="#2565ff"/><stop offset="0.875" stop-color="#1157ff"/><stop offset="1.000" stop-color="#014bff"/></radialGradient><radialGradient id="i49" gradientUnits="userSpaceOnUse" cx="1439.0" cy="314.0" r="127.6"><stop offset="0.000" stop-color="#ffffff"/><stop offset="0.125" stop-color="#caddff"/><stop offset="0.250" stop-color="#9ec1ff"/><stop offset="0.375" stop-color="#79aaff"/><stop offset="0.500" stop-color="#5996ff"/><stop offset="0.625" stop-color="#3e85ff"/><stop offset="0.750" stop-color="#2776ff"/><stop offset="0.875" stop-color="#1269ff"/><stop offset="1.000" stop-color="#015eff"/></radialGradient><radialGradient id="i50" gradientUnits="userSpaceOnUse" cx="1439.0" cy="314.0" r="118.5"><stop offset="0.000" stop-color="#ffffff"/><stop offset="0.125" stop-color="#cce2ff"/><stop offset="0.250" stop-color="#a1caff"/><stop offset="0.375" stop-color="#7cb5ff"/><stop offset="0.500" stop-color="#5ca3ff"/><stop offset="0.625" stop-color="#4194ff"/><stop offset="0.750" stop-color="#2986ff"/><stop offset="0.875" stop-color="#137aff"/><stop offset="1.000" stop-color="#0170ff"/></radialGradient><radialGradient id="i51" gradientUnits="userSpaceOnUse" cx="1439.0" cy="314.0" r="110.8"><stop offset="0.000" stop-color="#ffffff"/><stop offset="0.125" stop-color="#cde6ff"/><stop offset="0.250" stop-color="#a3d1ff"/><stop offset="0.375" stop-color="#7fbfff"/><stop offset="0.500" stop-color="#5fafff"/><stop offset="0.625" stop-color="#43a1ff"/><stop offset="0.750" stop-color="#2a95ff"/><stop offset="0.875" stop-color="#148aff"/><stop offset="1.000" stop-color="#0181ff"/></radialGradient><radialGradient id="i52" gradientUnits="userSpaceOnUse" cx="1439.0" cy="314.0" r="104.4"><stop offset="0.000" stop-color="#ffffff"/><stop offset="0.125" stop-color="#cfeaff"/><stop offset="0.250" stop-color="#a6d8ff"/><stop offset="0.375" stop-color="#81c9ff"/><stop offset="0.500" stop-color="#61bbff"/><stop offset="0.625" stop-color="#45aeff"/><stop offset="0.750" stop-color="#2ca3ff"/><stop offset="0.875" stop-color="#1599ff"/><stop offset="1.000" stop-color="#0191ff"/></radialGradient><radialGradient id="i53" gradientUnits="userSpaceOnUse" cx="1439.0" cy="314.0" r="98.9"><stop offset="0.000" stop-color="#ffffff"/><stop offset="0.125" stop-color="#d1eeff"/><stop offset="0.250" stop-color="#a8dfff"/><stop offset="0.375" stop-color="#84d1ff"/><stop offset="0.500" stop-color="#64c5ff"/><stop offset="0.625" stop-color="#47baff"/><stop offset="0.750" stop-color="#2db1ff"/><stop offset="0.875" stop-color="#15a8ff"/><stop offset="1.000" stop-color="#01a0ff"/></radialGradient><radialGradient id="i54" gradientUnits="userSpaceOnUse" cx="1439.0" cy="314.0" r="94.2"><stop offset="0.000" stop-color="#ffffff"/><stop offset="0.125" stop-color="#d2f1ff"/><stop offset="0.250" stop-color="#aae4ff"/><stop offset="0.375" stop-color="#86d9ff"/><stop offset="0.500" stop-color="#66cfff"/><stop offset="0.625" stop-color="#49c6ff"/><stop offset="0.750" stop-color="#2ebeff"/><stop offset="0.875" stop-color="#16b6ff"/><stop offset="1.000" stop-color="#01b0ff"/></radialGradient><radialGradient id="i55" gradientUnits="userSpaceOnUse" cx="1439.0" cy="314.0" r="90.2"><stop offset="0.000" stop-color="#ffffff"/><stop offset="0.125" stop-color="#d3f4ff"/><stop offset="0.250" stop-color="#aceaff"/><stop offset="0.375" stop-color="#88e1ff"/><stop offset="0.500" stop-color="#68d9ff"/><stop offset="0.625" stop-color="#4bd1ff"/><stop offset="0.750" stop-color="#30caff"/><stop offset="0.875" stop-color="#17c4ff"/><stop offset="1.000" stop-color="#01beff"/></radialGradient><radialGradient id="i56" gradientUnits="userSpaceOnUse" cx="1439.0" cy="314.0" r="86.7"><stop offset="0.000" stop-color="#ffffff"/><stop offset="0.125" stop-color="#d4f7ff"/><stop offset="0.250" stop-color="#aeefff"/><stop offset="0.375" stop-color="#8ae8ff"/><stop offset="0.500" stop-color="#6ae2ff"/><stop offset="0.625" stop-color="#4cdcff"/><stop offset="0.750" stop-color="#31d6ff"/><stop offset="0.875" stop-color="#17d2ff"/><stop offset="1.000" stop-color="#01cdff"/></radialGradient><radialGradient id="i57" gradientUnits="userSpaceOnUse" cx="1439.0" cy="314.0" r="83.8"><stop offset="0.000" stop-color="#ffffff"/><stop offset="0.125" stop-color="#d5f9ff"/><stop offset="0.250" stop-color="#aff4ff"/><stop offset="0.375" stop-color="#8cefff"/><stop offset="0.500" stop-color="#6ceaff"/><stop offset="0.625" stop-color="#4ee6ff"/><stop offset="0.750" stop-color="#32e2ff"/><stop offset="0.875" stop-color="#18dfff"/><stop offset="1.000" stop-color="#01dcff"/></radialGradient><radialGradient id="i58" gradientUnits="userSpaceOnUse" cx="1439.0" cy="314.0" r="81.2"><stop offset="0.000" stop-color="#ffffff"/><stop offset="0.125" stop-color="#d6fcff"/><stop offset="0.250" stop-color="#b1f9ff"/><stop offset="0.375" stop-color="#8ef6ff"/><stop offset="0.500" stop-color="#6ef3ff"/><stop offset="0.625" stop-color="#50f0ff"/><stop offset="0.750" stop-color="#33eeff"/><stop offset="0.875" stop-color="#19ecff"/><stop offset="1.000" stop-color="#01eaff"/></radialGradient><radialGradient id="i59" gradientUnits="userSpaceOnUse" cx="1439.0" cy="314.0" r="79.0"><stop offset="0.000" stop-color="#ffffff"/><stop offset="0.125" stop-color="#d7feff"/><stop offset="0.250" stop-color="#b2fdff"/><stop offset="0.375" stop-color="#90fcff"/><stop offset="0.500" stop-color="#70fbff"/><stop offset="0.625" stop-color="#51faff"/><stop offset="0.750" stop-color="#34faff"/><stop offset="0.875" stop-color="#19f9ff"/><stop offset="1.000" stop-color="#01f8ff"/></radialGradient><radialGradient id="i60" gradientUnits="userSpaceOnUse" cx="1439.0" cy="314.0" r="77.1"><stop offset="0.000" stop-color="#ffffff"/><stop offset="0.125" stop-color="#d7fffe"/><stop offset="0.250" stop-color="#b2fffd"/><stop offset="0.375" stop-color="#90fffc"/><stop offset="0.500" stop-color="#6ffffb"/><stop offset="0.625" stop-color="#51fffa"/><stop offset="0.750" stop-color="#34fff9"/><stop offset="0.875" stop-color="#19fff8"/><stop offset="1.000" stop-color="#01fff7"/></radialGradient><radialGradient id="i61" gradientUnits="userSpaceOnUse" cx="1439.0" cy="314.0" r="75.5"><stop offset="0.000" stop-color="#ffffff"/><stop offset="0.125" stop-color="#d6fffc"/><stop offset="0.250" stop-color="#b1fff9"/><stop offset="0.375" stop-color="#8efff6"/><stop offset="0.500" stop-color="#6efff3"/><stop offset="0.625" stop-color="#50fff1"/><stop offset="0.750" stop-color="#33ffef"/><stop offset="0.875" stop-color="#19ffec"/><stop offset="1.000" stop-color="#01ffea"/></radialGradient><radialGradient id="i62" gradientUnits="userSpaceOnUse" cx="1439.0" cy="314.0" r="74.2"><stop offset="0.000" stop-color="#ffffff"/><stop offset="0.125" stop-color="#d6fffa"/><stop offset="0.250" stop-color="#b0fff5"/><stop offset="0.375" stop-color="#8dfff0"/><stop offset="0.500" stop-color="#6cffec"/><stop offset="0.625" stop-color="#4effe8"/><stop offset="0.750" stop-color="#32ffe5"/><stop offset="0.875" stop-color="#18ffe2"/><stop offset="1.000" stop-color="#01ffdf"/></radialGradient><radialGradient id="i63" gradientUnits="userSpaceOnUse" cx="1439.0" cy="314.0" r="73.1"><stop offset="0.000" stop-color="#ffffff"/><stop offset="0.125" stop-color="#d5fff8"/><stop offset="0.250" stop-color="#aefff1"/><stop offset="0.375" stop-color="#8bffeb"/><stop offset="0.500" stop-color="#6bffe6"/><stop offset="0.625" stop-color="#4dffe1"/><stop offset="0.750" stop-color="#31ffdc"/><stop offset="0.875" stop-color="#18ffd7"/><stop offset="1.000" stop-color="#01ffd4"/></radialGradient><radialGradient id="i64" gradientUnits="userSpaceOnUse" cx="1439.0" cy="314.0" r="72.2"><stop offset="0.000" stop-color="#ffffff"/><stop offset="0.125" stop-color="#d4fff6"/><stop offset="0.250" stop-color="#adffee"/><stop offset="0.375" stop-color="#8affe6"/><stop offset="0.500" stop-color="#69ffdf"/><stop offset="0.625" stop-color="#4cffd9"/><stop offset="0.750" stop-color="#30ffd3"/><stop offset="0.875" stop-color="#17ffce"/><stop offset="1.000" stop-color="#01ffc9"/></radialGradient><radialGradient id="i65" gradientUnits="userSpaceOnUse" cx="1439.0" cy="314.0" r="71.6"><stop offset="0.000" stop-color="#ffffff"/><stop offset="0.125" stop-color="#d3fff4"/><stop offset="0.250" stop-color="#acffea"/><stop offset="0.375" stop-color="#88ffe1"/><stop offset="0.500" stop-color="#68ffd9"/><stop offset="0.625" stop-color="#4bffd2"/><stop offset="0.750" stop-color="#30ffcb"/><stop offset="0.875" stop-color="#17ffc5"/><stop offset="1.000" stop-color="#01ffc0"/></radialGradient><radialGradient id="i66" gradientUnits="userSpaceOnUse" cx="1439.0" cy="314.0" r="71.1"><stop offset="0.000" stop-color="#ffffff"/><stop offset="0.125" stop-color="#d2fff2"/><stop offset="0.250" stop-color="#abffe7"/><stop offset="0.375" stop-color="#87ffdd"/><stop offset="0.500" stop-color="#67ffd4"/><stop offset="0.625" stop-color="#4affcb"/><stop offset="0.750" stop-color="#2fffc4"/><stop offset="0.875" stop-color="#16ffbd"/><stop offset="1.000" stop-color="#01ffb7"/></radialGradient><radialGradient id="i67" gradientUnits="userSpaceOnUse" cx="1439.0" cy="314.0" r="70.9"><stop offset="0.000" stop-color="#ffffff"/><stop offset="0.125" stop-color="#d2fff1"/><stop offset="0.250" stop-color="#aaffe4"/><stop offset="0.375" stop-color="#86ffd8"/><stop offset="0.500" stop-color="#66ffce"/><stop offset="0.625" stop-color="#48ffc5"/><stop offset="0.750" stop-color="#2effbd"/><stop offset="0.875" stop-color="#16ffb5"/><stop offset="1.000" stop-color="#01ffae"/></radialGradient><radialGradient id="i68" gradientUnits="userSpaceOnUse" cx="1439.0" cy="314.0" r="70.8"><stop offset="0.000" stop-color="#ffffff"/><stop offset="0.125" stop-color="#d1ffef"/><stop offset="0.250" stop-color="#a8ffe1"/><stop offset="0.375" stop-color="#84ffd4"/><stop offset="0.500" stop-color="#64ffc9"/><stop offset="0.625" stop-color="#47ffbf"/><stop offset="0.750" stop-color="#2dffb5"/><stop offset="0.875" stop-color="#16ffad"/><stop offset="1.000" stop-color="#01ffa6"/></radialGradient><radialGradient id="i69" gradientUnits="userSpaceOnUse" cx="1439.0" cy="314.0" r="70.9"><stop offset="0.000" stop-color="#ffffff"/><stop offset="0.125" stop-color="#d0ffed"/><stop offset="0.250" stop-color="#a7ffde"/><stop offset="0.375" stop-color="#83ffd0"/><stop offset="0.500" stop-color="#63ffc4"/><stop offset="0.625" stop-color="#46ffb9"/><stop offset="0.750" stop-color="#2dffaf"/><stop offset="0.875" stop-color="#15ffa6"/><stop offset="1.000" stop-color="#01ff9e"/></radialGradient><radialGradient id="i70" gradientUnits="userSpaceOnUse" cx="1439.0" cy="314.0" r="71.3"><stop offset="0.000" stop-color="#ffffff"/><stop offset="0.125" stop-color="#d0ffeb"/><stop offset="0.250" stop-color="#a6ffda"/><stop offset="0.375" stop-color="#82ffcc"/><stop offset="0.500" stop-color="#62ffbe"/><stop offset="0.625" stop-color="#46ffb3"/><stop offset="0.750" stop-color="#2cffa8"/><stop offset="0.875" stop-color="#15ff9f"/><stop offset="1.000" stop-color="#01ff96"/></radialGradient><radialGradient id="i71" gradientUnits="userSpaceOnUse" cx="1439.0" cy="314.0" r="71.8"><stop offset="0.000" stop-color="#ffffff"/><stop offset="0.125" stop-color="#cfffea"/><stop offset="0.250" stop-color="#a5ffd7"/><stop offset="0.375" stop-color="#81ffc7"/><stop offset="0.500" stop-color="#61ffb9"/><stop offset="0.625" stop-color="#45ffad"/><stop offset="0.750" stop-color="#2bffa2"/><stop offset="0.875" stop-color="#15ff97"/><stop offset="1.000" stop-color="#01ff8f"/></radialGradient><radialGradient id="i72" gradientUnits="userSpaceOnUse" cx="1439.0" cy="314.0" r="72.6"><stop offset="0.000" stop-color="#ffffff"/><stop offset="0.125" stop-color="#ceffe8"/><stop offset="0.250" stop-color="#a4ffd4"/><stop offset="0.375" stop-color="#80ffc3"/><stop offset="0.500" stop-color="#60ffb4"/><stop offset="0.625" stop-color="#44ffa7"/><stop offset="0.750" stop-color="#2bff9b"/><stop offset="0.875" stop-color="#14ff91"/><stop offset="1.000" stop-color="#01ff87"/></radialGradient><radialGradient id="i73" gradientUnits="userSpaceOnUse" cx="1439.0" cy="314.0" r="73.5"><stop offset="0.000" stop-color="#ffffff"/><stop offset="0.125" stop-color="#cdffe6"/><stop offset="0.250" stop-color="#a3ffd1"/><stop offset="0.375" stop-color="#7effbf"/><stop offset="0.500" stop-color="#5fffaf"/><stop offset="0.625" stop-color="#43ffa1"/><stop offset="0.750" stop-color="#2aff95"/><stop offset="0.875" stop-color="#14ff8a"/><stop offset="1.000" stop-color="#01ff80"/></radialGradient><radialGradient id="i74" gradientUnits="userSpaceOnUse" cx="1439.0" cy="314.0" r="74.7"><stop offset="0.000" stop-color="#ffffff"/><stop offset="0.125" stop-color="#cdffe4"/><stop offset="0.250" stop-color="#a2ffce"/><stop offset="0.375" stop-color="#7dffbb"/><stop offset="0.500" stop-color="#5effaa"/><stop offset="0.625" stop-color="#42ff9b"/><stop offset="0.750" stop-color="#29ff8e"/><stop offset="0.875" stop-color="#13ff83"/><stop offset="1.000" stop-color="#01ff79"/></radialGradient><radialGradient id="i75" gradientUnits="userSpaceOnUse" cx="1439.0" cy="314.0" r="76.2"><stop offset="0.000" stop-color="#ffffff"/><stop offset="0.125" stop-color="#ccffe3"/><stop offset="0.250" stop-color="#a1ffcb"/><stop offset="0.375" stop-color="#7cffb6"/><stop offset="0.500" stop-color="#5cffa5"/><stop offset="0.625" stop-color="#41ff95"/><stop offset="0.750" stop-color="#29ff88"/><stop offset="0.875" stop-color="#13ff7c"/><stop offset="1.000" stop-color="#01ff72"/></radialGradient><radialGradient id="i76" gradientUnits="userSpaceOnUse" cx="1439.0" cy="314.0" r="77.9"><stop offset="0.000" stop-color="#ffffff"/><stop offset="0.125" stop-color="#cbffe1"/><stop offset="0.250" stop-color="#9fffc7"/><stop offset="0.375" stop-color="#7bffb2"/><stop offset="0.500" stop-color="#5bff9f"/><stop offset="0.625" stop-color="#40ff8f"/><stop offset="0.750" stop-color="#28ff82"/><stop offset="0.875" stop-color="#13ff75"/><stop offset="1.000" stop-color="#01ff6b"/></radialGradient><radialGradient id="i77" gradientUnits="userSpaceOnUse" cx="1439.0" cy="314.0" r="80.0"><stop offset="0.000" stop-color="#ffffff"/><stop offset="0.125" stop-color="#caffdf"/><stop offset="0.250" stop-color="#9effc4"/><stop offset="0.375" stop-color="#79ffad"/><stop offset="0.500" stop-color="#5aff9a"/><stop offset="0.625" stop-color="#3fff89"/><stop offset="0.750" stop-color="#27ff7b"/><stop offset="0.875" stop-color="#12ff6e"/><stop offset="1.000" stop-color="#01ff63"/></radialGradient><radialGradient id="i78" gradientUnits="userSpaceOnUse" cx="1439.0" cy="314.0" r="82.3"><stop offset="0.000" stop-color="#ffffff"/><stop offset="0.125" stop-color="#c9ffdd"/><stop offset="0.250" stop-color="#9dffc0"/><stop offset="0.375" stop-color="#78ffa9"/><stop offset="0.500" stop-color="#59ff94"/><stop offset="0.625" stop-color="#3eff83"/><stop offset="0.750" stop-color="#27ff74"/><stop offset="0.875" stop-color="#12ff67"/><stop offset="1.000" stop-color="#01ff5c"/></radialGradient><radialGradient id="i79" gradientUnits="userSpaceOnUse" cx="1439.0" cy="314.0" r="85.1"><stop offset="0.000" stop-color="#ffffff"/><stop offset="0.125" stop-color="#c8ffda"/><stop offset="0.250" stop-color="#9cffbc"/><stop offset="0.375" stop-color="#77ffa4"/><stop offset="0.500" stop-color="#58ff8f"/><stop offset="0.625" stop-color="#3dff7d"/><stop offset="0.750" stop-color="#26ff6d"/><stop offset="0.875" stop-color="#12ff60"/><stop offset="1.000" stop-color="#01ff55"/></radialGradient><radialGradient id="i80" gradientUnits="userSpaceOnUse" cx="1439.0" cy="314.0" r="88.3"><stop offset="0.000" stop-color="#ffffff"/><stop offset="0.125" stop-color="#c7ffd8"/><stop offset="0.250" stop-color="#9affb8"/><stop offset="0.375" stop-color="#75ff9f"/><stop offset="0.500" stop-color="#56ff89"/><stop offset="0.625" stop-color="#3cff76"/><stop offset="0.750" stop-color="#25ff66"/><stop offset="0.875" stop-color="#11ff59"/><stop offset="1.000" stop-color="#01ff4d"/></radialGradient><radialGradient id="i81" gradientUnits="userSpaceOnUse" cx="1439.0" cy="314.0" r="92.0"><stop offset="0.000" stop-color="#ffffff"/><stop offset="0.125" stop-color="#c6ffd5"/><stop offset="0.250" stop-color="#99ffb4"/><stop offset="0.375" stop-color="#74ff99"/><stop offset="0.500" stop-color="#55ff83"/><stop offset="0.625" stop-color="#3bff6f"/><stop offset="0.750" stop-color="#24ff5f"/><stop offset="0.875" stop-color="#11ff51"/><stop offset="1.000" stop-color="#01ff45"/></radialGradient><radialGradient id="i82" gradientUnits="userSpaceOnUse" cx="1439.0" cy="314.0" r="96.3"><stop offset="0.000" stop-color="#ffffff"/><stop offset="0.125" stop-color="#c5ffd3"/><stop offset="0.250" stop-color="#97ffb0"/><stop offset="0.375" stop-color="#72ff93"/><stop offset="0.500" stop-color="#53ff7c"/><stop offset="0.625" stop-color="#3aff68"/><stop offset="0.750" stop-color="#24ff57"/><stop offset="0.875" stop-color="#11ff49"/><stop offset="1.000" stop-color="#01ff3d"/></radialGradient><radialGradient id="i83" gradientUnits="userSpaceOnUse" cx="1439.0" cy="314.0" r="101.4"><stop offset="0.000" stop-color="#ffffff"/><stop offset="0.125" stop-color="#c4ffd0"/><stop offset="0.250" stop-color="#95ffab"/><stop offset="0.375" stop-color="#70ff8d"/><stop offset="0.500" stop-color="#52ff75"/><stop offset="0.625" stop-color="#38ff61"/><stop offset="0.750" stop-color="#23ff4f"/><stop offset="0.875" stop-color="#10ff41"/><stop offset="1.000" stop-color="#01ff34"/></radialGradient><radialGradient id="i84" gradientUnits="userSpaceOnUse" cx="1439.0" cy="314.0" r="107.3"><stop offset="0.000" stop-color="#ffffff"/><stop offset="0.125" stop-color="#c2ffcd"/><stop offset="0.250" stop-color="#94ffa6"/><stop offset="0.375" stop-color="#6eff87"/><stop offset="0.500" stop-color="#50ff6d"/><stop offset="0.625" stop-color="#37ff58"/><stop offset="0.750" stop-color="#22ff47"/><stop offset="0.875" stop-color="#10ff38"/><stop offset="1.000" stop-color="#01ff2b"/></radialGradient><radialGradient id="i85" gradientUnits="userSpaceOnUse" cx="1439.0" cy="314.0" r="114.2"><stop offset="0.000" stop-color="#ffffff"/><stop offset="0.125" stop-color="#c1ffc9"/><stop offset="0.250" stop-color="#92ffa0"/><stop offset="0.375" stop-color="#6cff7f"/><stop offset="0.500" stop-color="#4eff65"/><stop offset="0.625" stop-color="#36ff50"/><stop offset="0.750" stop-color="#21ff3e"/><stop offset="0.875" stop-color="#0fff2e"/><stop offset="1.000" stop-color="#01ff22"/></radialGradient><radialGradient id="i86" gradientUnits="userSpaceOnUse" cx="1439.0" cy="314.0" r="122.5"><stop offset="0.000" stop-color="#ffffff"/><stop offset="0.125" stop-color="#bfffc5"/><stop offset="0.250" stop-color="#8fff99"/><stop offset="0.375" stop-color="#6aff78"/><stop offset="0.500" stop-color="#4cff5c"/><stop offset="0.625" stop-color="#34ff46"/><stop offset="0.750" stop-color="#20ff34"/><stop offset="0.875" stop-color="#0fff24"/><stop offset="1.000" stop-color="#01ff17"/></radialGradient><radialGradient id="i87" gradientUnits="userSpaceOnUse" cx="1439.0" cy="314.0" r="132.5"><stop offset="0.000" stop-color="#ffffff"/><stop offset="0.125" stop-color="#bdffc0"/><stop offset="0.250" stop-color="#8dff92"/><stop offset="0.375" stop-color="#68ff6f"/><stop offset="0.500" stop-color="#4aff53"/><stop offset="0.625" stop-color="#32ff3c"/><stop offset="0.750" stop-color="#1fff29"/><stop offset="0.875" stop-color="#0eff19"/><stop offset="1.000" stop-color="#01ff0d"/></radialGradient><radialGradient id="i88" gradientUnits="userSpaceOnUse" cx="1439.0" cy="314.0" r="144.7"><stop offset="0.000" stop-color="#ffffff"/><stop offset="0.125" stop-color="#bbffbb"/><stop offset="0.250" stop-color="#8aff8a"/><stop offset="0.375" stop-color="#65ff65"/><stop offset="0.500" stop-color="#48ff48"/><stop offset="0.625" stop-color="#31ff31"/><stop offset="0.750" stop-color="#1dff1e"/><stop offset="0.875" stop-color="#0eff0e"/><stop offset="1.000" stop-color="#01ff01"/></radialGradient><radialGradient id="i89" gradientUnits="userSpaceOnUse" cx="1439.0" cy="314.0" r="140.9"><stop offset="0.000" stop-color="#ffffff"/><stop offset="0.125" stop-color="#bfffbc"/><stop offset="0.250" stop-color="#91ff8b"/><stop offset="0.375" stop-color="#6eff66"/><stop offset="0.500" stop-color="#52ff49"/><stop offset="0.625" stop-color="#3bff32"/><stop offset="0.750" stop-color="#29ff1e"/><stop offset="0.875" stop-color="#19ff0e"/><stop offset="1.000" stop-color="#0dff01"/></radialGradient><radialGradient id="i90" gradientUnits="userSpaceOnUse" cx="1439.0" cy="314.0" r="137.4"><stop offset="0.000" stop-color="#ffffff"/><stop offset="0.125" stop-color="#c4ffbd"/><stop offset="0.250" stop-color="#98ff8d"/><stop offset="0.375" stop-color="#76ff68"/><stop offset="0.500" stop-color="#5cff4a"/><stop offset="0.625" stop-color="#46ff33"/><stop offset="0.750" stop-color="#34ff1f"/><stop offset="0.875" stop-color="#25ff0e"/><stop offset="1.000" stop-color="#19ff01"/></radialGradient><radialGradient id="i91" gradientUnits="userSpaceOnUse" cx="1439.0" cy="314.0" r="134.4"><stop offset="0.000" stop-color="#ffffff"/><stop offset="0.125" stop-color="#c8ffbf"/><stop offset="0.250" stop-color="#9fff8f"/><stop offset="0.375" stop-color="#7fff69"/><stop offset="0.500" stop-color="#66ff4c"/><stop offset="0.625" stop-color="#51ff34"/><stop offset="0.750" stop-color="#40ff1f"/><stop offset="0.875" stop-color="#31ff0f"/><stop offset="1.000" stop-color="#25ff01"/></radialGradient><radialGradient id="i92" gradientUnits="userSpaceOnUse" cx="1439.0" cy="314.0" r="132.0"><stop offset="0.000" stop-color="#ffffff"/><stop offset="0.125" stop-color="#ccffc0"/><stop offset="0.250" stop-color="#a5ff90"/><stop offset="0.375" stop-color="#87ff6b"/><stop offset="0.500" stop-color="#6fff4d"/><stop offset="0.625" stop-color="#5cff35"/><stop offset="0.750" stop-color="#4bff20"/><stop offset="0.875" stop-color="#3dff0f"/><stop offset="1.000" stop-color="#32ff01"/></radialGradient><radialGradient id="i93" gradientUnits="userSpaceOnUse" cx="1439.0" cy="314.0" r="129.9"><stop offset="0.000" stop-color="#ffffff"/><stop offset="0.125" stop-color="#d0ffc1"/><stop offset="0.250" stop-color="#acff92"/><stop offset="0.375" stop-color="#90ff6c"/><stop offset="0.500" stop-color="#79ff4e"/><stop offset="0.625" stop-color="#66ff36"/><stop offset="0.750" stop-color="#57ff21"/><stop offset="0.875" stop-color="#49ff0f"/><stop offset="1.000" stop-color="#3eff01"/></radialGradient><radialGradient id="i94" gradientUnits="userSpaceOnUse" cx="1439.0" cy="314.0" r="128.3"><stop offset="0.000" stop-color="#ffffff"/><stop offset="0.125" stop-color="#d4ffc2"/><stop offset="0.250" stop-color="#b3ff93"/><stop offset="0.375" stop-color="#98ff6e"/><stop offset="0.500" stop-color="#83ff50"/><stop offset="0.625" stop-color="#71ff37"/><stop offset="0.750" stop-color="#62ff22"/><stop offset="0.875" stop-color="#56ff10"/><stop offset="1.000" stop-color="#4bff01"/></radialGradient><radialGradient id="i95" gradientUnits="userSpaceOnUse" cx="1439.0" cy="314.0" r="127.1"><stop offset="0.000" stop-color="#ffffff"/><stop offset="0.125" stop-color="#d8ffc3"/><stop offset="0.250" stop-color="#b9ff95"/><stop offset="0.375" stop-color="#a1ff6f"/><stop offset="0.500" stop-color="#8dff51"/><stop offset="0.625" stop-color="#7cff38"/><stop offset="0.750" stop-color="#6eff22"/><stop offset="0.875" stop-color="#62ff10"/><stop offset="1.000" stop-color="#58ff01"/></radialGradient><radialGradient id="i96" gradientUnits="userSpaceOnUse" cx="1439.0" cy="314.0" r="126.2"><stop offset="0.000" stop-color="#ffffff"/><stop offset="0.125" stop-color="#dcffc4"/><stop offset="0.250" stop-color="#c0ff96"/><stop offset="0.375" stop-color="#a9ff71"/><stop offset="0.500" stop-color="#97ff52"/><stop offset="0.625" stop-color="#88ff39"/><stop offset="0.750" stop-color="#7bff23"/><stop offset="0.875" stop-color="#6fff10"/><stop offset="1.000" stop-color="#66ff01"/></radialGradient><radialGradient id="i97" gradientUnits="userSpaceOnUse" cx="1439.0" cy="314.0" r="125.7"><stop offset="0.000" stop-color="#ffffff"/><stop offset="0.125" stop-color="#dfffc5"/><stop offset="0.250" stop-color="#c6ff98"/><stop offset="0.375" stop-color="#b2ff72"/><stop offset="0.500" stop-color="#a1ff54"/><stop offset="0.625" stop-color="#93ff3a"/><stop offset="0.750" stop-color="#87ff24"/><stop offset="0.875" stop-color="#7dff11"/><stop offset="1.000" stop-color="#74ff01"/></radialGradient><radialGradient id="i98" gradientUnits="userSpaceOnUse" cx="1439.0" cy="314.0" r="125.5"><stop offset="0.000" stop-color="#ffffff"/><stop offset="0.125" stop-color="#e3ffc6"/><stop offset="0.250" stop-color="#cdff99"/><stop offset="0.375" stop-color="#bbff74"/><stop offset="0.500" stop-color="#acff55"/><stop offset="0.625" stop-color="#9fff3b"/><stop offset="0.750" stop-color="#94ff24"/><stop offset="0.875" stop-color="#8bff11"/><stop offset="1.000" stop-color="#83ff01"/></radialGradient><radialGradient id="i99" gradientUnits="userSpaceOnUse" cx="1439.0" cy="314.0" r="125.7"><stop offset="0.000" stop-color="#ffffff"/><stop offset="0.125" stop-color="#e7ffc7"/><stop offset="0.250" stop-color="#d4ff9b"/><stop offset="0.375" stop-color="#c4ff76"/><stop offset="0.500" stop-color="#b7ff57"/><stop offset="0.625" stop-color="#acff3c"/><stop offset="0.750" stop-color="#a2ff25"/><stop offset="0.875" stop-color="#99ff11"/><stop offset="1.000" stop-color="#92ff01"/></radialGradient><radialGradient id="i100" gradientUnits="userSpaceOnUse" cx="1439.0" cy="314.0" r="126.2"><stop offset="0.000" stop-color="#ffffff"/><stop offset="0.125" stop-color="#ebffc9"/><stop offset="0.250" stop-color="#dbff9c"/><stop offset="0.375" stop-color="#ceff77"/><stop offset="0.500" stop-color="#c2ff58"/><stop offset="0.625" stop-color="#b9ff3d"/><stop offset="0.750" stop-color="#b0ff26"/><stop offset="0.875" stop-color="#a9ff12"/><stop offset="1.000" stop-color="#a3ff01"/></radialGradient><radialGradient id="i101" gradientUnits="userSpaceOnUse" cx="1439.0" cy="314.0" r="127.1"><stop offset="0.000" stop-color="#ffffff"/><stop offset="0.125" stop-color="#efffca"/><stop offset="0.250" stop-color="#e2ff9e"/><stop offset="0.375" stop-color="#d7ff79"/><stop offset="0.500" stop-color="#ceff5a"/><stop offset="0.625" stop-color="#c6ff3f"/><stop offset="0.750" stop-color="#bfff27"/><stop offset="0.875" stop-color="#b9ff12"/><stop offset="1.000" stop-color="#b4ff01"/></radialGradient><radialGradient id="i102" gradientUnits="userSpaceOnUse" cx="1439.0" cy="314.0" r="128.3"><stop offset="0.000" stop-color="#ffffff"/><stop offset="0.125" stop-color="#f3ffcb"/><stop offset="0.250" stop-color="#eaffa0"/><stop offset="0.375" stop-color="#e2ff7b"/><stop offset="0.500" stop-color="#dbff5b"/><stop offset="0.625" stop-color="#d5ff40"/><stop offset="0.750" stop-color="#d0ff28"/><stop offset="0.875" stop-color="#cbff13"/><stop offset="1.000" stop-color="#c7ff01"/></radialGradient><radialGradient id="i103" gradientUnits="userSpaceOnUse" cx="1439.0" cy="314.0" r="129.9"><stop offset="0.000" stop-color="#ffffff"/><stop offset="0.125" stop-color="#f8ffcc"/><stop offset="0.250" stop-color="#f2ffa1"/><stop offset="0.375" stop-color="#edff7d"/><stop offset="0.500" stop-color="#e8ff5d"/><stop offset="0.625" stop-color="#e4ff41"/><stop offset="0.750" stop-color="#e1ff29"/><stop offset="0.875" stop-color="#deff13"/><stop offset="1.000" stop-color="#dbff01"/></radialGradient><radialGradient id="i104" gradientUnits="userSpaceOnUse" cx="1439.0" cy="314.0" r="131.9"><stop offset="0.000" stop-color="#ffffff"/><stop offset="0.125" stop-color="#fcffcd"/><stop offset="0.250" stop-color="#faffa3"/><stop offset="0.375" stop-color="#f8ff7f"/><stop offset="0.500" stop-color="#f7ff5f"/><stop offset="0.625" stop-color="#f5ff43"/><stop offset="0.750" stop-color="#f4ff2a"/><stop offset="0.875" stop-color="#f3ff14"/><stop offset="1.000" stop-color="#f2ff01"/></radialGradient><radialGradient id="i105" gradientUnits="userSpaceOnUse" cx="1439.0" cy="314.0" r="134.4"><stop offset="0.000" stop-color="#ffffff"/><stop offset="0.125" stop-color="#fffdcd"/><stop offset="0.250" stop-color="#fffba3"/><stop offset="0.375" stop-color="#fffa7e"/><stop offset="0.500" stop-color="#fff85e"/><stop offset="0.625" stop-color="#fff742"/><stop offset="0.750" stop-color="#fff62a"/><stop offset="0.875" stop-color="#fff514"/><stop offset="1.000" stop-color="#fff401"/></radialGradient><radialGradient id="i106" gradientUnits="userSpaceOnUse" cx="1439.0" cy="314.0" r="137.3"><stop offset="0.000" stop-color="#ffffff"/><stop offset="0.125" stop-color="#fff8cb"/><stop offset="0.250" stop-color="#fff29f"/><stop offset="0.375" stop-color="#ffed7a"/><stop offset="0.500" stop-color="#ffe95b"/><stop offset="0.625" stop-color="#ffe63f"/><stop offset="0.750" stop-color="#ffe328"/><stop offset="0.875" stop-color="#ffe013"/><stop offset="1.000" stop-color="#ffdd01"/></radialGradient><radialGradient id="i107" gradientUnits="userSpaceOnUse" cx="1439.0" cy="314.0" r="140.8"><stop offset="0.000" stop-color="#ffffff"/><stop offset="0.125" stop-color="#fff3c8"/><stop offset="0.250" stop-color="#ffea9b"/><stop offset="0.375" stop-color="#ffe276"/><stop offset="0.500" stop-color="#ffdb57"/><stop offset="0.625" stop-color="#ffd53d"/><stop offset="0.750" stop-color="#ffd026"/><stop offset="0.875" stop-color="#ffcc12"/><stop offset="1.000" stop-color="#ffc801"/></radialGradient><radialGradient id="i108" gradientUnits="userSpaceOnUse" cx="1439.0" cy="314.0" r="144.9"><stop offset="0.000" stop-color="#ffffff"/><stop offset="0.125" stop-color="#ffeec5"/><stop offset="0.250" stop-color="#ffe198"/><stop offset="0.375" stop-color="#ffd673"/><stop offset="0.500" stop-color="#ffcd54"/><stop offset="0.625" stop-color="#ffc53a"/><stop offset="0.750" stop-color="#ffbf24"/><stop offset="0.875" stop-color="#ffb911"/><stop offset="1.000" stop-color="#ffb401"/></radialGradient><radialGradient id="i109" gradientUnits="userSpaceOnUse" cx="1439.0" cy="314.0" r="149.6"><stop offset="0.000" stop-color="#ffffff"/><stop offset="0.125" stop-color="#ffe9c3"/><stop offset="0.250" stop-color="#ffd894"/><stop offset="0.375" stop-color="#ffca6f"/><stop offset="0.500" stop-color="#ffbf50"/><stop offset="0.625" stop-color="#ffb637"/><stop offset="0.750" stop-color="#ffae22"/><stop offset="0.875" stop-color="#ffa710"/><stop offset="1.000" stop-color="#ffa201"/></radialGradient><radialGradient id="i110" gradientUnits="userSpaceOnUse" cx="1439.0" cy="314.0" r="155.1"><stop offset="0.000" stop-color="#ffffff"/><stop offset="0.125" stop-color="#ffe3c0"/><stop offset="0.250" stop-color="#ffcf90"/><stop offset="0.375" stop-color="#ffbe6b"/><stop offset="0.500" stop-color="#ffb14d"/><stop offset="0.625" stop-color="#ffa735"/><stop offset="0.750" stop-color="#ff9e20"/><stop offset="0.875" stop-color="#ff960f"/><stop offset="1.000" stop-color="#ff9001"/></radialGradient><radialGradient id="i111" gradientUnits="userSpaceOnUse" cx="1439.0" cy="314.0" r="161.4"><stop offset="0.000" stop-color="#ffffff"/><stop offset="0.125" stop-color="#ffdebd"/><stop offset="0.250" stop-color="#ffc58c"/><stop offset="0.375" stop-color="#ffb367"/><stop offset="0.500" stop-color="#ffa44a"/><stop offset="0.625" stop-color="#ff9832"/><stop offset="0.750" stop-color="#ff8e1e"/><stop offset="0.875" stop-color="#ff860e"/><stop offset="1.000" stop-color="#ff7f01"/></radialGradient><radialGradient id="i112" gradientUnits="userSpaceOnUse" cx="1439.0" cy="314.0" r="168.8"><stop offset="0.000" stop-color="#ffffff"/><stop offset="0.125" stop-color="#ffd8ba"/><stop offset="0.250" stop-color="#ffbc88"/><stop offset="0.375" stop-color="#ffa763"/><stop offset="0.500" stop-color="#ff9747"/><stop offset="0.625" stop-color="#ff8a30"/><stop offset="0.750" stop-color="#ff7f1d"/><stop offset="0.875" stop-color="#ff760d"/><stop offset="1.000" stop-color="#ff6f00"/></radialGradient><radialGradient id="i113" gradientUnits="userSpaceOnUse" cx="1439.0" cy="314.0" r="177.4"><stop offset="0.000" stop-color="#ffffff"/><stop offset="0.125" stop-color="#ffd1b6"/><stop offset="0.250" stop-color="#ffb284"/><stop offset="0.375" stop-color="#ff9b5f"/><stop offset="0.500" stop-color="#ff8943"/><stop offset="0.625" stop-color="#ff7b2d"/><stop offset="0.750" stop-color="#ff701b"/><stop offset="0.875" stop-color="#ff670c"/><stop offset="1.000" stop-color="#ff5f00"/></radialGradient><radialGradient id="i114" gradientUnits="userSpaceOnUse" cx="1439.0" cy="314.0" r="187.5"><stop offset="0.000" stop-color="#ffffff"/><stop offset="0.125" stop-color="#ffcbb3"/><stop offset="0.250" stop-color="#ffa880"/><stop offset="0.375" stop-color="#ff8e5b"/><stop offset="0.500" stop-color="#ff7c40"/><stop offset="0.625" stop-color="#ff6d2b"/><stop offset="0.750" stop-color="#ff611a"/><stop offset="0.875" stop-color="#ff580c"/><stop offset="1.000" stop-color="#ff5000"/></radialGradient><radialGradient id="i115" gradientUnits="userSpaceOnUse" cx="1439.0" cy="314.0" r="199.3"><stop offset="0.000" stop-color="#ffffff"/><stop offset="0.125" stop-color="#ffc3af"/><stop offset="0.250" stop-color="#ff9d7b"/><stop offset="0.375" stop-color="#ff8257"/><stop offset="0.500" stop-color="#ff6e3d"/><stop offset="0.625" stop-color="#ff5f28"/><stop offset="0.750" stop-color="#ff5318"/><stop offset="0.875" stop-color="#ff490b"/><stop offset="1.000" stop-color="#ff4100"/></radialGradient><radialGradient id="i116" gradientUnits="userSpaceOnUse" cx="1439.0" cy="314.0" r="213.4"><stop offset="0.000" stop-color="#ffffff"/><stop offset="0.125" stop-color="#ffbbab"/><stop offset="0.250" stop-color="#ff9176"/><stop offset="0.375" stop-color="#ff7553"/><stop offset="0.500" stop-color="#ff6039"/><stop offset="0.625" stop-color="#ff5026"/><stop offset="0.750" stop-color="#ff4416"/><stop offset="0.875" stop-color="#ff3a0a"/><stop offset="1.000" stop-color="#ff3200"/></radialGradient><radialGradient id="i117" gradientUnits="userSpaceOnUse" cx="1439.0" cy="314.0" r="230.3"><stop offset="0.000" stop-color="#ffffff"/><stop offset="0.125" stop-color="#ffb3a6"/><stop offset="0.250" stop-color="#ff8571"/><stop offset="0.375" stop-color="#ff674e"/><stop offset="0.500" stop-color="#ff5236"/><stop offset="0.625" stop-color="#ff4223"/><stop offset="0.750" stop-color="#ff3615"/><stop offset="0.875" stop-color="#ff2c09"/><stop offset="1.000" stop-color="#ff2400"/></radialGradient><radialGradient id="i118" gradientUnits="userSpaceOnUse" cx="1439.0" cy="314.0" r="250.8"><stop offset="0.000" stop-color="#ffffff"/><stop offset="0.125" stop-color="#ffa9a1"/><stop offset="0.250" stop-color="#ff786c"/><stop offset="0.375" stop-color="#ff594a"/><stop offset="0.500" stop-color="#ff4332"/><stop offset="0.625" stop-color="#ff3321"/><stop offset="0.750" stop-color="#ff2713"/><stop offset="0.875" stop-color="#ff1d09"/><stop offset="1.000" stop-color="#ff1500"/></radialGradient><radialGradient id="i119" gradientUnits="userSpaceOnUse" cx="1439.0" cy="314.0" r="276.2"><stop offset="0.000" stop-color="#ffffff"/><stop offset="0.125" stop-color="#ff9e9b"/><stop offset="0.250" stop-color="#ff6a66"/><stop offset="0.375" stop-color="#ff4a45"/><stop offset="0.500" stop-color="#ff342e"/><stop offset="0.625" stop-color="#ff241e"/><stop offset="0.750" stop-color="#ff1812"/><stop offset="0.875" stop-color="#ff0e08"/><stop offset="1.000" stop-color="#ff0700"/></radialGradient></defs><g clip-path="url(#clipH)" shape-rendering="crispEdges"><rect x="1224.6" y="44" width="17.7" height="2" fill="url(#o0)"/><rect x="1213.5" y="46" width="42.5" height="2" fill="url(#o1)"/><rect x="1206.9" y="48" width="58.9" height="2" fill="url(#o2)"/><rect x="1202.3" y="50" width="71.9" height="2" fill="url(#o3)"/><rect x="1198.4" y="52" width="82.8" height="2" fill="url(#o4)"/><rect x="1195.6" y="54" width="92.0" height="2" fill="url(#o5)"/><rect x="1192.9" y="56" width="100.7" height="2" fill="url(#o6)"/><rect x="1190.7" y="58" width="108.7" height="2" fill="url(#o7)"/><rect x="1188.6" y="60" width="116.6" height="2" fill="url(#o8)"/><rect x="1186.8" y="62" width="124.0" height="2" fill="url(#o9)"/><rect x="1185.1" y="64" width="131.1" height="2" fill="url(#o10)"/><rect x="1183.4" y="66" width="137.9" height="2" fill="url(#o11)"/><rect x="1182.0" y="68" width="144.4" height="2" fill="url(#o12)"/><rect x="1180.7" y="70" width="150.7" height="2" fill="url(#o13)"/><rect x="1179.3" y="72" width="157.0" height="2" fill="url(#o14)"/><rect x="1178.1" y="74" width="162.9" height="2" fill="url(#o15)"/><rect x="1177.0" y="76" width="168.6" height="2" fill="url(#o16)"/><rect x="1175.9" y="78" width="174.3" height="2" fill="url(#o17)"/><rect x="1174.8" y="80" width="179.8" height="2" fill="url(#o18)"/><rect x="1173.9" y="82" width="185.1" height="2" fill="url(#o19)"/><rect x="1173.1" y="84" width="190.3" height="2" fill="url(#o20)"/><rect x="1172.2" y="86" width="195.4" height="2" fill="url(#o21)"/><rect x="1171.4" y="88" width="200.4" height="2" fill="url(#o22)"/><rect x="1170.7" y="90" width="205.3" height="2" fill="url(#o23)"/><rect x="1170.0" y="92" width="210.0" height="2" fill="url(#o24)"/><rect x="1169.4" y="94" width="214.6" height="2" fill="url(#o25)"/><rect x="1168.7" y="96" width="219.3" height="2" fill="url(#o26)"/><rect x="1168.2" y="98" width="223.8" height="2" fill="url(#o27)"/><rect x="1167.7" y="100" width="228.2" height="2" fill="url(#o28)"/><rect x="1167.2" y="102" width="232.6" height="2" fill="url(#o29)"/><rect x="1166.7" y="104" width="236.9" height="2" fill="url(#o30)"/><rect x="1166.3" y="106" width="241.1" height="2" fill="url(#o31)"/><rect x="1165.8" y="108" width="245.3" height="2" fill="url(#o32)"/><rect x="1165.5" y="110" width="249.4" height="2" fill="url(#o33)"/><rect x="1165.2" y="112" width="253.4" height="2" fill="url(#o34)"/><rect x="1164.8" y="114" width="257.5" height="2" fill="url(#o35)"/><rect x="1164.5" y="116" width="261.5" height="2" fill="url(#o36)"/><rect x="1164.2" y="118" width="265.4" height="2" fill="url(#o37)"/><rect x="1164.0" y="120" width="269.3" height="2" fill="url(#o38)"/><rect x="1163.7" y="122" width="273.1" height="2" fill="url(#o39)"/><rect x="1163.5" y="124" width="277.0" height="2" fill="url(#o40)"/><rect x="1163.3" y="126" width="280.8" height="2" fill="url(#o41)"/><rect x="1163.0" y="128" width="284.6" height="2" fill="url(#o42)"/><rect x="1162.9" y="130" width="288.2" height="2" fill="url(#o43)"/><rect x="1162.8" y="132" width="291.9" height="2" fill="url(#o44)"/><rect x="1162.6" y="134" width="295.6" height="2" fill="url(#o45)"/><rect x="1162.5" y="136" width="299.2" height="2" fill="url(#o46)"/><rect x="1162.4" y="138" width="302.9" height="2" fill="url(#o47)"/><rect x="1162.2" y="140" width="306.5" height="2" fill="url(#o48)"/><rect x="1162.2" y="142" width="310.0" height="2" fill="url(#o49)"/><rect x="1162.2" y="144" width="313.5" height="2" fill="url(#o50)"/><rect x="1162.1" y="146" width="317.0" height="2" fill="url(#o51)"/><rect x="1162.1" y="148" width="320.5" height="2" fill="url(#o52)"/><rect x="1162.1" y="150" width="324.0" height="2" fill="url(#o53)"/><rect x="1162.1" y="152" width="327.4" height="2" fill="url(#o54)"/><rect x="1162.1" y="154" width="330.8" height="2" fill="url(#o55)"/><rect x="1162.2" y="156" width="334.1" height="2" fill="url(#o56)"/><rect x="1162.3" y="158" width="337.5" height="2" fill="url(#o57)"/><rect x="1162.3" y="160" width="340.9" height="2" fill="url(#o58)"/><rect x="1162.4" y="162" width="344.2" height="2" fill="url(#o59)"/><rect x="1162.5" y="164" width="347.5" height="2" fill="url(#o60)"/><rect x="1162.6" y="166" width="350.8" height="2" fill="url(#o61)"/><rect x="1162.7" y="168" width="354.0" height="2" fill="url(#o62)"/><rect x="1162.9" y="170" width="357.3" height="2" fill="url(#o63)"/><rect x="1163.0" y="172" width="360.5" height="2" fill="url(#o64)"/><rect x="1163.1" y="174" width="363.8" height="2" fill="url(#o65)"/><rect x="1163.3" y="176" width="367.0" height="2" fill="url(#o66)"/><rect x="1163.5" y="178" width="370.2" height="2" fill="url(#o67)"/><rect x="1163.7" y="180" width="373.4" height="2" fill="url(#o68)"/><rect x="1163.8" y="182" width="376.5" height="2" fill="url(#o69)"/><rect x="1164.0" y="184" width="379.7" height="2" fill="url(#o70)"/><rect x="1164.2" y="186" width="382.9" height="2" fill="url(#o71)"/><rect x="1164.4" y="188" width="386.1" height="2" fill="url(#o72)"/><rect x="1164.7" y="190" width="389.2" height="2" fill="url(#o73)"/><rect x="1164.9" y="192" width="392.3" height="2" fill="url(#o74)"/><rect x="1165.2" y="194" width="395.4" height="2" fill="url(#o75)"/><rect x="1165.4" y="196" width="398.6" height="2" fill="url(#o76)"/><rect x="1165.6" y="198" width="401.7" height="2" fill="url(#o77)"/><rect x="1165.9" y="200" width="404.8" height="2" fill="url(#o78)"/><rect x="1166.2" y="202" width="407.8" height="2" fill="url(#o79)"/><rect x="1166.5" y="204" width="410.9" height="2" fill="url(#o80)"/><rect x="1166.8" y="206" width="413.9" height="2" fill="url(#o81)"/><rect x="1167.1" y="208" width="417.0" height="2" fill="url(#o82)"/><rect x="1167.4" y="210" width="420.0" height="2" fill="url(#o83)"/><rect x="1167.7" y="212" width="423.0" height="2" fill="url(#o84)"/><rect x="1168.0" y="214" width="426.1" height="2" fill="url(#o85)"/><rect x="1168.3" y="216" width="429.1" height="2" fill="url(#o86)"/><rect x="1168.7" y="218" width="432.0" height="2" fill="url(#o87)"/><rect x="1169.0" y="220" width="435.0" height="2" fill="url(#o88)"/><rect x="1169.4" y="222" width="438.0" height="2" fill="url(#o89)"/><rect x="1169.8" y="224" width="441.0" height="2" fill="url(#o90)"/><rect x="1170.1" y="226" width="443.9" height="2" fill="url(#o91)"/><rect x="1170.5" y="228" width="446.9" height="2" fill="url(#o92)"/><rect x="1170.9" y="230" width="449.8" height="2" fill="url(#o93)"/><rect x="1171.3" y="232" width="452.7" height="2" fill="url(#o94)"/><rect x="1171.7" y="234" width="455.7" height="2" fill="url(#o95)"/><rect x="1172.1" y="236" width="458.6" height="2" fill="url(#o96)"/><rect x="1172.6" y="238" width="461.5" height="2" fill="url(#o97)"/><rect x="1173.0" y="240" width="464.4" height="2" fill="url(#o98)"/><rect x="1173.4" y="242" width="467.4" height="2" fill="url(#o99)"/><rect x="1173.8" y="244" width="470.2" height="2" fill="url(#o100)"/><rect x="1174.3" y="246" width="473.1" height="2" fill="url(#o101)"/><rect x="1174.7" y="248" width="476.0" height="2" fill="url(#o102)"/><rect x="1175.2" y="250" width="478.9" height="2" fill="url(#o103)"/><rect x="1175.7" y="252" width="481.8" height="2" fill="url(#o104)"/><rect x="1176.1" y="254" width="484.7" height="2" fill="url(#o105)"/><rect x="1176.6" y="256" width="487.6" height="2" fill="url(#o106)"/><rect x="1177.1" y="258" width="490.5" height="2" fill="url(#o107)"/><rect x="1177.6" y="260" width="493.3" height="2" fill="url(#o108)"/><rect x="1178.1" y="262" width="496.2" height="2" fill="url(#o109)"/><rect x="1178.5" y="264" width="499.0" height="2" fill="url(#o110)"/><rect x="1179.0" y="266" width="501.8" height="2" fill="url(#o111)"/><rect x="1179.5" y="268" width="504.7" height="2" fill="url(#o112)"/><rect x="1180.1" y="270" width="507.5" height="2" fill="url(#o113)"/><rect x="1180.6" y="272" width="510.3" height="2" fill="url(#o114)"/><rect x="1181.1" y="274" width="513.0" height="2" fill="url(#o115)"/><rect x="1181.7" y="276" width="515.8" height="2" fill="url(#o116)"/><rect x="1182.2" y="278" width="518.6" height="2" fill="url(#o117)"/><rect x="1182.7" y="280" width="521.4" height="2" fill="url(#o118)"/><rect x="1183.3" y="282" width="524.2" height="2" fill="url(#o119)"/><rect x="1183.9" y="284" width="527.0" height="2" fill="url(#o120)"/><rect x="1184.5" y="286" width="529.7" height="2" fill="url(#o121)"/><rect x="1185.0" y="288" width="532.5" height="2" fill="url(#o122)"/><rect x="1185.6" y="290" width="535.3" height="2" fill="url(#o123)"/><rect x="1186.2" y="292" width="538.0" height="2" fill="url(#o124)"/><rect x="1186.8" y="294" width="540.8" height="2" fill="url(#o125)"/><rect x="1187.4" y="296" width="543.5" height="2" fill="url(#o126)"/><rect x="1188.0" y="298" width="546.2" height="2" fill="url(#o127)"/><rect x="1188.7" y="300" width="548.9" height="2" fill="url(#o128)"/><rect x="1189.3" y="302" width="551.6" height="2" fill="url(#o129)"/><rect x="1189.9" y="304" width="554.4" height="2" fill="url(#o130)"/><rect x="1190.5" y="306" width="557.1" height="2" fill="url(#o131)"/><rect x="1191.2" y="308" width="559.9" height="2" fill="url(#o132)"/><rect x="1191.8" y="310" width="562.5" height="2" fill="url(#o133)"/><rect x="1192.5" y="312" width="565.2" height="2" fill="url(#o134)"/><rect x="1193.2" y="314" width="567.9" height="2" fill="url(#o135)"/><rect x="1193.8" y="316" width="570.6" height="2" fill="url(#o136)"/><rect x="1194.5" y="318" width="573.2" height="2" fill="url(#o137)"/><rect x="1195.2" y="320" width="575.9" height="2" fill="url(#o138)"/><rect x="1195.9" y="322" width="578.5" height="2" fill="url(#o139)"/><rect x="1196.6" y="324" width="581.1" height="2" fill="url(#o140)"/><rect x="1197.3" y="326" width="583.8" height="2" fill="url(#o141)"/><rect x="1197.9" y="328" width="586.5" height="2" fill="url(#o142)"/><rect x="1198.6" y="330" width="589.1" height="2" fill="url(#o143)"/><rect x="1199.4" y="332" width="591.7" height="2" fill="url(#o144)"/><rect x="1200.1" y="334" width="594.3" height="2" fill="url(#o145)"/><rect x="1200.8" y="336" width="596.9" height="2" fill="url(#o146)"/><rect x="1201.6" y="338" width="599.5" height="2" fill="url(#o147)"/><rect x="1202.3" y="340" width="602.2" height="2" fill="url(#o148)"/><rect x="1203.0" y="342" width="604.8" height="2" fill="url(#o149)"/><rect x="1203.8" y="344" width="607.3" height="2" fill="url(#o150)"/><rect x="1204.6" y="346" width="609.9" height="2" fill="url(#o151)"/><rect x="1205.4" y="348" width="607.2" height="2" fill="url(#o152)"/><rect x="1206.1" y="350" width="599.2" height="2" fill="url(#o153)"/><rect x="1206.9" y="352" width="591.3" height="2" fill="url(#o154)"/><rect x="1207.7" y="354" width="583.3" height="2" fill="url(#o155)"/><rect x="1208.6" y="356" width="575.3" height="2" fill="url(#o156)"/><rect x="1209.4" y="358" width="567.3" height="2" fill="url(#o157)"/><rect x="1210.2" y="360" width="559.3" height="2" fill="url(#o158)"/><rect x="1211.0" y="362" width="551.3" height="2" fill="url(#o159)"/><rect x="1211.9" y="364" width="543.3" height="2" fill="url(#o160)"/><rect x="1212.8" y="366" width="535.3" height="2" fill="url(#o161)"/><rect x="1213.6" y="368" width="527.2" height="2" fill="url(#o162)"/><rect x="1214.5" y="370" width="519.2" height="2" fill="url(#o163)"/><rect x="1215.4" y="372" width="511.2" height="2" fill="url(#o164)"/><rect x="1216.3" y="374" width="503.1" height="2" fill="url(#o165)"/><rect x="1217.2" y="376" width="495.0" height="2" fill="url(#o166)"/><rect x="1218.1" y="378" width="486.9" height="2" fill="url(#o167)"/><rect x="1219.0" y="380" width="478.8" height="2" fill="url(#o168)"/><rect x="1220.0" y="382" width="470.7" height="2" fill="url(#o169)"/><rect x="1221.0" y="384" width="462.6" height="2" fill="url(#o170)"/><rect x="1222.0" y="386" width="454.4" height="2" fill="url(#o171)"/><rect x="1222.9" y="388" width="446.3" height="2" fill="url(#o172)"/><rect x="1223.9" y="390" width="438.1" height="2" fill="url(#o173)"/><rect x="1225.0" y="392" width="429.9" height="2" fill="url(#o174)"/><rect x="1226.1" y="394" width="421.7" height="2" fill="url(#o175)"/><rect x="1227.1" y="396" width="413.4" height="2" fill="url(#o176)"/><rect x="1228.2" y="398" width="405.2" height="2" fill="url(#o177)"/><rect x="1229.4" y="400" width="396.9" height="2" fill="url(#o178)"/><rect x="1230.5" y="402" width="388.6" height="2" fill="url(#o179)"/><rect x="1231.6" y="404" width="380.3" height="2" fill="url(#o180)"/><rect x="1232.8" y="406" width="372.0" height="2" fill="url(#o181)"/><rect x="1234.0" y="408" width="363.6" height="2" fill="url(#o182)"/><rect x="1235.2" y="410" width="355.3" height="2" fill="url(#o183)"/><rect x="1236.3" y="412" width="346.9" height="2" fill="url(#o184)"/><rect x="1237.5" y="414" width="338.6" height="2" fill="url(#o185)"/><rect x="1238.7" y="416" width="330.2" height="2" fill="url(#o186)"/><rect x="1239.9" y="418" width="321.8" height="2" fill="url(#o187)"/><rect x="1241.2" y="420" width="313.4" height="2" fill="url(#o188)"/><rect x="1242.4" y="422" width="305.1" height="2" fill="url(#o189)"/><rect x="1243.6" y="424" width="296.7" height="2" fill="url(#o190)"/><rect x="1244.9" y="426" width="288.2" height="2" fill="url(#o191)"/><rect x="1246.2" y="428" width="279.8" height="2" fill="url(#o192)"/><rect x="1247.5" y="430" width="271.3" height="2" fill="url(#o193)"/><rect x="1248.8" y="432" width="262.8" height="2" fill="url(#o194)"/><rect x="1250.2" y="434" width="254.3" height="2" fill="url(#o195)"/><rect x="1251.6" y="436" width="245.7" height="2" fill="url(#o196)"/><rect x="1253.0" y="438" width="237.1" height="2" fill="url(#o197)"/><rect x="1254.4" y="440" width="228.5" height="2" fill="url(#o198)"/><rect x="1255.9" y="442" width="219.9" height="2" fill="url(#o199)"/><rect x="1257.4" y="444" width="211.3" height="2" fill="url(#o200)"/><rect x="1258.9" y="446" width="202.6" height="2" fill="url(#o201)"/><rect x="1260.5" y="448" width="193.8" height="2" fill="url(#o202)"/><rect x="1262.1" y="450" width="185.0" height="2" fill="url(#o203)"/><rect x="1263.8" y="452" width="176.2" height="2" fill="url(#o204)"/><rect x="1265.6" y="454" width="167.2" height="2" fill="url(#o205)"/><rect x="1267.4" y="456" width="158.3" height="2" fill="url(#o206)"/><rect x="1269.2" y="458" width="149.3" height="2" fill="url(#o207)"/><rect x="1271.1" y="460" width="140.2" height="2" fill="url(#o208)"/><rect x="1273.1" y="462" width="131.0" height="2" fill="url(#o209)"/><rect x="1275.3" y="464" width="121.7" height="2" fill="url(#o210)"/><rect x="1277.6" y="466" width="112.2" height="2" fill="url(#o211)"/><rect x="1280.0" y="468" width="102.7" height="2" fill="url(#o212)"/><rect x="1282.6" y="470" width="92.9" height="2" fill="url(#o213)"/><rect x="1285.6" y="472" width="82.7" height="2" fill="url(#o214)"/><rect x="1288.7" y="474" width="72.5" height="2" fill="url(#o215)"/><rect x="1292.1" y="476" width="61.9" height="2" fill="url(#o216)"/><rect x="1295.8" y="478" width="51.1" height="2" fill="url(#o217)"/><rect x="1299.6" y="480" width="40.1" height="2" fill="url(#o218)"/><rect x="1303.4" y="482" width="29.1" height="2" fill="url(#o219)"/><rect x="1307.1" y="484" width="18.2" height="2" fill="url(#o220)"/><rect x="1311.9" y="486" width="6.5" height="2" fill="url(#o221)"/></g><g clip-path="url(#clipT)"><path d="M1439.0 314.0L1766.6 308.0L1765.8 337.2Z" fill="url(#i0)"/><path d="M1439.0 314.0L1727.8 323.9L1725.8 349.5Z" fill="url(#i1)"/><path d="M1439.0 314.0L1697.6 336.4L1694.5 359.3Z" fill="url(#i2)"/><path d="M1439.0 314.0L1673.1 346.7L1669.3 367.4Z" fill="url(#i3)"/><path d="M1439.0 314.0L1652.9 355.4L1648.4 374.3Z" fill="url(#i4)"/><path d="M1439.0 314.0L1635.7 362.9L1630.6 380.2Z" fill="url(#i5)"/><path d="M1439.0 314.0L1620.9 369.5L1615.2 385.4Z" fill="url(#i6)"/><path d="M1439.0 314.0L1607.8 375.3L1601.7 390.1Z" fill="url(#i7)"/><path d="M1439.0 314.0L1596.2 380.6L1589.6 394.3Z" fill="url(#i8)"/><path d="M1439.0 314.0L1585.6 385.4L1578.7 398.2Z" fill="url(#i9)"/><path d="M1439.0 314.0L1576.0 389.8L1568.7 401.7Z" fill="url(#i10)"/><path d="M1439.0 314.0L1567.1 393.9L1559.5 405.0Z" fill="url(#i11)"/><path d="M1439.0 314.0L1558.8 397.8L1550.9 408.1Z" fill="url(#i12)"/><path d="M1439.0 314.0L1551.0 401.3L1542.7 411.0Z" fill="url(#i13)"/><path d="M1439.0 314.0L1543.5 404.7L1535.0 413.7Z" fill="url(#i14)"/><path d="M1439.0 314.0L1536.4 407.9L1527.7 416.2Z" fill="url(#i15)"/><path d="M1439.0 314.0L1529.6 411.0L1520.6 418.7Z" fill="url(#i16)"/><path d="M1439.0 314.0L1523.0 413.9L1513.8 421.0Z" fill="url(#i17)"/><path d="M1439.0 314.0L1516.5 416.7L1507.1 423.2Z" fill="url(#i18)"/><path d="M1439.0 314.0L1510.2 419.4L1500.6 425.3Z" fill="url(#i19)"/><path d="M1439.0 314.0L1504.0 422.0L1494.2 427.4Z" fill="url(#i20)"/><path d="M1439.0 314.0L1497.9 424.5L1487.8 429.3Z" fill="url(#i21)"/><path d="M1439.0 314.0L1491.8 427.0L1481.5 431.2Z" fill="url(#i22)"/><path d="M1439.0 314.0L1485.7 429.3L1475.3 433.0Z" fill="url(#i23)"/><path d="M1439.0 314.0L1479.6 431.6L1469.0 434.8Z" fill="url(#i24)"/><path d="M1439.0 314.0L1473.5 433.9L1462.7 436.5Z" fill="url(#i25)"/><path d="M1439.0 314.0L1467.3 436.1L1456.3 438.2Z" fill="url(#i26)"/><path d="M1439.0 314.0L1461.0 438.4L1449.9 439.8Z" fill="url(#i27)"/><path d="M1439.0 314.0L1454.7 440.5L1443.3 441.4Z" fill="url(#i28)"/><path d="M1439.0 314.0L1448.1 442.7L1436.6 443.0Z" fill="url(#i29)"/><path d="M1439.0 314.0L1441.4 445.0L1429.8 444.6Z" fill="url(#i30)"/><path d="M1439.0 314.0L1434.5 447.2L1422.7 446.3Z" fill="url(#i31)"/><path d="M1439.0 314.0L1427.3 449.5L1415.3 447.9Z" fill="url(#i32)"/><path d="M1439.0 314.0L1419.8 451.8L1407.6 449.6Z" fill="url(#i33)"/><path d="M1439.0 314.0L1411.9 454.3L1399.5 451.3Z" fill="url(#i34)"/><path d="M1439.0 314.0L1403.5 456.8L1391.0 453.1Z" fill="url(#i35)"/><path d="M1439.0 314.0L1394.7 459.6L1381.9 455.0Z" fill="url(#i36)"/><path d="M1439.0 314.0L1385.1 462.5L1372.1 457.1Z" fill="url(#i37)"/><path d="M1439.0 314.0L1374.8 465.7L1361.6 459.4Z" fill="url(#i38)"/><path d="M1439.0 314.0L1363.5 469.2L1350.0 461.9Z" fill="url(#i39)"/><path d="M1439.0 314.0L1351.0 473.1L1337.2 464.7Z" fill="url(#i40)"/><path d="M1439.0 314.0L1337.0 477.6L1322.9 467.9Z" fill="url(#i41)"/><path d="M1439.0 314.0L1321.1 482.7L1306.6 471.6Z" fill="url(#i42)"/><path d="M1439.0 314.0L1302.7 488.8L1287.7 476.0Z" fill="url(#i43)"/><path d="M1439.0 314.0L1281.0 496.1L1265.5 481.3Z" fill="url(#i44)"/><path d="M1439.0 314.0L1272.3 487.0L1257.6 471.5Z" fill="url(#i45)"/><path d="M1439.0 314.0L1282.0 460.7L1269.6 446.2Z" fill="url(#i46)"/><path d="M1439.0 314.0L1289.6 439.6L1279.1 425.8Z" fill="url(#i47)"/><path d="M1439.0 314.0L1295.8 422.2L1286.7 409.0Z" fill="url(#i48)"/><path d="M1439.0 314.0L1300.9 407.4L1293.1 394.8Z" fill="url(#i49)"/><path d="M1439.0 314.0L1305.2 394.6L1298.5 382.4Z" fill="url(#i50)"/><path d="M1439.0 314.0L1308.9 383.4L1303.2 371.5Z" fill="url(#i51)"/><path d="M1439.0 314.0L1312.1 373.3L1307.4 361.8Z" fill="url(#i52)"/><path d="M1439.0 314.0L1315.0 364.3L1311.1 353.0Z" fill="url(#i53)"/><path d="M1439.0 314.0L1317.7 355.9L1314.4 345.0Z" fill="url(#i54)"/><path d="M1439.0 314.0L1320.1 348.3L1317.5 337.5Z" fill="url(#i55)"/><path d="M1439.0 314.0L1322.3 341.1L1320.4 330.6Z" fill="url(#i56)"/><path d="M1439.0 314.0L1324.5 334.3L1323.1 324.1Z" fill="url(#i57)"/><path d="M1439.0 314.0L1326.5 328.0L1325.7 317.9Z" fill="url(#i58)"/><path d="M1439.0 314.0L1328.5 321.9L1328.2 312.0Z" fill="url(#i59)"/><path d="M1439.0 314.0L1330.4 316.0L1330.6 306.4Z" fill="url(#i60)"/><path d="M1439.0 314.0L1332.3 310.4L1333.0 300.9Z" fill="url(#i61)"/><path d="M1439.0 314.0L1334.1 305.0L1335.3 295.7Z" fill="url(#i62)"/><path d="M1439.0 314.0L1336.0 299.7L1337.7 290.6Z" fill="url(#i63)"/><path d="M1439.0 314.0L1337.9 294.5L1340.0 285.6Z" fill="url(#i64)"/><path d="M1439.0 314.0L1339.7 289.4L1342.3 280.7Z" fill="url(#i65)"/><path d="M1439.0 314.0L1341.7 284.4L1344.7 275.8Z" fill="url(#i66)"/><path d="M1439.0 314.0L1343.6 279.4L1347.1 271.1Z" fill="url(#i67)"/><path d="M1439.0 314.0L1345.6 274.5L1349.5 266.3Z" fill="url(#i68)"/><path d="M1439.0 314.0L1347.7 269.6L1352.0 261.6Z" fill="url(#i69)"/><path d="M1439.0 314.0L1349.8 264.7L1354.5 256.9Z" fill="url(#i70)"/><path d="M1439.0 314.0L1351.9 259.7L1357.1 252.2Z" fill="url(#i71)"/><path d="M1439.0 314.0L1354.2 254.8L1359.8 247.5Z" fill="url(#i72)"/><path d="M1439.0 314.0L1356.5 249.7L1362.6 242.7Z" fill="url(#i73)"/><path d="M1439.0 314.0L1359.0 244.6L1365.5 237.8Z" fill="url(#i74)"/><path d="M1439.0 314.0L1361.5 239.3L1368.5 232.7Z" fill="url(#i75)"/><path d="M1439.0 314.0L1364.2 233.9L1371.6 227.6Z" fill="url(#i76)"/><path d="M1439.0 314.0L1367.0 228.3L1374.9 222.3Z" fill="url(#i77)"/><path d="M1439.0 314.0L1369.9 222.5L1378.3 216.7Z" fill="url(#i78)"/><path d="M1439.0 314.0L1373.0 216.4L1382.0 210.9Z" fill="url(#i79)"/><path d="M1439.0 314.0L1376.3 209.9L1385.8 204.7Z" fill="url(#i80)"/><path d="M1439.0 314.0L1379.8 203.0L1389.9 198.2Z" fill="url(#i81)"/><path d="M1439.0 314.0L1383.6 195.6L1394.4 191.1Z" fill="url(#i82)"/><path d="M1439.0 314.0L1387.7 187.4L1399.2 183.4Z" fill="url(#i83)"/><path d="M1439.0 314.0L1392.2 178.5L1404.4 174.9Z" fill="url(#i84)"/><path d="M1439.0 314.0L1397.2 168.6L1410.3 165.4Z" fill="url(#i85)"/><path d="M1439.0 314.0L1402.7 157.3L1416.8 154.7Z" fill="url(#i86)"/><path d="M1439.0 314.0L1408.9 144.3L1424.1 142.3Z" fill="url(#i87)"/><path d="M1439.0 314.0L1416.1 129.1L1432.7 127.8Z" fill="url(#i88)"/><path d="M1439.0 314.0L1426.2 132.5L1442.3 132.1Z" fill="url(#i89)"/><path d="M1439.0 314.0L1435.7 136.1L1451.6 136.5Z" fill="url(#i90)"/><path d="M1439.0 314.0L1445.0 139.5L1460.4 140.8Z" fill="url(#i91)"/><path d="M1439.0 314.0L1453.8 142.9L1469.0 144.9Z" fill="url(#i92)"/><path d="M1439.0 314.0L1462.4 146.2L1477.3 149.0Z" fill="url(#i93)"/><path d="M1439.0 314.0L1470.8 149.5L1485.3 153.0Z" fill="url(#i94)"/><path d="M1439.0 314.0L1479.1 152.8L1493.2 157.0Z" fill="url(#i95)"/><path d="M1439.0 314.0L1487.1 156.1L1501.0 161.0Z" fill="url(#i96)"/><path d="M1439.0 314.0L1495.1 159.4L1508.7 165.0Z" fill="url(#i97)"/><path d="M1439.0 314.0L1503.1 162.7L1516.3 169.0Z" fill="url(#i98)"/><path d="M1439.0 314.0L1511.0 166.1L1523.9 173.1Z" fill="url(#i99)"/><path d="M1439.0 314.0L1518.9 169.6L1531.5 177.2Z" fill="url(#i100)"/><path d="M1439.0 314.0L1526.9 173.1L1539.1 181.5Z" fill="url(#i101)"/><path d="M1439.0 314.0L1535.0 176.7L1546.8 185.8Z" fill="url(#i102)"/><path d="M1439.0 314.0L1543.2 180.5L1554.6 190.3Z" fill="url(#i103)"/><path d="M1439.0 314.0L1551.6 184.3L1562.6 194.9Z" fill="url(#i104)"/><path d="M1439.0 314.0L1560.2 188.4L1570.9 199.6Z" fill="url(#i105)"/><path d="M1439.0 314.0L1569.0 192.6L1579.3 204.6Z" fill="url(#i106)"/><path d="M1439.0 314.0L1578.3 197.0L1588.1 209.8Z" fill="url(#i107)"/><path d="M1439.0 314.0L1587.9 201.6L1597.3 215.3Z" fill="url(#i108)"/><path d="M1439.0 314.0L1598.1 206.5L1607.1 221.1Z" fill="url(#i109)"/><path d="M1439.0 314.0L1608.9 211.7L1617.4 227.3Z" fill="url(#i110)"/><path d="M1439.0 314.0L1620.5 217.3L1628.4 233.9Z" fill="url(#i111)"/><path d="M1439.0 314.0L1633.0 223.4L1640.3 241.0Z" fill="url(#i112)"/><path d="M1439.0 314.0L1646.6 229.9L1653.3 248.7Z" fill="url(#i113)"/><path d="M1439.0 314.0L1661.7 237.1L1667.7 257.2Z" fill="url(#i114)"/><path d="M1439.0 314.0L1678.5 245.1L1683.7 266.7Z" fill="url(#i115)"/><path d="M1439.0 314.0L1697.6 254.1L1701.9 277.3Z" fill="url(#i116)"/><path d="M1439.0 314.0L1719.5 264.3L1722.8 289.5Z" fill="url(#i117)"/><path d="M1439.0 314.0L1745.1 276.2L1747.3 303.5Z" fill="url(#i118)"/><path d="M1439.0 314.0L1775.8 290.2L1776.6 320.2Z" fill="url(#i119)"/></g></svg>
<div class="t" style="left:1156.30px;top:482.18px;font-size:13.50px;color:#cfcfcf;-webkit-text-stroke:0.45px #cfcfcf;transform:translateX(-100%);transform-origin:right top;">0</div>
<div class="t" style="left:1156.30px;top:428.88px;font-size:13.50px;color:#cfcfcf;-webkit-text-stroke:0.45px #cfcfcf;transform:translateX(-100%) scaleX(1.1722);transform-origin:right top;">0.1</div>
<div class="t" style="left:1156.30px;top:375.58px;font-size:13.50px;color:#cfcfcf;-webkit-text-stroke:0.45px #cfcfcf;transform:translateX(-100%) scaleX(1.1722);transform-origin:right top;">0.2</div>
<div class="t" style="left:1156.30px;top:322.28px;font-size:13.50px;color:#cfcfcf;-webkit-text-stroke:0.45px #cfcfcf;transform:translateX(-100%) scaleX(1.1722);transform-origin:right top;">0.3</div>
<div class="t" style="left:1156.30px;top:268.98px;font-size:13.50px;color:#cfcfcf;-webkit-text-stroke:0.45px #cfcfcf;transform:translateX(-100%) scaleX(1.1722);transform-origin:right top;">0.4</div>
<div class="t" style="left:1156.30px;top:215.68px;font-size:13.50px;color:#cfcfcf;-webkit-text-stroke:0.45px #cfcfcf;transform:translateX(-100%) scaleX(1.1722);transform-origin:right top;">0.5</div>
<div class="t" style="left:1156.30px;top:162.38px;font-size:13.50px;color:#cfcfcf;-webkit-text-stroke:0.45px #cfcfcf;transform:translateX(-100%) scaleX(1.1722);transform-origin:right top;">0.6</div>
<div class="t" style="left:1156.30px;top:109.08px;font-size:13.50px;color:#cfcfcf;-webkit-text-stroke:0.45px #cfcfcf;transform:translateX(-100%) scaleX(1.1722);transform-origin:right top;">0.7</div>
<div class="t" style="left:1156.30px;top:55.78px;font-size:13.50px;color:#cfcfcf;-webkit-text-stroke:0.45px #cfcfcf;transform:translateX(-100%) scaleX(1.1722);transform-origin:right top;">0.8</div>
<div class="t" style="left:1161.80px;top:496.78px;font-size:13.50px;color:#cfcfcf;-webkit-text-stroke:0.45px #cfcfcf;transform:translateX(-50%);transform-origin:center top;">0</div>
<div class="t" style="left:1250.45px;top:496.78px;font-size:13.50px;color:#cfcfcf;-webkit-text-stroke:0.45px #cfcfcf;transform:translateX(-50%) scaleX(1.1722);transform-origin:center top;">0.1</div>
<div class="t" style="left:1339.10px;top:496.78px;font-size:13.50px;color:#cfcfcf;-webkit-text-stroke:0.45px #cfcfcf;transform:translateX(-50%) scaleX(1.1722);transform-origin:center top;">0.2</div>
<div class="t" style="left:1427.75px;top:496.78px;font-size:13.50px;color:#cfcfcf;-webkit-text-stroke:0.45px #cfcfcf;transform:translateX(-50%) scaleX(1.1722);transform-origin:center top;">0.3</div>
<div class="t" style="left:1516.40px;top:496.78px;font-size:13.50px;color:#cfcfcf;-webkit-text-stroke:0.45px #cfcfcf;transform:translateX(-50%) scaleX(1.1722);transform-origin:center top;">0.4</div>
<div class="t" style="left:1605.05px;top:496.78px;font-size:13.50px;color:#cfcfcf;-webkit-text-stroke:0.45px #cfcfcf;transform:translateX(-50%) scaleX(1.1722);transform-origin:center top;">0.5</div>
<div class="t" style="left:1693.70px;top:496.78px;font-size:13.50px;color:#cfcfcf;-webkit-text-stroke:0.45px #cfcfcf;transform:translateX(-50%) scaleX(1.1722);transform-origin:center top;">0.6</div>
<div class="t" style="left:1782.35px;top:496.78px;font-size:13.50px;color:#cfcfcf;-webkit-text-stroke:0.45px #cfcfcf;transform:translateX(-50%) scaleX(1.1722);transform-origin:center top;">0.7</div>
<div class="t" style="left:1871.00px;top:496.78px;font-size:13.50px;color:#cfcfcf;-webkit-text-stroke:0.45px #cfcfcf;transform:translateX(-50%) scaleX(1.1722);transform-origin:center top;">0.8</div>
<svg width="1920" height="832" style="z-index:1"><line x1="1156.30" y1="489.40" x2="1162.30" y2="489.40" stroke="#8a8a8a" stroke-width="1.60"/><line x1="1156.30" y1="436.10" x2="1162.30" y2="436.10" stroke="#8a8a8a" stroke-width="1.60"/><line x1="1156.30" y1="382.80" x2="1162.30" y2="382.80" stroke="#8a8a8a" stroke-width="1.60"/><line x1="1156.30" y1="329.50" x2="1162.30" y2="329.50" stroke="#8a8a8a" stroke-width="1.60"/><line x1="1156.30" y1="276.20" x2="1162.30" y2="276.20" stroke="#8a8a8a" stroke-width="1.60"/><line x1="1156.30" y1="222.90" x2="1162.30" y2="222.90" stroke="#8a8a8a" stroke-width="1.60"/><line x1="1156.30" y1="169.60" x2="1162.30" y2="169.60" stroke="#8a8a8a" stroke-width="1.60"/><line x1="1156.30" y1="116.30" x2="1162.30" y2="116.30" stroke="#8a8a8a" stroke-width="1.60"/><line x1="1156.30" y1="63.00" x2="1162.30" y2="63.00" stroke="#8a8a8a" stroke-width="1.60"/><line x1="1161.80" y1="489.40" x2="1161.80" y2="495.40" stroke="#8a8a8a" stroke-width="1.60"/><line x1="1250.45" y1="489.40" x2="1250.45" y2="495.40" stroke="#8a8a8a" stroke-width="1.60"/><line x1="1339.10" y1="489.40" x2="1339.10" y2="495.40" stroke="#8a8a8a" stroke-width="1.60"/><line x1="1427.75" y1="489.40" x2="1427.75" y2="495.40" stroke="#8a8a8a" stroke-width="1.60"/><line x1="1516.40" y1="489.40" x2="1516.40" y2="495.40" stroke="#8a8a8a" stroke-width="1.60"/><line x1="1605.05" y1="489.40" x2="1605.05" y2="495.40" stroke="#8a8a8a" stroke-width="1.60"/><line x1="1693.70" y1="489.40" x2="1693.70" y2="495.40" stroke="#8a8a8a" stroke-width="1.60"/><line x1="1782.35" y1="489.40" x2="1782.35" y2="495.40" stroke="#8a8a8a" stroke-width="1.60"/><line x1="1871.00" y1="489.40" x2="1871.00" y2="495.40" stroke="#8a8a8a" stroke-width="1.60"/><rect x="1162.30" y="40.60" width="744.80" height="448.80" fill="none" stroke="#9a9a9a" stroke-width="1.6"/></svg>
<svg width="1920" height="832" style="z-index:2"><rect x="1420.2" y="163.6" width="15" height="12" fill="none" stroke="#e8e8e8" stroke-width="2"/><rect x="1526.0" y="214.1" width="15" height="12" fill="none" stroke="#e8e8e8" stroke-width="2"/><rect x="1721.7" y="307.5" width="15" height="12" fill="none" stroke="#e8e8e8" stroke-width="2"/><rect x="1353.4" y="308.2" width="15" height="12" fill="none" stroke="#e8e8e8" stroke-width="2"/><rect x="1438.8" y="401.2" width="15" height="12" fill="none" stroke="#e8e8e8" stroke-width="2"/><rect x="1287.3" y="451.4" width="15" height="12" fill="none" stroke="#e8e8e8" stroke-width="2"/><ellipse cx="1437.1" cy="169.5" rx="5.6" ry="4.4" fill="none" stroke="#1a1a1a" stroke-width="1.5"/><ellipse cx="1530.0" cy="216.1" rx="5.6" ry="4.4" fill="none" stroke="#1a1a1a" stroke-width="1.5"/><ellipse cx="1721.7" cy="318.0" rx="5.6" ry="4.4" fill="none" stroke="#1a1a1a" stroke-width="1.5"/><ellipse cx="1375.0" cy="302.1" rx="5.6" ry="4.4" fill="none" stroke="#1a1a1a" stroke-width="1.5"/><ellipse cx="1464.7" cy="407.4" rx="5.6" ry="4.4" fill="none" stroke="#1a1a1a" stroke-width="1.5"/><ellipse cx="1298.9" cy="465.0" rx="5.6" ry="4.4" fill="none" stroke="#1a1a1a" stroke-width="1.5"/><rect x="1431.0" y="307.0" width="16.5" height="12.5" fill="#f4f4f4" stroke="#1a1a1a" stroke-width="2.2"/><ellipse cx="1438.7" cy="311.2" rx="5" ry="3.8" fill="#ffffff" stroke="#1a1a1a" stroke-width="1.8"/></svg>
<div class="r" style="left:1646.50px;top:45.50px;width:255.00px;height:171.00px;background:#6a6a6a;z-index:2;"></div>
<svg width="1920" height="832" style="z-index:3"><defs><linearGradient id="s0"><stop offset="0.000" stop-color="#5fffd9"/><stop offset="0.125" stop-color="#82ffd7"/><stop offset="0.250" stop-color="#a0ffd6"/><stop offset="0.375" stop-color="#bcffd4"/><stop offset="0.500" stop-color="#d6ffd3"/><stop offset="0.625" stop-color="#f0ffd1"/><stop offset="0.750" stop-color="#fff5c7"/><stop offset="0.875" stop-color="#ffe0b4"/><stop offset="1.000" stop-color="#ffcea5"/></linearGradient><linearGradient id="s1"><stop offset="0.000" stop-color="#60ffda"/><stop offset="0.125" stop-color="#83ffd9"/><stop offset="0.250" stop-color="#a1ffd7"/><stop offset="0.375" stop-color="#bdffd6"/><stop offset="0.500" stop-color="#d7ffd4"/><stop offset="0.625" stop-color="#f1ffd2"/><stop offset="0.750" stop-color="#fff4c7"/><stop offset="0.875" stop-color="#ffdeb5"/><stop offset="1.000" stop-color="#ffcda5"/></linearGradient><linearGradient id="s2"><stop offset="0.000" stop-color="#61ffdb"/><stop offset="0.125" stop-color="#84ffda"/><stop offset="0.250" stop-color="#a2ffd9"/><stop offset="0.375" stop-color="#beffd7"/><stop offset="0.500" stop-color="#d9ffd5"/><stop offset="0.625" stop-color="#f3ffd4"/><stop offset="0.750" stop-color="#fff2c7"/><stop offset="0.875" stop-color="#ffddb5"/><stop offset="1.000" stop-color="#ffcca6"/></linearGradient><linearGradient id="s3"><stop offset="0.000" stop-color="#63ffdd"/><stop offset="0.125" stop-color="#86ffdb"/><stop offset="0.250" stop-color="#a4ffda"/><stop offset="0.375" stop-color="#bfffd8"/><stop offset="0.500" stop-color="#daffd7"/><stop offset="0.625" stop-color="#f4ffd5"/><stop offset="0.750" stop-color="#fff1c8"/><stop offset="0.875" stop-color="#ffdcb5"/><stop offset="1.000" stop-color="#ffcba6"/></linearGradient><linearGradient id="s4"><stop offset="0.000" stop-color="#64ffde"/><stop offset="0.125" stop-color="#87ffdd"/><stop offset="0.250" stop-color="#a5ffdb"/><stop offset="0.375" stop-color="#c1ffda"/><stop offset="0.500" stop-color="#dbffd8"/><stop offset="0.625" stop-color="#f6ffd7"/><stop offset="0.750" stop-color="#ffefc8"/><stop offset="0.875" stop-color="#ffdbb6"/><stop offset="1.000" stop-color="#ffcaa6"/></linearGradient><linearGradient id="s5"><stop offset="0.000" stop-color="#65ffdf"/><stop offset="0.125" stop-color="#88ffde"/><stop offset="0.250" stop-color="#a6ffdd"/><stop offset="0.375" stop-color="#c2ffdb"/><stop offset="0.500" stop-color="#ddffda"/><stop offset="0.625" stop-color="#f7ffd8"/><stop offset="0.750" stop-color="#ffeec9"/><stop offset="0.875" stop-color="#ffd9b6"/><stop offset="1.000" stop-color="#ffc8a7"/></linearGradient><linearGradient id="s6"><stop offset="0.000" stop-color="#66ffe0"/><stop offset="0.125" stop-color="#89ffdf"/><stop offset="0.250" stop-color="#a7ffde"/><stop offset="0.375" stop-color="#c3ffdd"/><stop offset="0.500" stop-color="#deffdb"/><stop offset="0.625" stop-color="#f9ffda"/><stop offset="0.750" stop-color="#ffedc9"/><stop offset="0.875" stop-color="#ffd8b7"/><stop offset="1.000" stop-color="#ffc7a7"/></linearGradient><linearGradient id="s7"><stop offset="0.000" stop-color="#68ffe2"/><stop offset="0.125" stop-color="#8affe1"/><stop offset="0.250" stop-color="#a8ffdf"/><stop offset="0.375" stop-color="#c4ffde"/><stop offset="0.500" stop-color="#dfffdd"/><stop offset="0.625" stop-color="#faffdb"/><stop offset="0.750" stop-color="#ffebc9"/><stop offset="0.875" stop-color="#ffd7b7"/><stop offset="1.000" stop-color="#ffc6a8"/></linearGradient><linearGradient id="s8"><stop offset="0.000" stop-color="#69ffe3"/><stop offset="0.125" stop-color="#8bffe2"/><stop offset="0.250" stop-color="#aaffe1"/><stop offset="0.375" stop-color="#c6ffe0"/><stop offset="0.500" stop-color="#e1ffde"/><stop offset="0.625" stop-color="#fcffdd"/><stop offset="0.750" stop-color="#ffeaca"/><stop offset="0.875" stop-color="#ffd6b7"/><stop offset="1.000" stop-color="#ffc5a8"/></linearGradient><linearGradient id="s9"><stop offset="0.000" stop-color="#6affe4"/><stop offset="0.125" stop-color="#8dffe3"/><stop offset="0.250" stop-color="#abffe2"/><stop offset="0.375" stop-color="#c7ffe1"/><stop offset="0.500" stop-color="#e2ffe0"/><stop offset="0.625" stop-color="#fdffde"/><stop offset="0.750" stop-color="#ffe8ca"/><stop offset="0.875" stop-color="#ffd5b8"/><stop offset="1.000" stop-color="#ffc4a9"/></linearGradient><linearGradient id="s10"><stop offset="0.000" stop-color="#6bffe6"/><stop offset="0.125" stop-color="#8effe5"/><stop offset="0.250" stop-color="#acffe4"/><stop offset="0.375" stop-color="#c8ffe3"/><stop offset="0.500" stop-color="#e4ffe1"/><stop offset="0.625" stop-color="#ffffe0"/><stop offset="0.750" stop-color="#ffe7ca"/><stop offset="0.875" stop-color="#ffd3b8"/><stop offset="1.000" stop-color="#ffc3a9"/></linearGradient><linearGradient id="s11"><stop offset="0.000" stop-color="#6cffe7"/><stop offset="0.125" stop-color="#8fffe6"/><stop offset="0.250" stop-color="#adffe5"/><stop offset="0.375" stop-color="#caffe4"/><stop offset="0.500" stop-color="#e5ffe3"/><stop offset="0.625" stop-color="#fffee1"/><stop offset="0.750" stop-color="#ffe6cb"/><stop offset="0.875" stop-color="#ffd2b9"/><stop offset="1.000" stop-color="#ffc2a9"/></linearGradient><linearGradient id="s12"><stop offset="0.000" stop-color="#6effe8"/><stop offset="0.125" stop-color="#90ffe7"/><stop offset="0.250" stop-color="#aeffe7"/><stop offset="0.375" stop-color="#cbffe6"/><stop offset="0.500" stop-color="#e6ffe4"/><stop offset="0.625" stop-color="#fffce1"/><stop offset="0.750" stop-color="#ffe4cb"/><stop offset="0.875" stop-color="#ffd1b9"/><stop offset="1.000" stop-color="#ffc1aa"/></linearGradient><linearGradient id="s13"><stop offset="0.000" stop-color="#6fffea"/><stop offset="0.125" stop-color="#91ffe9"/><stop offset="0.250" stop-color="#b0ffe8"/><stop offset="0.375" stop-color="#ccffe7"/><stop offset="0.500" stop-color="#e8ffe6"/><stop offset="0.625" stop-color="#fffbe1"/><stop offset="0.750" stop-color="#ffe3cb"/><stop offset="0.875" stop-color="#ffd0b9"/><stop offset="1.000" stop-color="#ffc0aa"/></linearGradient><linearGradient id="s14"><stop offset="0.000" stop-color="#70ffeb"/><stop offset="0.125" stop-color="#93ffea"/><stop offset="0.250" stop-color="#b1ffe9"/><stop offset="0.375" stop-color="#ceffe9"/><stop offset="0.500" stop-color="#e9ffe8"/><stop offset="0.625" stop-color="#fff9e1"/><stop offset="0.750" stop-color="#ffe2cc"/><stop offset="0.875" stop-color="#ffcfba"/><stop offset="1.000" stop-color="#ffbeab"/></linearGradient><linearGradient id="s15"><stop offset="0.000" stop-color="#71ffec"/><stop offset="0.125" stop-color="#94ffec"/><stop offset="0.250" stop-color="#b2ffeb"/><stop offset="0.375" stop-color="#cfffea"/><stop offset="0.500" stop-color="#ebffe9"/><stop offset="0.625" stop-color="#fff8e2"/><stop offset="0.750" stop-color="#ffe0cc"/><stop offset="0.875" stop-color="#ffcdba"/><stop offset="1.000" stop-color="#ffbdab"/></linearGradient><linearGradient id="s16"><stop offset="0.000" stop-color="#73ffee"/><stop offset="0.125" stop-color="#95ffed"/><stop offset="0.250" stop-color="#b4ffec"/><stop offset="0.375" stop-color="#d0ffec"/><stop offset="0.500" stop-color="#ecffeb"/><stop offset="0.625" stop-color="#fff6e2"/><stop offset="0.750" stop-color="#ffdfcc"/><stop offset="0.875" stop-color="#ffccba"/><stop offset="1.000" stop-color="#ffbcab"/></linearGradient><linearGradient id="s17"><stop offset="0.000" stop-color="#74ffef"/><stop offset="0.125" stop-color="#96ffef"/><stop offset="0.250" stop-color="#b5ffee"/><stop offset="0.375" stop-color="#d2ffed"/><stop offset="0.500" stop-color="#eeffed"/><stop offset="0.625" stop-color="#fff5e2"/><stop offset="0.750" stop-color="#ffdecd"/><stop offset="0.875" stop-color="#ffcbbb"/><stop offset="1.000" stop-color="#ffbbac"/></linearGradient><linearGradient id="s18"><stop offset="0.000" stop-color="#75fff1"/><stop offset="0.125" stop-color="#97fff0"/><stop offset="0.250" stop-color="#b6fff0"/><stop offset="0.375" stop-color="#d3ffef"/><stop offset="0.500" stop-color="#efffee"/><stop offset="0.625" stop-color="#fff3e2"/><stop offset="0.750" stop-color="#ffdccd"/><stop offset="0.875" stop-color="#ffcabb"/><stop offset="1.000" stop-color="#ffbaac"/></linearGradient><linearGradient id="s19"><stop offset="0.000" stop-color="#77fff2"/><stop offset="0.125" stop-color="#99fff2"/><stop offset="0.250" stop-color="#b7fff1"/><stop offset="0.375" stop-color="#d5fff0"/><stop offset="0.500" stop-color="#f1fff0"/><stop offset="0.625" stop-color="#fff2e3"/><stop offset="0.750" stop-color="#ffdbcd"/><stop offset="0.875" stop-color="#ffc9bc"/><stop offset="1.000" stop-color="#ffb9ad"/></linearGradient><linearGradient id="s20"><stop offset="0.000" stop-color="#78fff3"/><stop offset="0.125" stop-color="#9afff3"/><stop offset="0.250" stop-color="#b9fff3"/><stop offset="0.375" stop-color="#d6fff2"/><stop offset="0.500" stop-color="#f3fff2"/><stop offset="0.625" stop-color="#fff0e3"/><stop offset="0.750" stop-color="#ffdace"/><stop offset="0.875" stop-color="#ffc7bc"/><stop offset="1.000" stop-color="#ffb8ad"/></linearGradient><linearGradient id="s21"><stop offset="0.000" stop-color="#79fff5"/><stop offset="0.125" stop-color="#9bfff5"/><stop offset="0.250" stop-color="#bafff4"/><stop offset="0.375" stop-color="#d7fff4"/><stop offset="0.500" stop-color="#f4fff3"/><stop offset="0.625" stop-color="#ffefe3"/><stop offset="0.750" stop-color="#ffd8ce"/><stop offset="0.875" stop-color="#ffc6bc"/><stop offset="1.000" stop-color="#ffb7ad"/></linearGradient><linearGradient id="s22"><stop offset="0.000" stop-color="#7afff6"/><stop offset="0.125" stop-color="#9dfff6"/><stop offset="0.250" stop-color="#bbfff6"/><stop offset="0.375" stop-color="#d9fff5"/><stop offset="0.500" stop-color="#f6fff5"/><stop offset="0.625" stop-color="#ffede3"/><stop offset="0.750" stop-color="#ffd7ce"/><stop offset="0.875" stop-color="#ffc5bd"/><stop offset="1.000" stop-color="#ffb6ae"/></linearGradient><linearGradient id="s23"><stop offset="0.000" stop-color="#7cfff8"/><stop offset="0.125" stop-color="#9efff8"/><stop offset="0.250" stop-color="#bdfff7"/><stop offset="0.375" stop-color="#dafff7"/><stop offset="0.500" stop-color="#f7fff7"/><stop offset="0.625" stop-color="#ffece4"/><stop offset="0.750" stop-color="#ffd6ce"/><stop offset="0.875" stop-color="#ffc4bd"/><stop offset="1.000" stop-color="#ffb5ae"/></linearGradient><linearGradient id="s24"><stop offset="0.000" stop-color="#7dfff9"/><stop offset="0.125" stop-color="#9ffff9"/><stop offset="0.250" stop-color="#befff9"/><stop offset="0.375" stop-color="#dcfff9"/><stop offset="0.500" stop-color="#f9fff9"/><stop offset="0.625" stop-color="#ffeae4"/><stop offset="0.750" stop-color="#ffd4cf"/><stop offset="0.875" stop-color="#ffc3bd"/><stop offset="1.000" stop-color="#ffb3ae"/></linearGradient><linearGradient id="s25"><stop offset="0.000" stop-color="#7efffb"/><stop offset="0.125" stop-color="#a0fffb"/><stop offset="0.250" stop-color="#c0fffb"/><stop offset="0.375" stop-color="#ddfffa"/><stop offset="0.500" stop-color="#fbfffa"/><stop offset="0.625" stop-color="#ffe9e4"/><stop offset="0.750" stop-color="#ffd3cf"/><stop offset="0.875" stop-color="#ffc1be"/><stop offset="1.000" stop-color="#ffb2af"/></linearGradient><linearGradient id="s26"><stop offset="0.000" stop-color="#7ffffc"/><stop offset="0.125" stop-color="#a2fffc"/><stop offset="0.250" stop-color="#c1fffc"/><stop offset="0.375" stop-color="#dffffc"/><stop offset="0.500" stop-color="#fcfffc"/><stop offset="0.625" stop-color="#ffe7e4"/><stop offset="0.750" stop-color="#ffd2cf"/><stop offset="0.875" stop-color="#ffc0be"/><stop offset="1.000" stop-color="#ffb1af"/></linearGradient><linearGradient id="s27"><stop offset="0.000" stop-color="#81fffe"/><stop offset="0.125" stop-color="#a3fffe"/><stop offset="0.250" stop-color="#c2fffe"/><stop offset="0.375" stop-color="#e0fffe"/><stop offset="0.500" stop-color="#fefffe"/><stop offset="0.625" stop-color="#ffe6e5"/><stop offset="0.750" stop-color="#ffd0d0"/><stop offset="0.875" stop-color="#ffbfbe"/><stop offset="1.000" stop-color="#ffb0b0"/></linearGradient><linearGradient id="s28"><stop offset="0.000" stop-color="#82ffff"/><stop offset="0.125" stop-color="#a4feff"/><stop offset="0.250" stop-color="#c3feff"/><stop offset="0.375" stop-color="#e1feff"/><stop offset="0.500" stop-color="#fffeff"/><stop offset="0.625" stop-color="#ffe4e5"/><stop offset="0.750" stop-color="#ffcfd0"/><stop offset="0.875" stop-color="#ffbebf"/><stop offset="1.000" stop-color="#ffafb0"/></linearGradient><linearGradient id="s29"><stop offset="0.000" stop-color="#82fdff"/><stop offset="0.125" stop-color="#a4fdff"/><stop offset="0.250" stop-color="#c4fdff"/><stop offset="0.375" stop-color="#e1fdff"/><stop offset="0.500" stop-color="#fffcff"/><stop offset="0.625" stop-color="#ffe3e5"/><stop offset="0.750" stop-color="#ffced0"/><stop offset="0.875" stop-color="#ffbdbf"/><stop offset="1.000" stop-color="#ffaeb0"/></linearGradient><linearGradient id="s30"><stop offset="0.000" stop-color="#83fbff"/><stop offset="0.125" stop-color="#a5fbff"/><stop offset="0.250" stop-color="#c4fbff"/><stop offset="0.375" stop-color="#e1fbff"/><stop offset="0.500" stop-color="#fffbff"/><stop offset="0.625" stop-color="#ffe1e5"/><stop offset="0.750" stop-color="#ffcdd1"/><stop offset="0.875" stop-color="#ffbbbf"/><stop offset="1.000" stop-color="#ffadb1"/></linearGradient><linearGradient id="s31"><stop offset="0.000" stop-color="#84faff"/><stop offset="0.125" stop-color="#a5faff"/><stop offset="0.250" stop-color="#c4f9ff"/><stop offset="0.375" stop-color="#e1f9ff"/><stop offset="0.500" stop-color="#fff9ff"/><stop offset="0.625" stop-color="#ffe0e6"/><stop offset="0.750" stop-color="#ffcbd1"/><stop offset="0.875" stop-color="#ffbac0"/><stop offset="1.000" stop-color="#ffacb1"/></linearGradient><linearGradient id="s32"><stop offset="0.000" stop-color="#84f8ff"/><stop offset="0.125" stop-color="#a6f8ff"/><stop offset="0.250" stop-color="#c4f8ff"/><stop offset="0.375" stop-color="#e1f7ff"/><stop offset="0.500" stop-color="#fef7ff"/><stop offset="0.625" stop-color="#ffdee6"/><stop offset="0.750" stop-color="#ffcad1"/><stop offset="0.875" stop-color="#ffb9c0"/><stop offset="1.000" stop-color="#ffabb1"/></linearGradient><linearGradient id="s33"><stop offset="0.000" stop-color="#85f7ff"/><stop offset="0.125" stop-color="#a6f7ff"/><stop offset="0.250" stop-color="#c4f6ff"/><stop offset="0.375" stop-color="#e1f6ff"/><stop offset="0.500" stop-color="#fef5ff"/><stop offset="0.625" stop-color="#ffdde6"/><stop offset="0.750" stop-color="#ffc9d1"/><stop offset="0.875" stop-color="#ffb8c0"/><stop offset="1.000" stop-color="#ffaab2"/></linearGradient><linearGradient id="s34"><stop offset="0.000" stop-color="#86f5ff"/><stop offset="0.125" stop-color="#a6f5ff"/><stop offset="0.250" stop-color="#c5f4ff"/><stop offset="0.375" stop-color="#e2f4ff"/><stop offset="0.500" stop-color="#fef3ff"/><stop offset="0.625" stop-color="#ffdbe6"/><stop offset="0.750" stop-color="#ffc7d2"/><stop offset="0.875" stop-color="#ffb7c1"/><stop offset="1.000" stop-color="#ffa9b2"/></linearGradient><linearGradient id="s35"><stop offset="0.000" stop-color="#86f4ff"/><stop offset="0.125" stop-color="#a7f3ff"/><stop offset="0.250" stop-color="#c5f3ff"/><stop offset="0.375" stop-color="#e2f2ff"/><stop offset="0.500" stop-color="#fef2ff"/><stop offset="0.625" stop-color="#ffdae6"/><stop offset="0.750" stop-color="#ffc6d2"/><stop offset="0.875" stop-color="#ffb6c1"/><stop offset="1.000" stop-color="#ffa7b2"/></linearGradient><linearGradient id="s36"><stop offset="0.000" stop-color="#87f2ff"/><stop offset="0.125" stop-color="#a7f2ff"/><stop offset="0.250" stop-color="#c5f1ff"/><stop offset="0.375" stop-color="#e2f1ff"/><stop offset="0.500" stop-color="#fef0ff"/><stop offset="0.625" stop-color="#ffd9e7"/><stop offset="0.750" stop-color="#ffc5d2"/><stop offset="0.875" stop-color="#ffb4c1"/><stop offset="1.000" stop-color="#ffa6b3"/></linearGradient><linearGradient id="s37"><stop offset="0.000" stop-color="#87f1ff"/><stop offset="0.125" stop-color="#a7f0ff"/><stop offset="0.250" stop-color="#c5f0ff"/><stop offset="0.375" stop-color="#e2efff"/><stop offset="0.500" stop-color="#feeeff"/><stop offset="0.625" stop-color="#ffd7e7"/><stop offset="0.750" stop-color="#ffc4d2"/><stop offset="0.875" stop-color="#ffb3c2"/><stop offset="1.000" stop-color="#ffa5b3"/></linearGradient><linearGradient id="s38"><stop offset="0.000" stop-color="#88efff"/><stop offset="0.125" stop-color="#a8efff"/><stop offset="0.250" stop-color="#c5eeff"/><stop offset="0.375" stop-color="#e2edff"/><stop offset="0.500" stop-color="#feecff"/><stop offset="0.625" stop-color="#ffd6e7"/><stop offset="0.750" stop-color="#ffc2d3"/><stop offset="0.875" stop-color="#ffb2c2"/><stop offset="1.000" stop-color="#ffa4b3"/></linearGradient><linearGradient id="s39"><stop offset="0.000" stop-color="#88eeff"/><stop offset="0.125" stop-color="#a8edff"/><stop offset="0.250" stop-color="#c5ecff"/><stop offset="0.375" stop-color="#e2ecff"/><stop offset="0.500" stop-color="#feebff"/><stop offset="0.625" stop-color="#ffd4e7"/><stop offset="0.750" stop-color="#ffc1d3"/><stop offset="0.875" stop-color="#ffb1c2"/><stop offset="1.000" stop-color="#ffa3b4"/></linearGradient><linearGradient id="s40"><stop offset="0.000" stop-color="#89edff"/><stop offset="0.125" stop-color="#a8ecff"/><stop offset="0.250" stop-color="#c6ebff"/><stop offset="0.375" stop-color="#e2eaff"/><stop offset="0.500" stop-color="#fde9ff"/><stop offset="0.625" stop-color="#ffd3e8"/><stop offset="0.750" stop-color="#ffc0d3"/><stop offset="0.875" stop-color="#ffb0c2"/><stop offset="1.000" stop-color="#ffa2b4"/></linearGradient><linearGradient id="s41"><stop offset="0.000" stop-color="#89ebff"/><stop offset="0.125" stop-color="#a9eaff"/><stop offset="0.250" stop-color="#c6e9ff"/><stop offset="0.375" stop-color="#e2e8ff"/><stop offset="0.500" stop-color="#fde7ff"/><stop offset="0.625" stop-color="#ffd1e8"/><stop offset="0.750" stop-color="#ffbed4"/><stop offset="0.875" stop-color="#ffafc3"/><stop offset="1.000" stop-color="#ffa1b4"/></linearGradient><linearGradient id="s42"><stop offset="0.000" stop-color="#8aeaff"/><stop offset="0.125" stop-color="#a9e9ff"/><stop offset="0.250" stop-color="#c6e8ff"/><stop offset="0.375" stop-color="#e2e7ff"/><stop offset="0.500" stop-color="#fde5ff"/><stop offset="0.625" stop-color="#ffd0e8"/><stop offset="0.750" stop-color="#ffbdd4"/><stop offset="0.875" stop-color="#ffadc3"/><stop offset="1.000" stop-color="#ffa0b5"/></linearGradient><linearGradient id="s43"><stop offset="0.000" stop-color="#8be8ff"/><stop offset="0.125" stop-color="#a9e7ff"/><stop offset="0.250" stop-color="#c6e6ff"/><stop offset="0.375" stop-color="#e2e5ff"/><stop offset="0.500" stop-color="#fde4ff"/><stop offset="0.625" stop-color="#ffcfe8"/><stop offset="0.750" stop-color="#ffbcd4"/><stop offset="0.875" stop-color="#ffacc3"/><stop offset="1.000" stop-color="#ff9fb5"/></linearGradient><linearGradient id="s44"><stop offset="0.000" stop-color="#8be7ff"/><stop offset="0.125" stop-color="#aae6ff"/><stop offset="0.250" stop-color="#c6e5ff"/><stop offset="0.375" stop-color="#e2e3ff"/><stop offset="0.500" stop-color="#fde2ff"/><stop offset="0.625" stop-color="#ffcde8"/><stop offset="0.750" stop-color="#ffbbd4"/><stop offset="0.875" stop-color="#ffabc4"/><stop offset="1.000" stop-color="#ff9eb5"/></linearGradient><linearGradient id="s45"><stop offset="0.000" stop-color="#8ce5ff"/><stop offset="0.125" stop-color="#aae4ff"/><stop offset="0.250" stop-color="#c6e3ff"/><stop offset="0.375" stop-color="#e2e2ff"/><stop offset="0.500" stop-color="#fde0ff"/><stop offset="0.625" stop-color="#ffcce9"/><stop offset="0.750" stop-color="#ffb9d5"/><stop offset="0.875" stop-color="#ffaac4"/><stop offset="1.000" stop-color="#ff9db6"/></linearGradient><linearGradient id="s46"><stop offset="0.000" stop-color="#8ce4ff"/><stop offset="0.125" stop-color="#aae3ff"/><stop offset="0.250" stop-color="#c7e1ff"/><stop offset="0.375" stop-color="#e2e0ff"/><stop offset="0.500" stop-color="#fddfff"/><stop offset="0.625" stop-color="#ffcae9"/><stop offset="0.750" stop-color="#ffb8d5"/><stop offset="0.875" stop-color="#ffa9c4"/><stop offset="1.000" stop-color="#ff9bb6"/></linearGradient><linearGradient id="s47"><stop offset="0.000" stop-color="#8de2ff"/><stop offset="0.125" stop-color="#abe1ff"/><stop offset="0.250" stop-color="#c7e0ff"/><stop offset="0.375" stop-color="#e2dfff"/><stop offset="0.500" stop-color="#fdddff"/><stop offset="0.625" stop-color="#ffc9e9"/><stop offset="0.750" stop-color="#ffb7d5"/><stop offset="0.875" stop-color="#ffa8c4"/><stop offset="1.000" stop-color="#ff9ab6"/></linearGradient><linearGradient id="s48"><stop offset="0.000" stop-color="#8de1ff"/><stop offset="0.125" stop-color="#abe0ff"/><stop offset="0.250" stop-color="#c7deff"/><stop offset="0.375" stop-color="#e2ddff"/><stop offset="0.500" stop-color="#fddbff"/><stop offset="0.625" stop-color="#ffc7e9"/><stop offset="0.750" stop-color="#ffb5d5"/><stop offset="0.875" stop-color="#ffa6c5"/><stop offset="1.000" stop-color="#ff99b7"/></linearGradient><linearGradient id="s49"><stop offset="0.000" stop-color="#8ee0ff"/><stop offset="0.125" stop-color="#abdeff"/><stop offset="0.250" stop-color="#c7ddff"/><stop offset="0.375" stop-color="#e2dbff"/><stop offset="0.500" stop-color="#fcdaff"/><stop offset="0.625" stop-color="#ffc6e9"/><stop offset="0.750" stop-color="#ffb4d6"/><stop offset="0.875" stop-color="#ffa5c5"/><stop offset="1.000" stop-color="#ff98b7"/></linearGradient><linearGradient id="s50"><stop offset="0.000" stop-color="#8edeff"/><stop offset="0.125" stop-color="#acddff"/><stop offset="0.250" stop-color="#c7dbff"/><stop offset="0.375" stop-color="#e2daff"/><stop offset="0.500" stop-color="#fcd8ff"/><stop offset="0.625" stop-color="#ffc5ea"/><stop offset="0.750" stop-color="#ffb3d6"/><stop offset="0.875" stop-color="#ffa4c5"/><stop offset="1.000" stop-color="#ff97b7"/></linearGradient><linearGradient id="s51"><stop offset="0.000" stop-color="#8fddff"/><stop offset="0.125" stop-color="#acdbff"/><stop offset="0.250" stop-color="#c7daff"/><stop offset="0.375" stop-color="#e2d8ff"/><stop offset="0.500" stop-color="#fcd6ff"/><stop offset="0.625" stop-color="#ffc3ea"/><stop offset="0.750" stop-color="#ffb2d6"/><stop offset="0.875" stop-color="#ffa3c6"/><stop offset="1.000" stop-color="#ff96b8"/></linearGradient><linearGradient id="s52"><stop offset="0.000" stop-color="#8fdbff"/><stop offset="0.125" stop-color="#acdaff"/><stop offset="0.250" stop-color="#c8d8ff"/><stop offset="0.375" stop-color="#e2d7ff"/><stop offset="0.500" stop-color="#fcd5ff"/><stop offset="0.625" stop-color="#ffc2ea"/><stop offset="0.750" stop-color="#ffb0d6"/><stop offset="0.875" stop-color="#ffa2c6"/><stop offset="1.000" stop-color="#ff95b8"/></linearGradient><linearGradient id="s53"><stop offset="0.000" stop-color="#90daff"/><stop offset="0.125" stop-color="#add8ff"/><stop offset="0.250" stop-color="#c8d7ff"/><stop offset="0.375" stop-color="#e2d5ff"/><stop offset="0.500" stop-color="#fcd3ff"/><stop offset="0.625" stop-color="#ffc0ea"/><stop offset="0.750" stop-color="#ffafd7"/><stop offset="0.875" stop-color="#ffa0c6"/><stop offset="1.000" stop-color="#ff94b8"/></linearGradient><linearGradient id="s54"><stop offset="0.000" stop-color="#90d9ff"/><stop offset="0.125" stop-color="#add7ff"/><stop offset="0.250" stop-color="#c8d5ff"/><stop offset="0.375" stop-color="#e2d3ff"/><stop offset="0.500" stop-color="#fcd1ff"/><stop offset="0.625" stop-color="#ffbfea"/><stop offset="0.750" stop-color="#ffaed7"/><stop offset="0.875" stop-color="#ff9fc6"/><stop offset="1.000" stop-color="#ff93b8"/></linearGradient><linearGradient id="s55"><stop offset="0.000" stop-color="#90d7ff"/><stop offset="0.125" stop-color="#add6ff"/><stop offset="0.250" stop-color="#c8d4ff"/><stop offset="0.375" stop-color="#e2d2ff"/><stop offset="0.500" stop-color="#fcd0ff"/><stop offset="0.625" stop-color="#ffbeea"/><stop offset="0.750" stop-color="#ffadd7"/><stop offset="0.875" stop-color="#ff9ec7"/><stop offset="1.000" stop-color="#ff92b9"/></linearGradient><linearGradient id="s56"><stop offset="0.000" stop-color="#91d6ff"/><stop offset="0.125" stop-color="#add4ff"/><stop offset="0.250" stop-color="#c8d2ff"/><stop offset="0.375" stop-color="#e2d0ff"/><stop offset="0.500" stop-color="#fcceff"/><stop offset="0.625" stop-color="#ffbceb"/><stop offset="0.750" stop-color="#ffabd7"/><stop offset="0.875" stop-color="#ff9dc7"/><stop offset="1.000" stop-color="#ff90b9"/></linearGradient></defs><rect x="1648.0" y="46.5" width="252.0" height="3.6" fill="url(#s0)"/><rect x="1648.0" y="49.5" width="252.0" height="3.6" fill="url(#s1)"/><rect x="1648.0" y="52.5" width="252.0" height="3.6" fill="url(#s2)"/><rect x="1648.0" y="55.5" width="252.0" height="3.6" fill="url(#s3)"/><rect x="1648.0" y="58.5" width="252.0" height="3.6" fill="url(#s4)"/><rect x="1648.0" y="61.5" width="252.0" height="3.6" fill="url(#s5)"/><rect x="1648.0" y="64.5" width="252.0" height="3.6" fill="url(#s6)"/><rect x="1648.0" y="67.5" width="252.0" height="3.6" fill="url(#s7)"/><rect x="1648.0" y="70.5" width="252.0" height="3.6" fill="url(#s8)"/><rect x="1648.0" y="73.5" width="252.0" height="3.6" fill="url(#s9)"/><rect x="1648.0" y="76.5" width="252.0" height="3.6" fill="url(#s10)"/><rect x="1648.0" y="79.5" width="252.0" height="3.6" fill="url(#s11)"/><rect x="1648.0" y="82.5" width="252.0" height="3.6" fill="url(#s12)"/><rect x="1648.0" y="85.5" width="252.0" height="3.6" fill="url(#s13)"/><rect x="1648.0" y="88.5" width="252.0" height="3.6" fill="url(#s14)"/><rect x="1648.0" y="91.5" width="252.0" height="3.6" fill="url(#s15)"/><rect x="1648.0" y="94.5" width="252.0" height="3.6" fill="url(#s16)"/><rect x="1648.0" y="97.5" width="252.0" height="3.6" fill="url(#s17)"/><rect x="1648.0" y="100.5" width="252.0" height="3.6" fill="url(#s18)"/><rect x="1648.0" y="103.5" width="252.0" height="3.6" fill="url(#s19)"/><rect x="1648.0" y="106.5" width="252.0" height="3.6" fill="url(#s20)"/><rect x="1648.0" y="109.5" width="252.0" height="3.6" fill="url(#s21)"/><rect x="1648.0" y="112.5" width="252.0" height="3.6" fill="url(#s22)"/><rect x="1648.0" y="115.5" width="252.0" height="3.6" fill="url(#s23)"/><rect x="1648.0" y="118.5" width="252.0" height="3.6" fill="url(#s24)"/><rect x="1648.0" y="121.5" width="252.0" height="3.6" fill="url(#s25)"/><rect x="1648.0" y="124.5" width="252.0" height="3.6" fill="url(#s26)"/><rect x="1648.0" y="127.5" width="252.0" height="3.6" fill="url(#s27)"/><rect x="1648.0" y="130.5" width="252.0" height="3.6" fill="url(#s28)"/><rect x="1648.0" y="133.5" width="252.0" height="3.6" fill="url(#s29)"/><rect x="1648.0" y="136.5" width="252.0" height="3.6" fill="url(#s30)"/><rect x="1648.0" y="139.5" width="252.0" height="3.6" fill="url(#s31)"/><rect x="1648.0" y="142.5" width="252.0" height="3.6" fill="url(#s32)"/><rect x="1648.0" y="145.5" width="252.0" height="3.6" fill="url(#s33)"/><rect x="1648.0" y="148.5" width="252.0" height="3.6" fill="url(#s34)"/><rect x="1648.0" y="151.5" width="252.0" height="3.6" fill="url(#s35)"/><rect x="1648.0" y="154.5" width="252.0" height="3.6" fill="url(#s36)"/><rect x="1648.0" y="157.5" width="252.0" height="3.6" fill="url(#s37)"/><rect x="1648.0" y="160.5" width="252.0" height="3.6" fill="url(#s38)"/><rect x="1648.0" y="163.5" width="252.0" height="3.6" fill="url(#s39)"/><rect x="1648.0" y="166.5" width="252.0" height="3.6" fill="url(#s40)"/><rect x="1648.0" y="169.5" width="252.0" height="3.6" fill="url(#s41)"/><rect x="1648.0" y="172.5" width="252.0" height="3.6" fill="url(#s42)"/><rect x="1648.0" y="175.5" width="252.0" height="3.6" fill="url(#s43)"/><rect x="1648.0" y="178.5" width="252.0" height="3.6" fill="url(#s44)"/><rect x="1648.0" y="181.5" width="252.0" height="3.6" fill="url(#s45)"/><rect x="1648.0" y="184.5" width="252.0" height="3.6" fill="url(#s46)"/><rect x="1648.0" y="187.5" width="252.0" height="3.6" fill="url(#s47)"/><rect x="1648.0" y="190.5" width="252.0" height="3.6" fill="url(#s48)"/><rect x="1648.0" y="193.5" width="252.0" height="3.6" fill="url(#s49)"/><rect x="1648.0" y="196.5" width="252.0" height="3.6" fill="url(#s50)"/><rect x="1648.0" y="199.5" width="252.0" height="3.6" fill="url(#s51)"/><rect x="1648.0" y="202.5" width="252.0" height="3.6" fill="url(#s52)"/><rect x="1648.0" y="205.5" width="252.0" height="3.6" fill="url(#s53)"/><rect x="1648.0" y="208.5" width="252.0" height="3.6" fill="url(#s54)"/><rect x="1648.0" y="211.5" width="252.0" height="3.5" fill="url(#s55)"/><rect x="1648.0" y="214.5" width="252.0" height="0.5" fill="url(#s56)"/></svg>
<svg width="1920" height="832" style="z-index:4"><rect x="1764.2" y="123.6" width="15.8" height="12.8" rx="2" fill="#f8f8f8" stroke="#2a2a2a" stroke-width="2"/><path d="M1767 123 L1780 131" stroke="#2a2a2a" stroke-width="1.6"/><ellipse cx="1777" cy="125.5" rx="2.8" ry="2.4" fill="#b0b0b0" stroke="#3a3a3a" stroke-width="1.2"/><circle cx="1771" cy="121.4" r="4.4" fill="#ffffff" stroke="#333" stroke-width="1.6"/></svg>
<div class="r" style="left:1613.00px;top:459.80px;width:291.50px;height:25.70px;background:#2c2c2c;z-index:2;"></div>
<div class="t" style="left:1614.00px;top:462.28px;font-size:18.70px;color:#f0f0f0;-webkit-text-stroke:0.35px #f0f0f0;transform:scaleX(1.2085);transform-origin:left top;z-index:3;">Gamut Coverage:  95.3%</div>
<div class="t" style="left:18.00px;top:553.28px;font-size:25.10px;color:#f0f0f0;-webkit-text-stroke:0.35px #f0f0f0;transform:scaleX(1.3628);transform-origin:left top;">Current Reading</div>
<div class="t" style="left:18.00px;top:595.00px;font-size:21.00px;color:#f0f0f0;-webkit-text-stroke:0.30px #f0f0f0;transform:scaleX(1.3495);transform-origin:left top;">x: 0.3123</div>
<div class="t" style="left:18.00px;top:632.79px;font-size:21.00px;color:#f0f0f0;-webkit-text-stroke:0.30px #f0f0f0;transform:scaleX(1.3634);transform-origin:left top;">y: 0.3316</div>
<div class="t" style="left:18.00px;top:668.79px;font-size:21.00px;color:#f0f0f0;-webkit-text-stroke:0.30px #f0f0f0;transform:scaleX(1.3531);transform-origin:left top;">fL: 38.88</div>
<div class="t" style="left:18.00px;top:707.29px;font-size:21.00px;color:#f0f0f0;-webkit-text-stroke:0.30px #f0f0f0;transform:scaleX(1.4135);transform-origin:left top;">cd/m²: 133.22</div>
<div class="r" style="left:398.10px;top:557.30px;width:300.10px;height:165.70px;background:#232323;"></div>
<div class="t" style="left:537.20px;top:540.03px;font-size:14.00px;color:#cfcfcf;-webkit-text-stroke:0.45px #cfcfcf;transform:translateX(-50%) scaleX(1.1259);transform-origin:center top;">RGB Balance</div>
<div class="t" style="left:392.10px;top:550.08px;font-size:13.50px;color:#cfcfcf;-webkit-text-stroke:0.45px #cfcfcf;transform:translateX(-100%) scaleX(1.1720);transform-origin:right top;">4</div>
<div class="t" style="left:392.10px;top:591.51px;font-size:13.50px;color:#cfcfcf;-webkit-text-stroke:0.45px #cfcfcf;transform:translateX(-100%) scaleX(1.1720);transform-origin:right top;">2</div>
<div class="t" style="left:392.10px;top:632.93px;font-size:13.50px;color:#cfcfcf;-webkit-text-stroke:0.45px #cfcfcf;transform:translateX(-100%) scaleX(1.1720);transform-origin:right top;">0</div>
<div class="t" style="left:392.10px;top:674.36px;font-size:13.50px;color:#cfcfcf;-webkit-text-stroke:0.45px #cfcfcf;transform:translateX(-100%) scaleX(1.1829);transform-origin:right top;">-2</div>
<div class="t" style="left:392.10px;top:715.78px;font-size:13.50px;color:#cfcfcf;-webkit-text-stroke:0.45px #cfcfcf;transform:translateX(-100%) scaleX(1.1829);transform-origin:right top;">-4</div>
<div class="t" style="left:548.00px;top:723.83px;font-size:14.00px;color:#cfcfcf;-webkit-text-stroke:0.45px #cfcfcf;transform:translateX(-50%) scaleX(1.1839);transform-origin:center top;">100W</div>
<svg width="1920" height="832" style="z-index:1"><line x1="392.10" y1="557.30" x2="698.20" y2="557.30" stroke="#8a8a8a" stroke-width="1.70"/><line x1="392.10" y1="598.72" x2="698.20" y2="598.72" stroke="#8a8a8a" stroke-width="1.70"/><line x1="392.10" y1="640.15" x2="698.20" y2="640.15" stroke="#8a8a8a" stroke-width="1.70"/><line x1="392.10" y1="681.58" x2="698.20" y2="681.58" stroke="#8a8a8a" stroke-width="1.70"/><line x1="392.10" y1="723.00" x2="698.20" y2="723.00" stroke="#8a8a8a" stroke-width="1.70"/><line x1="398.10" y1="556.30" x2="398.10" y2="729.00" stroke="#8a8a8a" stroke-width="1.70"/><line x1="698.20" y1="556.30" x2="698.20" y2="729.00" stroke="#8a8a8a" stroke-width="1.70"/></svg>
<div class="r" style="left:427.50px;top:640.15px;width:79.00px;height:48.70px;background:#151515;z-index:2;"></div>
<div class="r" style="left:427.50px;top:640.15px;width:77.00px;height:46.50px;background:linear-gradient(180deg,#ff3030 0%,#ff0000 20%,#f00000 70%,#b00000 100%);z-index:3;"></div>
<div class="r" style="left:506.50px;top:620.50px;width:79.00px;height:20.00px;background:#101010;z-index:2;"></div>
<div class="r" style="left:508.00px;top:620.50px;width:77.00px;height:18.50px;background:linear-gradient(180deg,#30b030 0%,#008a00 35%,#007800 75%,#003a00 100%);z-index:3;"></div>
<div class="r" style="left:586.50px;top:640.15px;width:79.00px;height:39.70px;background:#151515;z-index:2;"></div>
<div class="r" style="left:586.50px;top:640.15px;width:77.00px;height:37.50px;background:linear-gradient(180deg,#3030ff 0%,#0000ff 20%,#0000f0 70%,#0000a0 100%);z-index:3;"></div>
<div class="r" style="left:722.90px;top:535.60px;width:797.40px;height:36.00px;background:linear-gradient(180deg,#303030 0%,#2e2e2e 50%,#1c1c1c 50%,#1c1c1c 100%);"></div>
<div class="r" style="left:722.90px;top:535.60px;width:17.50px;height:36.00px;background:#0a0a0a;"></div>
<div class="r" style="left:1520.30px;top:535.60px;width:3.00px;height:201.00px;background:#292929;"></div>
<div class="r" style="left:722.90px;top:571.30px;width:797.40px;height:33.05px;background:#3d3d3d;"></div>
<div class="r" style="left:722.90px;top:571.30px;width:17.50px;height:33.05px;background:linear-gradient(90deg,#1e1e1e,#262626);"></div>
<div class="r" style="left:722.90px;top:604.35px;width:797.40px;height:33.05px;background:#737373;"></div>
<div class="r" style="left:722.90px;top:604.35px;width:17.50px;height:33.05px;background:linear-gradient(90deg,#1e1e1e,#262626);"></div>
<div class="r" style="left:722.90px;top:637.40px;width:797.40px;height:33.05px;background:#3d3d3d;"></div>
<div class="r" style="left:722.90px;top:637.40px;width:17.50px;height:33.05px;background:linear-gradient(90deg,#1e1e1e,#262626);"></div>
<div class="r" style="left:722.90px;top:670.45px;width:797.40px;height:33.05px;background:#737373;"></div>
<div class="r" style="left:722.90px;top:670.45px;width:17.50px;height:33.05px;background:linear-gradient(90deg,#1e1e1e,#262626);"></div>
<div class="r" style="left:722.90px;top:703.50px;width:797.40px;height:33.05px;background:#3d3d3d;"></div>
<div class="r" style="left:722.90px;top:703.50px;width:17.50px;height:33.05px;background:linear-gradient(90deg,#1e1e1e,#262626);"></div>
<div class="t" style="left:827.50px;top:545.66px;font-size:17.50px;color:#ececec;-webkit-text-stroke:0.30px #ececec;transform:scaleX(1.0300);transform-origin:left top;">White</div>
<div class="t" style="left:918.50px;top:545.66px;font-size:17.50px;color:#ececec;-webkit-text-stroke:0.30px #ececec;transform:scaleX(1.0300);transform-origin:left top;">Red</div>
<div class="t" style="left:998.80px;top:545.66px;font-size:17.50px;color:#ececec;-webkit-text-stroke:0.30px #ececec;transform:scaleX(1.0300);transform-origin:left top;">Green</div>
<div class="t" style="left:1090.20px;top:545.66px;font-size:17.50px;color:#ececec;-webkit-text-stroke:0.30px #ececec;transform:scaleX(1.0300);transform-origin:left top;">Blue</div>
<div class="t" style="left:1170.00px;top:545.66px;font-size:17.50px;color:#ececec;-webkit-text-stroke:0.30px #ececec;transform:scaleX(1.0300);transform-origin:left top;">Cyan</div>
<div class="t" style="left:1261.00px;top:545.66px;font-size:17.50px;color:#ececec;-webkit-text-stroke:0.30px #ececec;transform:scaleX(1.0300);transform-origin:left top;">Magenta</div>
<div class="t" style="left:1343.00px;top:545.66px;font-size:17.50px;color:#ececec;-webkit-text-stroke:0.30px #ececec;transform:scaleX(1.0300);transform-origin:left top;">Yellow</div>
<div class="t" style="left:1435.00px;top:545.66px;font-size:17.50px;color:#ececec;-webkit-text-stroke:0.30px #ececec;transform:scaleX(1.0300);transform-origin:left top;">100W</div>
<div class="t" style="left:745.00px;top:578.03px;font-size:20.30px;color:#ececec;-webkit-text-stroke:0.30px #ececec;transform:scaleX(0.8478);transform-origin:left top;">x: CIE31</div>
<div class="t" style="left:827.50px;top:578.03px;font-size:20.30px;color:#ececec;-webkit-text-stroke:0.30px #ececec;transform:scaleX(0.9350);transform-origin:left top;">0.3132</div>
<div class="t" style="left:918.50px;top:578.03px;font-size:20.30px;color:#ececec;-webkit-text-stroke:0.30px #ececec;transform:scaleX(0.9350);transform-origin:left top;">0.6316</div>
<div class="t" style="left:998.80px;top:578.03px;font-size:20.30px;color:#ececec;-webkit-text-stroke:0.30px #ececec;transform:scaleX(0.9350);transform-origin:left top;">0.3105</div>
<div class="t" style="left:1090.20px;top:578.03px;font-size:20.30px;color:#ececec;-webkit-text-stroke:0.30px #ececec;transform:scaleX(0.9350);transform-origin:left top;">0.1547</div>
<div class="t" style="left:1170.00px;top:578.03px;font-size:20.30px;color:#ececec;-webkit-text-stroke:0.30px #ececec;transform:scaleX(0.9350);transform-origin:left top;">0.2405</div>
<div class="t" style="left:1261.00px;top:578.03px;font-size:20.30px;color:#ececec;-webkit-text-stroke:0.30px #ececec;transform:scaleX(0.9350);transform-origin:left top;">0.3417</div>
<div class="t" style="left:1343.00px;top:578.03px;font-size:20.30px;color:#ececec;-webkit-text-stroke:0.30px #ececec;transform:scaleX(0.9350);transform-origin:left top;">0.4153</div>
<div class="t" style="left:1435.00px;top:578.03px;font-size:20.30px;color:#ececec;-webkit-text-stroke:0.30px #ececec;transform:scaleX(0.9350);transform-origin:left top;">0.3123</div>
<div class="t" style="left:745.00px;top:611.03px;font-size:20.30px;color:#ececec;-webkit-text-stroke:0.30px #ececec;transform:scaleX(0.8478);transform-origin:left top;">y: CIE31</div>
<div class="t" style="left:827.50px;top:611.03px;font-size:20.30px;color:#ececec;-webkit-text-stroke:0.30px #ececec;transform:scaleX(0.9350);transform-origin:left top;">0.3305</div>
<div class="t" style="left:918.50px;top:611.03px;font-size:20.30px;color:#ececec;-webkit-text-stroke:0.30px #ececec;transform:scaleX(0.9350);transform-origin:left top;">0.3216</div>
<div class="t" style="left:998.80px;top:611.03px;font-size:20.30px;color:#ececec;-webkit-text-stroke:0.30px #ececec;transform:scaleX(0.9350);transform-origin:left top;">0.6002</div>
<div class="t" style="left:1090.20px;top:611.03px;font-size:20.30px;color:#ececec;-webkit-text-stroke:0.30px #ececec;transform:scaleX(0.9350);transform-origin:left top;">0.0458</div>
<div class="t" style="left:1170.00px;top:611.03px;font-size:20.30px;color:#ececec;-webkit-text-stroke:0.30px #ececec;transform:scaleX(0.9350);transform-origin:left top;">0.3515</div>
<div class="t" style="left:1261.00px;top:611.03px;font-size:20.30px;color:#ececec;-webkit-text-stroke:0.30px #ececec;transform:scaleX(0.9350);transform-origin:left top;">0.1539</div>
<div class="t" style="left:1343.00px;top:611.03px;font-size:20.30px;color:#ececec;-webkit-text-stroke:0.30px #ececec;transform:scaleX(0.9350);transform-origin:left top;">0.5128</div>
<div class="t" style="left:1435.00px;top:611.03px;font-size:20.30px;color:#ececec;-webkit-text-stroke:0.30px #ececec;transform:scaleX(0.9350);transform-origin:left top;">0.3316</div>
<div class="t" style="left:745.00px;top:644.03px;font-size:20.30px;color:#ececec;-webkit-text-stroke:0.30px #ececec;transform:scaleX(0.8493);transform-origin:left top;">Y</div>
<div class="t" style="left:827.50px;top:644.03px;font-size:20.30px;color:#ececec;-webkit-text-stroke:0.30px #ececec;transform:scaleX(0.9350);transform-origin:left top;">70.9935</div>
<div class="t" style="left:918.50px;top:644.03px;font-size:20.30px;color:#ececec;-webkit-text-stroke:0.30px #ececec;transform:scaleX(0.9350);transform-origin:left top;">12.1453</div>
<div class="t" style="left:998.80px;top:644.03px;font-size:20.30px;color:#ececec;-webkit-text-stroke:0.30px #ececec;transform:scaleX(0.9350);transform-origin:left top;">56.6907</div>
<div class="t" style="left:1090.20px;top:644.03px;font-size:20.30px;color:#ececec;-webkit-text-stroke:0.30px #ececec;transform:scaleX(0.9350);transform-origin:left top;">2.7890</div>
<div class="t" style="left:1170.00px;top:644.03px;font-size:20.30px;color:#ececec;-webkit-text-stroke:0.30px #ececec;transform:scaleX(0.9350);transform-origin:left top;">62.4181</div>
<div class="t" style="left:1261.00px;top:644.03px;font-size:20.30px;color:#ececec;-webkit-text-stroke:0.30px #ececec;transform:scaleX(0.9350);transform-origin:left top;">16.5332</div>
<div class="t" style="left:1343.00px;top:644.03px;font-size:20.30px;color:#ececec;-webkit-text-stroke:0.30px #ececec;transform:scaleX(0.9350);transform-origin:left top;">69.3084</div>
<div class="t" style="left:1435.00px;top:644.03px;font-size:20.30px;color:#ececec;-webkit-text-stroke:0.30px #ececec;transform:scaleX(0.9350);transform-origin:left top;">133.2246</div>
<div class="t" style="left:745.00px;top:677.03px;font-size:20.30px;color:#ececec;-webkit-text-stroke:0.30px #ececec;transform:scaleX(0.9131);transform-origin:left top;">Target Y</div>
<div class="t" style="left:827.50px;top:677.03px;font-size:20.30px;color:#ececec;-webkit-text-stroke:0.30px #ececec;transform:scaleX(0.9350);transform-origin:left top;">70.9935</div>
<div class="t" style="left:918.50px;top:677.03px;font-size:20.30px;color:#ececec;-webkit-text-stroke:0.30px #ececec;transform:scaleX(0.9350);transform-origin:left top;">15.0972</div>
<div class="t" style="left:998.80px;top:677.03px;font-size:20.30px;color:#ececec;-webkit-text-stroke:0.30px #ececec;transform:scaleX(0.9350);transform-origin:left top;">50.7716</div>
<div class="t" style="left:1090.20px;top:677.03px;font-size:20.30px;color:#ececec;-webkit-text-stroke:0.30px #ececec;transform:scaleX(0.9350);transform-origin:left top;">5.1247</div>
<div class="t" style="left:1170.00px;top:677.03px;font-size:20.30px;color:#ececec;-webkit-text-stroke:0.30px #ececec;transform:scaleX(0.9350);transform-origin:left top;">55.8963</div>
<div class="t" style="left:1261.00px;top:677.03px;font-size:20.30px;color:#ececec;-webkit-text-stroke:0.30px #ececec;transform:scaleX(0.9350);transform-origin:left top;">20.2219</div>
<div class="t" style="left:1343.00px;top:677.03px;font-size:20.30px;color:#ececec;-webkit-text-stroke:0.30px #ececec;transform:scaleX(0.9350);transform-origin:left top;">65.8688</div>
<div class="t" style="left:1435.00px;top:677.03px;font-size:20.30px;color:#ececec;-webkit-text-stroke:0.30px #ececec;transform:scaleX(0.9350);transform-origin:left top;">133.2246</div>
<div class="t" style="left:745.00px;top:710.03px;font-size:20.30px;color:#ececec;-webkit-text-stroke:0.30px #ececec;transform:scaleX(0.8986);transform-origin:left top;">ΔE 2000</div>
<div class="t" style="left:827.50px;top:710.03px;font-size:20.30px;color:#ececec;-webkit-text-stroke:0.30px #ececec;transform:scaleX(0.9350);transform-origin:left top;">0.8106</div>
<div class="t" style="left:918.50px;top:710.03px;font-size:20.30px;color:#ececec;-webkit-text-stroke:0.30px #ececec;transform:scaleX(0.9350);transform-origin:left top;">5.1305</div>
<div class="t" style="left:998.80px;top:710.03px;font-size:20.30px;color:#ececec;-webkit-text-stroke:0.30px #ececec;transform:scaleX(0.9350);transform-origin:left top;">2.9393</div>
<div class="t" style="left:1090.20px;top:710.03px;font-size:20.30px;color:#ececec;-webkit-text-stroke:0.30px #ececec;transform:scaleX(0.9350);transform-origin:left top;">6.4973</div>
<div class="t" style="left:1170.00px;top:710.03px;font-size:20.30px;color:#ececec;-webkit-text-stroke:0.30px #ececec;transform:scaleX(0.9350);transform-origin:left top;">5.7644</div>
<div class="t" style="left:1261.00px;top:710.03px;font-size:20.30px;color:#ececec;-webkit-text-stroke:0.30px #ececec;transform:scaleX(0.9350);transform-origin:left top;">4.2059</div>
<div class="t" style="left:1343.00px;top:710.03px;font-size:20.30px;color:#ececec;-webkit-text-stroke:0.30px #ececec;transform:scaleX(0.9350);transform-origin:left top;">1.9338</div>
<div class="t" style="left:1435.00px;top:710.03px;font-size:20.30px;color:#ececec;-webkit-text-stroke:0.30px #ececec;transform:scaleX(0.9350);transform-origin:left top;">2.3171</div>
<div class="r" style="left:2.00px;top:745.00px;width:179.50px;height:86.00px;border-radius:5px;background:linear-gradient(180deg,#a8a8a8 0%,#9a9a9a 10%,#8a8a8a 55%,#6a6a6a 75%,#505050 100%);box-shadow:inset 0 0 0 1px rgba(0,0,0,0.25);"></div>
<div class="r" style="left:10.00px;top:753.00px;width:165.00px;height:50.00px;border-radius:5px;background:#c4c4c4;box-shadow:0 0 0 1px rgba(0,0,0,0.2);"></div>
<div class="t" style="left:92.00px;top:811.08px;font-size:14.50px;color:#2e2e2e;font-weight:bold;transform:translateX(-50%);transform-origin:center top;">White</div>
<div class="r" style="left:184.90px;top:745.00px;width:179.50px;height:86.00px;border-radius:5px;background:linear-gradient(180deg,#a8a8a8 0%,#9a9a9a 10%,#8a8a8a 55%,#6a6a6a 75%,#505050 100%);box-shadow:inset 0 0 0 1px rgba(0,0,0,0.25);"></div>
<div class="r" style="left:192.90px;top:753.00px;width:165.00px;height:50.00px;border-radius:5px;background:#c00000;box-shadow:0 0 0 1px rgba(0,0,0,0.2);"></div>
<div class="t" style="left:274.90px;top:811.08px;font-size:14.50px;color:#2e2e2e;font-weight:bold;transform:translateX(-50%);transform-origin:center top;">Red</div>
<div class="r" style="left:367.80px;top:745.00px;width:179.50px;height:86.00px;border-radius:5px;background:linear-gradient(180deg,#a8a8a8 0%,#9a9a9a 10%,#8a8a8a 55%,#6a6a6a 75%,#505050 100%);box-shadow:inset 0 0 0 1px rgba(0,0,0,0.25);"></div>
<div class="r" style="left:375.80px;top:753.00px;width:165.00px;height:50.00px;border-radius:5px;background:#00c000;box-shadow:0 0 0 1px rgba(0,0,0,0.2);"></div>
<div class="t" style="left:457.80px;top:811.08px;font-size:14.50px;color:#2e2e2e;font-weight:bold;transform:translateX(-50%);transform-origin:center top;">Green</div>
<div class="r" style="left:550.70px;top:745.00px;width:179.50px;height:86.00px;border-radius:5px;background:linear-gradient(180deg,#a8a8a8 0%,#9a9a9a 10%,#8a8a8a 55%,#6a6a6a 75%,#505050 100%);box-shadow:inset 0 0 0 1px rgba(0,0,0,0.25);"></div>
<div class="r" style="left:558.70px;top:753.00px;width:165.00px;height:50.00px;border-radius:5px;background:#0000c8;box-shadow:0 0 0 1px rgba(0,0,0,0.2);"></div>
<div class="t" style="left:640.70px;top:811.08px;font-size:14.50px;color:#2e2e2e;font-weight:bold;transform:translateX(-50%);transform-origin:center top;">Blue</div>
<div class="r" style="left:733.60px;top:745.00px;width:179.50px;height:86.00px;border-radius:5px;background:linear-gradient(180deg,#a8a8a8 0%,#9a9a9a 10%,#8a8a8a 55%,#6a6a6a 75%,#505050 100%);box-shadow:inset 0 0 0 1px rgba(0,0,0,0.25);"></div>
<div class="r" style="left:741.60px;top:753.00px;width:165.00px;height:50.00px;border-radius:5px;background:#00c0c0;box-shadow:0 0 0 1px rgba(0,0,0,0.2);"></div>
<div class="t" style="left:823.60px;top:811.08px;font-size:14.50px;color:#2e2e2e;font-weight:bold;transform:translateX(-50%);transform-origin:center top;">Cyan</div>
<div class="r" style="left:916.50px;top:745.00px;width:179.50px;height:86.00px;border-radius:5px;background:linear-gradient(180deg,#a8a8a8 0%,#9a9a9a 10%,#8a8a8a 55%,#6a6a6a 75%,#505050 100%);box-shadow:inset 0 0 0 1px rgba(0,0,0,0.25);"></div>
<div class="r" style="left:924.50px;top:753.00px;width:165.00px;height:50.00px;border-radius:5px;background:#c000c0;box-shadow:0 0 0 1px rgba(0,0,0,0.2);"></div>
<div class="t" style="left:1006.50px;top:811.08px;font-size:14.50px;color:#2e2e2e;font-weight:bold;transform:translateX(-50%);transform-origin:center top;">Magenta</div>
<div class="r" style="left:1099.40px;top:745.00px;width:179.50px;height:86.00px;border-radius:5px;background:linear-gradient(180deg,#a8a8a8 0%,#9a9a9a 10%,#8a8a8a 55%,#6a6a6a 75%,#505050 100%);box-shadow:inset 0 0 0 1px rgba(0,0,0,0.25);"></div>
<div class="r" style="left:1107.40px;top:753.00px;width:165.00px;height:50.00px;border-radius:5px;background:#c4c400;box-shadow:0 0 0 1px rgba(0,0,0,0.2);"></div>
<div class="t" style="left:1189.40px;top:811.08px;font-size:14.50px;color:#2e2e2e;font-weight:bold;transform:translateX(-50%);transform-origin:center top;">Yellow</div>
<div class="r" style="left:1282.30px;top:745.00px;width:179.50px;height:86.00px;border-radius:5px;background:#2a2a2a;box-shadow:inset 0 2px 2px #151515;"></div>
<div class="r" style="left:1288.80px;top:752.00px;width:166.00px;height:51.00px;border-radius:7px;background:#ffffff;"></div>
<div class="t" style="left:1372.30px;top:811.08px;font-size:14.50px;color:#f4f4f4;font-weight:bold;transform:translateX(-50%);transform-origin:center top;">100W</div>
<div class="r" style="left:1463.00px;top:742.00px;width:457.00px;height:90.00px;background:#2a2a2a;"></div>
<div class="r" style="left:1466.00px;top:745.00px;width:67.00px;height:25.00px;border-radius:4px 4px 0 0;background:linear-gradient(180deg,#b4b4b4 0%,#a2a2a2 30%,#8e8e8e 65%,#6c6c6c 100%);"></div>
<div class="r" style="left:1466.00px;top:772.00px;width:67.00px;height:59.00px;border-radius:0 0 4px 4px;background:linear-gradient(180deg,#b4b4b4 0%,#a2a2a2 30%,#8e8e8e 65%,#6c6c6c 100%);"></div>
<div class="r" style="left:1535.00px;top:745.00px;width:65.50px;height:42.00px;background:linear-gradient(180deg,#b4b4b4 0%,#a2a2a2 30%,#8e8e8e 65%,#6c6c6c 100%);border-radius:4px 0 0 0;"></div>
<div class="r" style="left:1602.00px;top:745.00px;width:61.00px;height:42.00px;background:linear-gradient(180deg,#b4b4b4 0%,#a2a2a2 30%,#8e8e8e 65%,#6c6c6c 100%);"></div>
<div class="r" style="left:1664.50px;top:745.00px;width:62.00px;height:42.00px;background:linear-gradient(180deg,#b4b4b4 0%,#a2a2a2 30%,#8e8e8e 65%,#6c6c6c 100%);"></div>
<div class="r" style="left:1728.00px;top:745.00px;width:61.50px;height:42.00px;background:linear-gradient(180deg,#b4b4b4 0%,#a2a2a2 30%,#8e8e8e 65%,#6c6c6c 100%);"></div>
<div class="r" style="left:1791.00px;top:745.00px;width:62.00px;height:42.00px;background:linear-gradient(180deg,#b4b4b4 0%,#a2a2a2 30%,#8e8e8e 65%,#6c6c6c 100%);"></div>
<div class="r" style="left:1853.00px;top:745.00px;width:65.00px;height:42.00px;background:linear-gradient(180deg,#3a3a3a,#2e2e2e);border-radius:0 4px 0 0;"></div>
<div class="r" style="left:1535.00px;top:789.00px;width:191.50px;height:41.50px;background:linear-gradient(180deg,#b4b4b4 0%,#a2a2a2 30%,#8e8e8e 65%,#6c6c6c 100%);border-radius:0 0 0 4px;"></div>
<div class="r" style="left:1728.00px;top:789.00px;width:190.00px;height:41.50px;background:linear-gradient(180deg,#b4b4b4 0%,#a2a2a2 30%,#8e8e8e 65%,#6c6c6c 100%);border-radius:0 0 4px 0;"></div>
<div class="t" style="left:1616.00px;top:792.61px;font-size:31.70px;color:#2a2a2a;-webkit-text-stroke:0.50px #2a2a2a;">Back</div>
<div class="t" style="left:1767.00px;top:792.61px;font-size:31.70px;color:#2a2a2a;-webkit-text-stroke:0.50px #2a2a2a;transform:scaleX(1.0893);transform-origin:left top;">Next</div>
<svg width="1920" height="832" style="z-index:2"><defs><linearGradient id="cg" x1="0" y1="0" x2="0" y2="1"><stop offset="0" stop-color="#838383"/><stop offset="0.5" stop-color="#939393"/><stop offset="1" stop-color="#b4b4b4"/></linearGradient><filter id="cb" x="-20%" y="-20%" width="140%" height="140%"><feGaussianBlur stdDeviation="0.8"/></filter></defs><circle cx="1567.0" cy="766.0" r="13.5" fill="url(#cg)" filter="url(#cb)"/><circle cx="1632.5" cy="766.0" r="13.5" fill="url(#cg)" filter="url(#cb)"/><circle cx="1695.0" cy="766.0" r="13.5" fill="url(#cg)" filter="url(#cb)"/><circle cx="1758.5" cy="766.0" r="13.5" fill="url(#cg)" filter="url(#cb)"/><circle cx="1822.0" cy="766.0" r="13.5" fill="url(#cg)" filter="url(#cb)"/><circle cx="1499.5" cy="757.0" r="10.0" fill="url(#cg)" filter="url(#cb)"/><circle cx="1578.0" cy="809.7" r="13.5" fill="url(#cg)" filter="url(#cb)"/><circle cx="1877.5" cy="809.7" r="13.5" fill="url(#cg)" filter="url(#cb)"/><circle cx="1886" cy="766" r="13.5" fill="#262626"/><rect x="1562" y="761" width="10.5" height="10" fill="#262626"/><path d="M1627.5 757.5 L1640 766 L1627.5 774.5 Z" fill="#262626"/><path d="M1690 760 h-3 v13 h3 M1700 760 h3 v13 h-3" fill="none" stroke="#262626" stroke-width="2.4"/><path d="M1691.5 766.5 h7" stroke="#262626" stroke-width="1.6" stroke-dasharray="1.5 1"/><path d="M1758.5 766 c-3 -4 -8 -4 -8 0 c0 4 5 4 8 0 c3 -4 8 -4 8 0 c0 4 -5 4 -8 0 z" fill="none" stroke="#262626" stroke-width="2.6"/><path d="M1815.5 763 a7 7 0 0 1 12 -1" fill="none" stroke="#262626" stroke-width="2.6"/><path d="M1828.5 769 a7 7 0 0 1 -12 1" fill="none" stroke="#262626" stroke-width="2.6"/><path d="M1829 758 l0 6 l-5 -1 z M1815 774 l0 -6 l5 1 z" fill="#262626"/><path d="M1493.5 760 L1499.5 753.5 L1505.5 760 Z" fill="#262626"/><rect x="1479.5" y="780.5" width="40" height="40" rx="6" fill="#a8a8a8" stroke="#1c1c1c" stroke-width="3"/><rect x="1490" y="791" width="19" height="19" fill="#0a0a0a"/><path d="M1577 803 l-5 6.5 l5 6.5 M1583 803 l-5 6.5 l5 6.5" fill="none" stroke="#262626" stroke-width="2.4"/><path d="M1874 803 l5 6.5 l-5 6.5 M1868 803 l5 6.5 l-5 6.5" fill="none" stroke="#262626" stroke-width="2.4"/></svg>
</body></html>
